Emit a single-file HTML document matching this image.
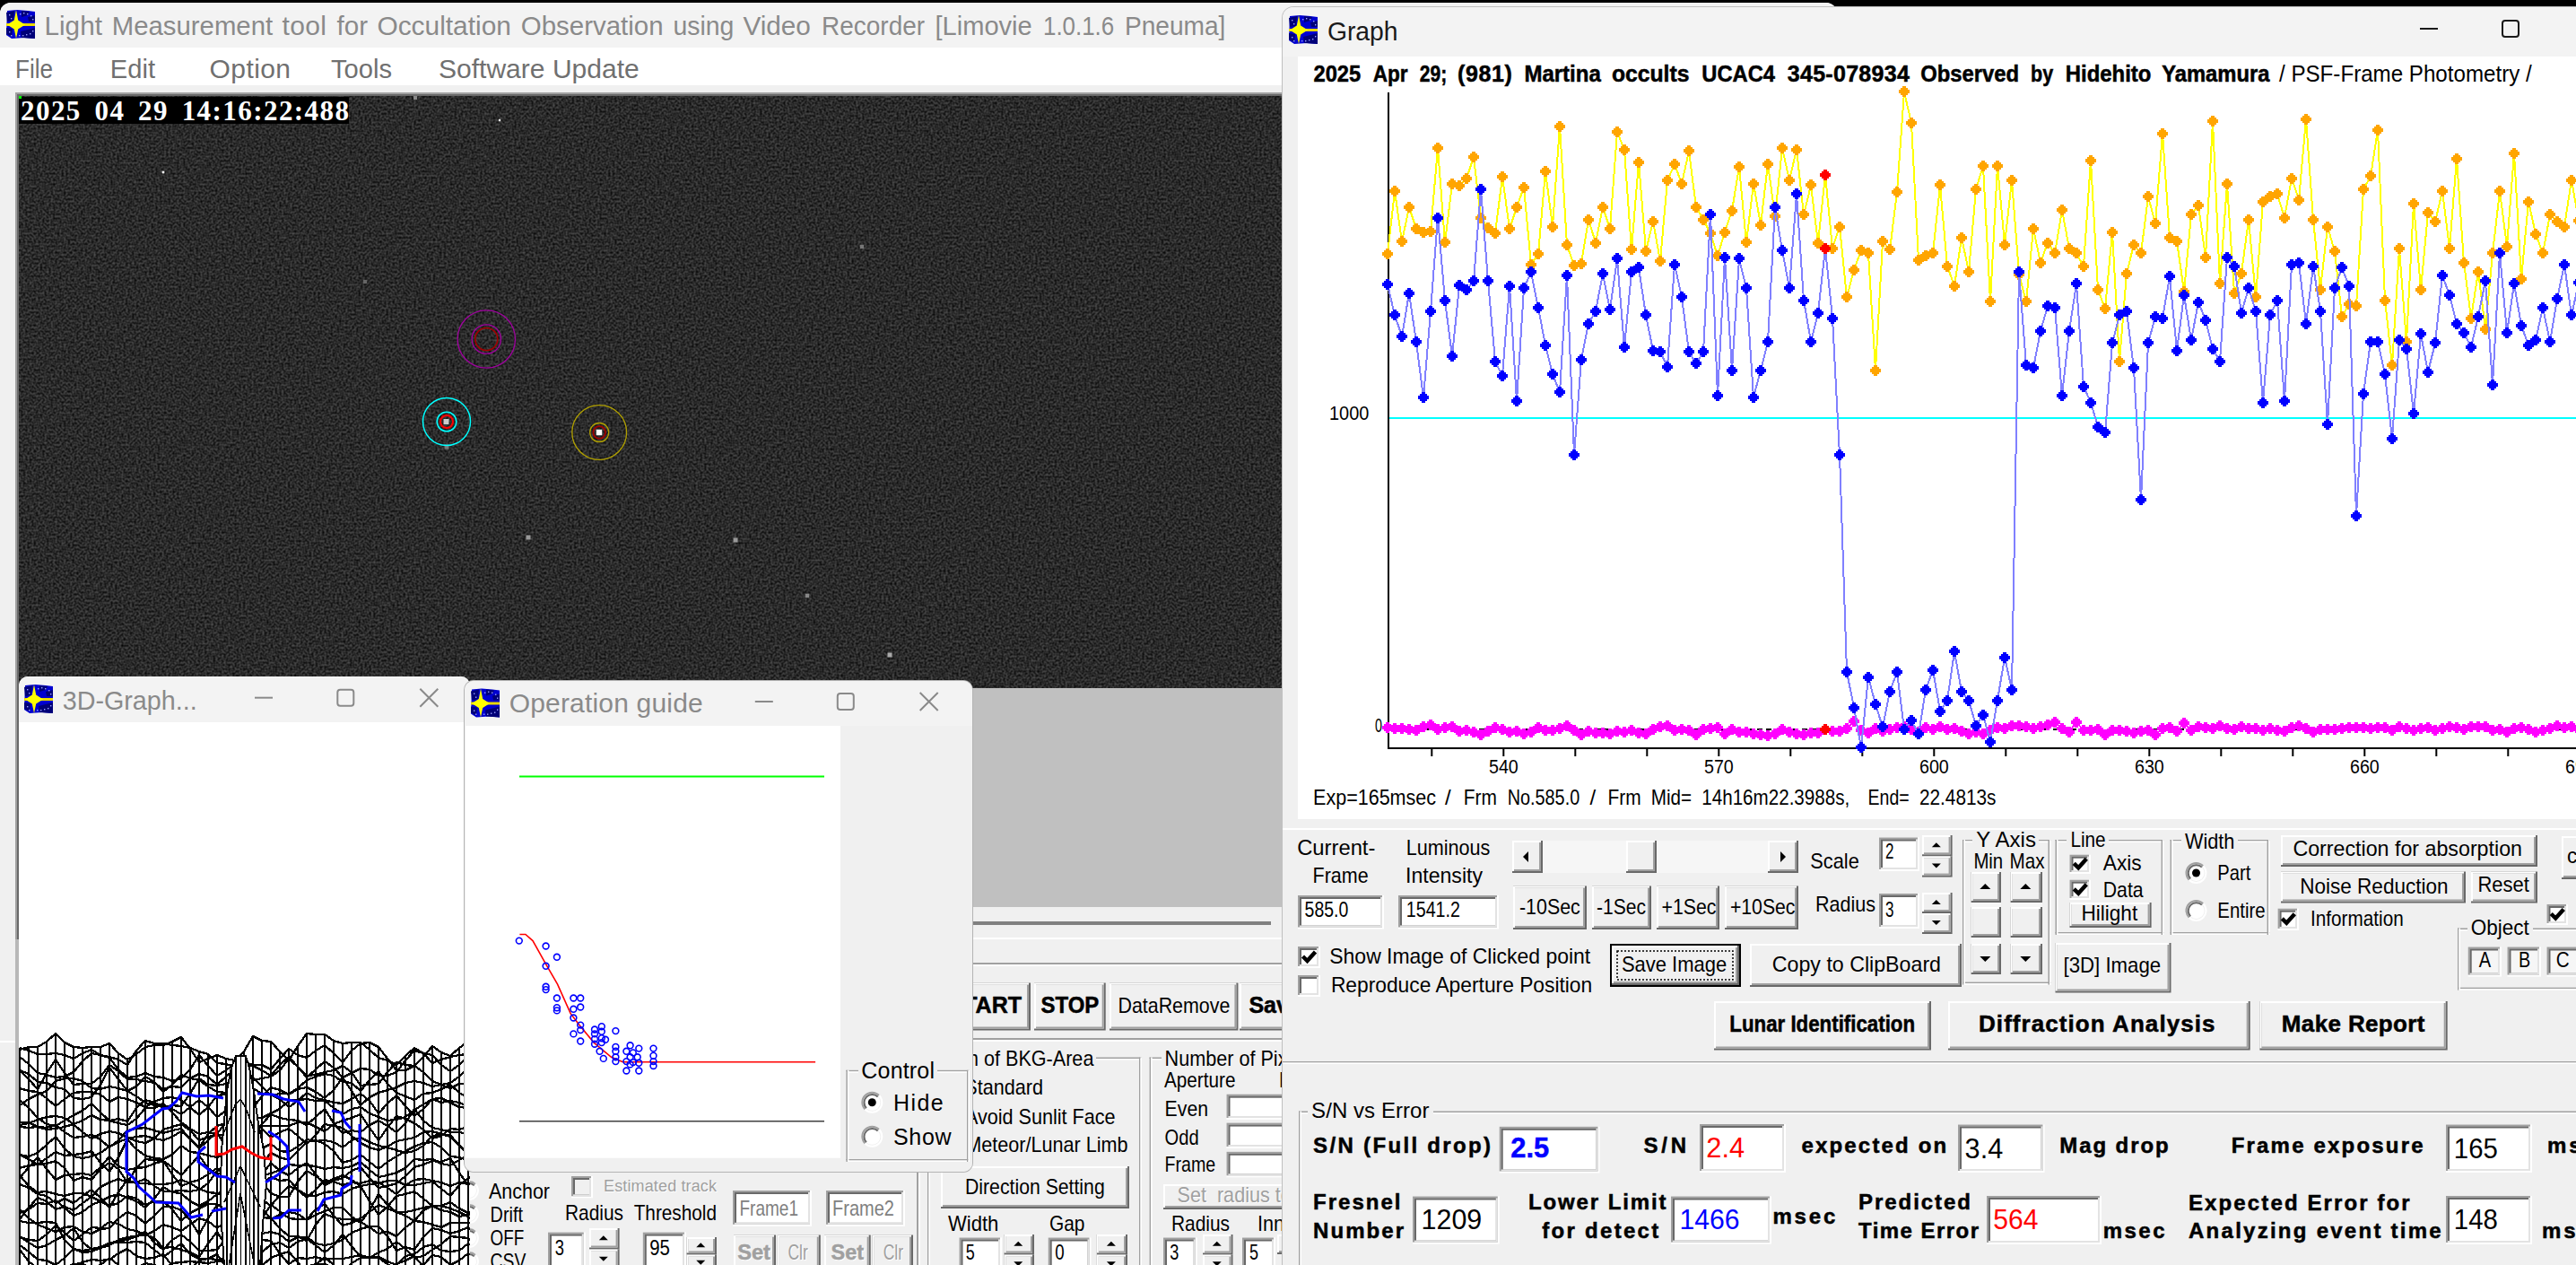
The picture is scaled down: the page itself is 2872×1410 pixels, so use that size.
<!DOCTYPE html>
<html lang="en"><head><meta charset="utf-8"><title>Limovie</title>
<style>
html,body{margin:0;padding:0;background:#000;}
body{width:2872px;height:1410px;overflow:hidden;position:relative;font-family:"Liberation Sans",sans-serif;}
.win{position:absolute;overflow:hidden;}
.win svg{display:block;font-family:"Liberation Sans",sans-serif;}
text{white-space:pre;}
</style></head><body>
<svg width="0" height="0" style="position:absolute"><defs>
<filter id="noise" x="0" y="0" width="100%" height="100%" color-interpolation-filters="sRGB">
<feTurbulence type="fractalNoise" baseFrequency="0.42" numOctaves="1" seed="5" result="n"/>
<feColorMatrix type="matrix" values="0.42 0 0 0 -0.043  0.42 0 0 0 -0.043  0.42 0 0 0 -0.043  0 0 0 0 1"/>
</filter></defs></svg>
<div class="win" style="left:0px;top:3px;width:2048px;height:1407px;border-radius:12px 12px 0 0;background:#f0f0f0;"><svg width="2048" height="1407" viewBox="0 3 2048 1407"><rect x="0" y="3" width="2048" height="50" fill="#f3f3f3"/><rect x="0" y="53" width="2048" height="42" fill="#ffffff"/><rect x="0" y="95" width="2048" height="1315" fill="#f0f0f0"/><g transform="translate(7,11)"><path d="M1 1 L12 0 L24 1 L32 2 L32 32 L20 31 L6 32 L0 28 Z" fill="#0000d0"/><path d="M0 3 L9 1 L8 12 L1 13 Z M17 1 L26 2 L24 6 L17 8 Z M24 8 L32 6 L32 13 L25 13 Z M0 20 L7 21 L6 30 L0 27 Z M16 24 L32 20 L32 32 L17 31 Z" fill="#000078"/><rect x="3" y="5" width="1.4" height="1.4" fill="#9aa0ff"/><rect x="5" y="9" width="1.4" height="1.4" fill="#9aa0ff"/><rect x="19" y="3" width="1.4" height="1.4" fill="#9aa0ff"/><rect x="23" y="4" width="1.4" height="1.4" fill="#9aa0ff"/><rect x="27" y="6" width="1.4" height="1.4" fill="#9aa0ff"/><rect x="29" y="10" width="1.4" height="1.4" fill="#9aa0ff"/><rect x="3" y="24" width="1.4" height="1.4" fill="#9aa0ff"/><rect x="5" y="28" width="1.4" height="1.4" fill="#9aa0ff"/><rect x="18" y="28" width="1.4" height="1.4" fill="#9aa0ff"/><rect x="22" y="27" width="1.4" height="1.4" fill="#9aa0ff"/><rect x="26" y="26" width="1.4" height="1.4" fill="#9aa0ff"/><rect x="29" y="23" width="1.4" height="1.4" fill="#9aa0ff"/><rect x="15" y="4" width="1.4" height="1.4" fill="#9aa0ff"/><rect x="14" y="28" width="1.4" height="1.4" fill="#9aa0ff"/><rect x="0" y="15" width="32" height="3" fill="#e8d800"/><path d="M11 0 L13.2 11.5 L21 16.5 L13.2 21.5 L11 32 L8.8 21.5 L1 16.5 L8.8 11.5 Z" fill="#ffff00"/></g><text x="49.5" y="39.0" font-size="30" fill="#8a8a8a" textLength="64.4" lengthAdjust="spacingAndGlyphs">Light</text><text x="124.8" y="39.0" font-size="30" fill="#8a8a8a" textLength="179.3" lengthAdjust="spacingAndGlyphs">Measurement</text><text x="314.5" y="39.0" font-size="30" fill="#8a8a8a" textLength="49.4" lengthAdjust="spacing">tool</text><text x="375.6" y="39.0" font-size="30" fill="#8a8a8a" textLength="34.5" lengthAdjust="spacingAndGlyphs">for</text><text x="420.4" y="39.0" font-size="30" fill="#8a8a8a" textLength="149.5" lengthAdjust="spacingAndGlyphs">Occultation</text><text x="580.8" y="39.0" font-size="30" fill="#8a8a8a" textLength="158.7" lengthAdjust="spacingAndGlyphs">Observation</text><text x="750.4" y="39.0" font-size="30" fill="#8a8a8a" textLength="67.9" lengthAdjust="spacingAndGlyphs">using</text><text x="828.4" y="39.0" font-size="30" fill="#8a8a8a" textLength="75.5" lengthAdjust="spacingAndGlyphs">Video</text><text x="916.1" y="39.0" font-size="30" fill="#8a8a8a" textLength="115.0" lengthAdjust="spacingAndGlyphs">Recorder</text><text x="1042.5" y="39.0" font-size="30" fill="#8a8a8a" textLength="108.2" lengthAdjust="spacingAndGlyphs">[Limovie</text><text x="1163.0" y="39.0" font-size="30" fill="#8a8a8a" textLength="79.2" lengthAdjust="spacingAndGlyphs">1.0.1.6</text><text x="1253.9" y="39.0" font-size="30" fill="#8a8a8a" textLength="112.5" lengthAdjust="spacingAndGlyphs">Pneuma]</text><text x="17.0" y="86.8" font-size="30" fill="#707070" textLength="42.0" lengthAdjust="spacingAndGlyphs">File</text><text x="122.8" y="86.8" font-size="30" fill="#707070" textLength="50.2" lengthAdjust="spacingAndGlyphs">Edit</text><text x="233.6" y="86.8" font-size="30" fill="#707070" textLength="90.4" lengthAdjust="spacing">Option</text><text x="369.0" y="86.8" font-size="30" fill="#707070" textLength="68.0" lengthAdjust="spacingAndGlyphs">Tools</text><text x="489.0" y="86.8" font-size="30" fill="#707070" textLength="223.7" lengthAdjust="spacing">Software Update</text><rect x="17" y="103" width="1423" height="944" fill="#a0a0a0"/><rect x="19" y="105" width="1421" height="942" fill="#696969"/><rect x="21" y="107" width="1419" height="904" fill="#c0c0c0"/><rect x="21" y="107" width="1419" height="660" fill="#2d2d2d"/><rect x="21" y="107" width="1419" height="660" filter="url(#noise)" opacity="1"/><rect x="180.7" y="190.7" width="2.6" height="2.6" fill="#fff"/><rect x="555.8" y="132.8" width="2.4" height="2.4" fill="#eee"/><rect x="461" y="107" width="4" height="4" fill="#888"/><rect x="958.8" y="272.8" width="4.4" height="4.4" fill="#777"/><rect x="405" y="312" width="4" height="4" fill="#666"/><rect x="586.5" y="596.5" width="5" height="5" fill="#999"/><rect x="817.5" y="599.5" width="5" height="5" fill="#999"/><rect x="897.8" y="661.8" width="4.4" height="4.4" fill="#888"/><rect x="989.5" y="727.5" width="5" height="5" fill="#aaa"/><rect x="495.5" y="495.5" width="5" height="5" fill="#777"/><rect x="494.5" y="467" width="6" height="6" fill="#ccc"/><rect x="664.8" y="478.8" width="6.4" height="6.4" fill="#fff"/><circle cx="542.3" cy="378" r="32.2" fill="none" stroke="#a000a0" stroke-width="1.3"/><circle cx="542.3" cy="378" r="16.2" fill="none" stroke="#a000a0" stroke-width="1.3"/><circle cx="542.3" cy="378" r="12.5" fill="none" stroke="#a00000" stroke-width="1.6"/><circle cx="498" cy="470" r="26.5" fill="none" stroke="#00ffff" stroke-width="1.5"/><circle cx="498" cy="470" r="10.8" fill="none" stroke="#00ffff" stroke-width="1.5"/><circle cx="498" cy="470" r="7" fill="none" stroke="#ff0000" stroke-width="2"/><circle cx="668.2" cy="482" r="30.4" fill="none" stroke="#b0a000" stroke-width="1.3"/><circle cx="668.2" cy="482" r="10.5" fill="none" stroke="#b0a000" stroke-width="1.3"/><circle cx="668.2" cy="482" r="6.8" fill="none" stroke="#a00000" stroke-width="1.8"/><rect x="21" y="108" width="368" height="30" fill="#000"/><rect x="21" y="107" width="3" height="3" fill="#00ff00"/><text x="23" y="134" font-size="31" font-weight="bold" font-family='"Liberation Serif", serif' fill="#fff" textLength="366" lengthAdjust="spacing" word-spacing="5.5">2025 04 29 14:16:22:488</text><rect x="0" y="1160" width="18" height="2" fill="#ffffff"/><rect x="21" y="1011" width="1419" height="399" fill="#f0f0f0"/><rect x="17" y="1047" width="4" height="363" fill="#b8b8b8"/><rect x="1040" y="1027" width="377" height="4" fill="#808080"/><rect x="1040" y="1045" width="400" height="2" fill="#ffffff"/><rect x="1040" y="1073" width="400" height="2" fill="#a0a0a0"/><rect x="1040" y="1075" width="400" height="2" fill="#ffffff"/><rect x="1040" y="1157" width="400" height="2" fill="#a0a0a0"/><rect x="1040" y="1159" width="400" height="2" fill="#ffffff"/><rect x="1040" y="1095.5" width="109" height="53" fill="#696969"/><rect x="1040" y="1095.5" width="107" height="51" fill="#ffffff"/><rect x="1042" y="1097.5" width="105" height="49" fill="#a0a0a0"/><rect x="1042" y="1097.5" width="103" height="47" fill="#f0f0f0"/><text x="1057.5" y="1128.6" font-size="25" font-weight="bold" stroke="#000" stroke-width="0.5" fill="#000" textLength="81.5" lengthAdjust="spacing">START</text><rect x="1153" y="1095.5" width="79.7" height="53" fill="#696969"/><rect x="1153" y="1095.5" width="77.7" height="51" fill="#ffffff"/><rect x="1155" y="1097.5" width="75.7" height="49" fill="#a0a0a0"/><rect x="1155" y="1097.5" width="73.7" height="47" fill="#f0f0f0"/><text x="1160.5" y="1128.6" font-size="25" font-weight="bold" stroke="#000" stroke-width="0.5" fill="#000" textLength="64.7" lengthAdjust="spacingAndGlyphs">STOP</text><rect x="1237" y="1095.5" width="143.4" height="53" fill="#696969"/><rect x="1237" y="1095.5" width="141.4" height="51" fill="#ffffff"/><rect x="1239" y="1097.5" width="139.4" height="49" fill="#a0a0a0"/><rect x="1239" y="1097.5" width="137.4" height="47" fill="#f0f0f0"/><text x="1246.5" y="1128.6" font-size="24" fill="#000" textLength="124.8" lengthAdjust="spacingAndGlyphs">DataRemove</text><rect x="1382" y="1095.5" width="98" height="53" fill="#696969"/><rect x="1382" y="1095.5" width="96" height="51" fill="#ffffff"/><rect x="1384" y="1097.5" width="94" height="49" fill="#a0a0a0"/><rect x="1384" y="1097.5" width="92" height="47" fill="#f0f0f0"/><text x="1392.4" y="1128.6" font-size="25" font-weight="bold" stroke="#000" stroke-width="0.5" fill="#000" textLength="58.4" lengthAdjust="spacing">Save</text><rect x="1034" y="1178.5" width="6" height="1.5" fill="#a0a0a0"/><rect x="1034" y="1180" width="6" height="1.5" fill="#ffffff"/><rect x="1222" y="1178.5" width="51" height="1.5" fill="#a0a0a0"/><rect x="1222" y="1180" width="51" height="1.5" fill="#ffffff"/><rect x="1034" y="1417" width="239" height="1.5" fill="#a0a0a0"/><rect x="1034" y="1418.5" width="239" height="1.5" fill="#ffffff"/><rect x="1034" y="1178.5" width="1.5" height="241.5" fill="#a0a0a0"/><rect x="1035.5" y="1178.5" width="1.5" height="241.5" fill="#ffffff"/><rect x="1270" y="1178.5" width="1.5" height="241.5" fill="#a0a0a0"/><rect x="1271.5" y="1178.5" width="1.5" height="241.5" fill="#ffffff"/><text x="1040.6" y="1188.4" font-size="24" fill="#000" textLength="178.8" lengthAdjust="spacingAndGlyphs">Form of BKG-Area</text><text x="1075.3" y="1220.3" font-size="24" fill="#000" textLength="87.7" lengthAdjust="spacingAndGlyphs">Standard</text><text x="1075.9" y="1252.5" font-size="24" fill="#000" textLength="167.7" lengthAdjust="spacingAndGlyphs">Avoid Sunlit Face</text><text x="1076.2" y="1284.4" font-size="24" fill="#000" textLength="181.3" lengthAdjust="spacingAndGlyphs">Meteor/Lunar Limb</text><rect x="1049" y="1300" width="210" height="47" fill="#696969"/><rect x="1049" y="1300" width="208" height="45" fill="#ffffff"/><rect x="1051" y="1302" width="206" height="43" fill="#a0a0a0"/><rect x="1051" y="1302" width="204" height="41" fill="#f0f0f0"/><text x="1076.0" y="1331.3" font-size="24" fill="#000" textLength="155.7" lengthAdjust="spacingAndGlyphs">Direction Setting</text><text x="1057.0" y="1372.0" font-size="24" fill="#000" textLength="56.3" lengthAdjust="spacingAndGlyphs">Width</text><text x="1170.0" y="1372.0" font-size="24" fill="#000" textLength="39.5" lengthAdjust="spacingAndGlyphs">Gap</text><rect x="1069.5" y="1379.5" width="47.5" height="45.5" fill="#ffffff"/><rect x="1069.5" y="1379.5" width="45.5" height="43.5" fill="#a0a0a0"/><rect x="1071.5" y="1381.5" width="43.5" height="41.5" fill="#e3e3e3"/><rect x="1071.5" y="1381.5" width="41.5" height="39.5" fill="#696969"/><rect x="1073.5" y="1383.5" width="39.5" height="37.5" fill="#ffffff"/><text x="1076.7" y="1403.7" font-size="24" fill="#000" textLength="10.0" lengthAdjust="spacingAndGlyphs">5</text><rect x="1119.5" y="1376" width="33.5" height="22.5" fill="#696969"/><rect x="1119.5" y="1376" width="31.5" height="20.5" fill="#ffffff"/><rect x="1121.5" y="1378" width="29.5" height="18.5" fill="#a0a0a0"/><rect x="1121.5" y="1378" width="27.5" height="16.5" fill="#f0f0f0"/><polygon points="1130.25,1388.75 1140.25,1388.75 1135.25,1383.75" fill="#000"/><rect x="1119.5" y="1398.5" width="33.5" height="22.5" fill="#696969"/><rect x="1119.5" y="1398.5" width="31.5" height="20.5" fill="#ffffff"/><rect x="1121.5" y="1400.5" width="29.5" height="18.5" fill="#a0a0a0"/><rect x="1121.5" y="1400.5" width="27.5" height="16.5" fill="#f0f0f0"/><polygon points="1130.25,1406.25 1140.25,1406.25 1135.25,1411.25" fill="#000"/><rect x="1168.7" y="1379.5" width="47.8" height="45.5" fill="#ffffff"/><rect x="1168.7" y="1379.5" width="45.8" height="43.5" fill="#a0a0a0"/><rect x="1170.7" y="1381.5" width="43.8" height="41.5" fill="#e3e3e3"/><rect x="1170.7" y="1381.5" width="41.8" height="39.5" fill="#696969"/><rect x="1172.7" y="1383.5" width="39.8" height="37.5" fill="#ffffff"/><text x="1176.3" y="1403.7" font-size="24" fill="#000" textLength="10.4" lengthAdjust="spacingAndGlyphs">0</text><rect x="1222.8" y="1376" width="34.2" height="22.5" fill="#696969"/><rect x="1222.8" y="1376" width="32.2" height="20.5" fill="#ffffff"/><rect x="1224.8" y="1378" width="30.2" height="18.5" fill="#a0a0a0"/><rect x="1224.8" y="1378" width="28.2" height="16.5" fill="#f0f0f0"/><polygon points="1233.9,1388.75 1243.9,1388.75 1238.9,1383.75" fill="#000"/><rect x="1222.8" y="1398.5" width="34.2" height="22.5" fill="#696969"/><rect x="1222.8" y="1398.5" width="32.2" height="20.5" fill="#ffffff"/><rect x="1224.8" y="1400.5" width="30.2" height="18.5" fill="#a0a0a0"/><rect x="1224.8" y="1400.5" width="28.2" height="16.5" fill="#f0f0f0"/><polygon points="1233.9,1406.25 1243.9,1406.25 1238.9,1411.25" fill="#000"/><rect x="1281.6" y="1178.5" width="13.4" height="1.5" fill="#a0a0a0"/><rect x="1281.6" y="1180" width="13.4" height="1.5" fill="#ffffff"/><rect x="1500" y="1178.5" width="0" height="1.5" fill="#a0a0a0"/><rect x="1500" y="1180" width="0" height="1.5" fill="#ffffff"/><rect x="1281.6" y="1417" width="218.4" height="1.5" fill="#a0a0a0"/><rect x="1281.6" y="1418.5" width="218.4" height="1.5" fill="#ffffff"/><rect x="1281.6" y="1178.5" width="1.5" height="241.5" fill="#a0a0a0"/><rect x="1283.1" y="1178.5" width="1.5" height="241.5" fill="#ffffff"/><rect x="1497" y="1178.5" width="1.5" height="241.5" fill="#a0a0a0"/><rect x="1498.5" y="1178.5" width="1.5" height="241.5" fill="#ffffff"/><text x="1298.6" y="1188.4" font-size="24" fill="#000" textLength="164.5" lengthAdjust="spacingAndGlyphs">Number of Pixels</text><text x="1298.0" y="1212.1" font-size="24" fill="#000" textLength="79.4" lengthAdjust="spacingAndGlyphs">Aperture</text><text x="1426.0" y="1212.1" font-size="24" fill="#000" textLength="115.3" lengthAdjust="spacingAndGlyphs">Background</text><text x="1298.6" y="1244.4" font-size="24" fill="#000" textLength="48.4" lengthAdjust="spacingAndGlyphs">Even</text><text x="1298.6" y="1275.7" font-size="24" fill="#000" textLength="38.0" lengthAdjust="spacingAndGlyphs">Odd</text><text x="1298.6" y="1305.6" font-size="24" fill="#000" textLength="56.6" lengthAdjust="spacingAndGlyphs">Frame</text><rect x="1367.5" y="1219.7" width="112.5" height="28.3" fill="#ffffff"/><rect x="1367.5" y="1219.7" width="110.5" height="26.3" fill="#a0a0a0"/><rect x="1369.5" y="1221.7" width="108.5" height="24.3" fill="#e3e3e3"/><rect x="1369.5" y="1221.7" width="106.5" height="22.3" fill="#696969"/><rect x="1371.5" y="1223.7" width="104.5" height="20.3" fill="#ffffff"/><rect x="1367.5" y="1251.6" width="112.5" height="28.4" fill="#ffffff"/><rect x="1367.5" y="1251.6" width="110.5" height="26.4" fill="#a0a0a0"/><rect x="1369.5" y="1253.6" width="108.5" height="24.4" fill="#e3e3e3"/><rect x="1369.5" y="1253.6" width="106.5" height="22.4" fill="#696969"/><rect x="1371.5" y="1255.6" width="104.5" height="20.4" fill="#ffffff"/><rect x="1367.5" y="1283.8" width="112.5" height="28.5" fill="#ffffff"/><rect x="1367.5" y="1283.8" width="110.5" height="26.5" fill="#a0a0a0"/><rect x="1369.5" y="1285.8" width="108.5" height="24.5" fill="#e3e3e3"/><rect x="1369.5" y="1285.8" width="106.5" height="22.5" fill="#696969"/><rect x="1371.5" y="1287.8" width="104.5" height="20.5" fill="#ffffff"/><rect x="1297" y="1320" width="203" height="28" fill="#696969"/><rect x="1297" y="1320" width="201" height="26" fill="#ffffff"/><rect x="1299" y="1322" width="199" height="24" fill="#a0a0a0"/><rect x="1299" y="1322" width="197" height="22" fill="#f0f0f0"/><text x="1313.5" y="1340.8" font-size="24" fill="#ffffff" textLength="127.3" lengthAdjust="spacingAndGlyphs">Set  radius to</text><text x="1312.5" y="1339.8" font-size="24" fill="#a0a0a0" textLength="127.3" lengthAdjust="spacingAndGlyphs">Set  radius to</text><text x="1306.0" y="1372.0" font-size="24" fill="#000" textLength="65.0" lengthAdjust="spacingAndGlyphs">Radius</text><text x="1402.0" y="1372.0" font-size="24" fill="#000" textLength="49.2" lengthAdjust="spacingAndGlyphs">Inner</text><rect x="1297" y="1379.5" width="37.7" height="45.5" fill="#ffffff"/><rect x="1297" y="1379.5" width="35.7" height="43.5" fill="#a0a0a0"/><rect x="1299" y="1381.5" width="33.7" height="41.5" fill="#e3e3e3"/><rect x="1299" y="1381.5" width="31.7" height="39.5" fill="#696969"/><rect x="1301" y="1383.5" width="29.7" height="37.5" fill="#ffffff"/><text x="1304.3" y="1403.7" font-size="24" fill="#000" textLength="10.1" lengthAdjust="spacingAndGlyphs">3</text><rect x="1341" y="1376" width="33.5" height="22.5" fill="#696969"/><rect x="1341" y="1376" width="31.5" height="20.5" fill="#ffffff"/><rect x="1343" y="1378" width="29.5" height="18.5" fill="#a0a0a0"/><rect x="1343" y="1378" width="27.5" height="16.5" fill="#f0f0f0"/><polygon points="1351.75,1388.75 1361.75,1388.75 1356.75,1383.75" fill="#000"/><rect x="1341" y="1398.5" width="33.5" height="22.5" fill="#696969"/><rect x="1341" y="1398.5" width="31.5" height="20.5" fill="#ffffff"/><rect x="1343" y="1400.5" width="29.5" height="18.5" fill="#a0a0a0"/><rect x="1343" y="1400.5" width="27.5" height="16.5" fill="#f0f0f0"/><polygon points="1351.75,1406.25 1361.75,1406.25 1356.75,1411.25" fill="#000"/><rect x="1385" y="1379.5" width="37" height="45.5" fill="#ffffff"/><rect x="1385" y="1379.5" width="35" height="43.5" fill="#a0a0a0"/><rect x="1387" y="1381.5" width="33" height="41.5" fill="#e3e3e3"/><rect x="1387" y="1381.5" width="31" height="39.5" fill="#696969"/><rect x="1389" y="1383.5" width="29" height="37.5" fill="#ffffff"/><text x="1393.0" y="1403.7" font-size="24" fill="#000" textLength="10.0" lengthAdjust="spacingAndGlyphs">5</text><rect x="1424" y="1376" width="36" height="22" fill="#696969"/><rect x="1424" y="1376" width="34" height="20" fill="#ffffff"/><rect x="1426" y="1378" width="32" height="18" fill="#a0a0a0"/><rect x="1426" y="1378" width="30" height="16" fill="#f0f0f0"/><rect x="1022" y="1300" width="2" height="110" fill="#a0a0a0"/><rect x="1024" y="1300" width="2" height="110" fill="#ffffff"/><circle cx="523" cy="1327" r="8" fill="#fff"/><path d="M515.93 1334.07 A10 10 0 0 1 530.07 1319.93" stroke="#a0a0a0" stroke-width="2" fill="none"/><path d="M517.344 1332.66 A8 8 0 0 1 528.656 1321.34" stroke="#696969" stroke-width="2" fill="none"/><path d="M515.93 1334.07 A10 10 0 0 0 530.07 1319.93" stroke="#ffffff" stroke-width="2" fill="none"/><circle cx="523" cy="1353" r="8" fill="#fff"/><path d="M515.93 1360.07 A10 10 0 0 1 530.07 1345.93" stroke="#a0a0a0" stroke-width="2" fill="none"/><path d="M517.344 1358.66 A8 8 0 0 1 528.656 1347.34" stroke="#696969" stroke-width="2" fill="none"/><path d="M515.93 1360.07 A10 10 0 0 0 530.07 1345.93" stroke="#ffffff" stroke-width="2" fill="none"/><circle cx="523" cy="1380" r="8" fill="#fff"/><path d="M515.93 1387.07 A10 10 0 0 1 530.07 1372.93" stroke="#a0a0a0" stroke-width="2" fill="none"/><path d="M517.344 1385.66 A8 8 0 0 1 528.656 1374.34" stroke="#696969" stroke-width="2" fill="none"/><path d="M515.93 1387.07 A10 10 0 0 0 530.07 1372.93" stroke="#ffffff" stroke-width="2" fill="none"/><circle cx="523" cy="1406" r="8" fill="#fff"/><path d="M515.93 1413.07 A10 10 0 0 1 530.07 1398.93" stroke="#a0a0a0" stroke-width="2" fill="none"/><path d="M517.344 1411.66 A8 8 0 0 1 528.656 1400.34" stroke="#696969" stroke-width="2" fill="none"/><path d="M515.93 1413.07 A10 10 0 0 0 530.07 1398.93" stroke="#ffffff" stroke-width="2" fill="none"/><text x="545.0" y="1336.3" font-size="24" fill="#000" textLength="68.0" lengthAdjust="spacingAndGlyphs">Anchor</text><text x="546.6" y="1361.5" font-size="24" fill="#000" textLength="36.4" lengthAdjust="spacingAndGlyphs">Drift</text><text x="546.6" y="1387.7" font-size="24" fill="#000" textLength="37.8" lengthAdjust="spacingAndGlyphs">OFF</text><text x="546.6" y="1413.9" font-size="24" fill="#000" textLength="39.8" lengthAdjust="spacingAndGlyphs">CSV</text><rect x="637" y="1311" width="24" height="24.3" fill="#ffffff"/><rect x="637" y="1311" width="22" height="22.3" fill="#a0a0a0"/><rect x="639" y="1313" width="20" height="20.3" fill="#e3e3e3"/><rect x="639" y="1313" width="18" height="18.3" fill="#696969"/><rect x="641" y="1315" width="16" height="16.3" fill="#f0f0f0"/><text x="674.0" y="1329.1" font-size="18" fill="#ffffff" textLength="126.0" lengthAdjust="spacing">Estimated track</text><text x="673.0" y="1328.1" font-size="18" fill="#a0a0a0" textLength="126.0" lengthAdjust="spacing">Estimated track</text><text x="630.0" y="1360.2" font-size="24" fill="#000" textLength="65.0" lengthAdjust="spacingAndGlyphs">Radius</text><text x="706.7" y="1360.2" font-size="24" fill="#000" textLength="92.3" lengthAdjust="spacingAndGlyphs">Threshold</text><rect x="611" y="1373.6" width="41.8" height="51.4" fill="#ffffff"/><rect x="611" y="1373.6" width="39.8" height="49.4" fill="#a0a0a0"/><rect x="613" y="1375.6" width="37.8" height="47.4" fill="#e3e3e3"/><rect x="613" y="1375.6" width="35.8" height="45.4" fill="#696969"/><rect x="615" y="1377.6" width="33.8" height="43.4" fill="#ffffff"/><text x="618.8" y="1399.4" font-size="24" fill="#000" textLength="10.2" lengthAdjust="spacingAndGlyphs">3</text><rect x="657" y="1369" width="33.6" height="23.5" fill="#696969"/><rect x="657" y="1369" width="31.6" height="21.5" fill="#ffffff"/><rect x="659" y="1371" width="29.6" height="19.5" fill="#a0a0a0"/><rect x="659" y="1371" width="27.6" height="17.5" fill="#f0f0f0"/><polygon points="667.8,1382.25 677.8,1382.25 672.8,1377.25" fill="#000"/><rect x="657" y="1392.5" width="33.6" height="23.5" fill="#696969"/><rect x="657" y="1392.5" width="31.6" height="21.5" fill="#ffffff"/><rect x="659" y="1394.5" width="29.6" height="19.5" fill="#a0a0a0"/><rect x="659" y="1394.5" width="27.6" height="17.5" fill="#f0f0f0"/><polygon points="667.8,1400.75 677.8,1400.75 672.8,1405.75" fill="#000"/><rect x="716.8" y="1373.6" width="48.2" height="51.4" fill="#ffffff"/><rect x="716.8" y="1373.6" width="46.2" height="49.4" fill="#a0a0a0"/><rect x="718.8" y="1375.6" width="44.2" height="47.4" fill="#e3e3e3"/><rect x="718.8" y="1375.6" width="42.2" height="45.4" fill="#696969"/><rect x="720.8" y="1377.6" width="40.2" height="43.4" fill="#ffffff"/><text x="724.2" y="1399.4" font-size="24" fill="#000" textLength="22.7" lengthAdjust="spacingAndGlyphs">95</text><rect x="765.5" y="1379" width="33.5" height="19.5" fill="#696969"/><rect x="765.5" y="1379" width="31.5" height="17.5" fill="#ffffff"/><rect x="767.5" y="1381" width="29.5" height="15.5" fill="#a0a0a0"/><rect x="767.5" y="1381" width="27.5" height="13.5" fill="#f0f0f0"/><polygon points="776.25,1390.25 786.25,1390.25 781.25,1385.25" fill="#000"/><rect x="765.5" y="1398.5" width="33.5" height="19.5" fill="#696969"/><rect x="765.5" y="1398.5" width="31.5" height="17.5" fill="#ffffff"/><rect x="767.5" y="1400.5" width="29.5" height="15.5" fill="#a0a0a0"/><rect x="767.5" y="1400.5" width="27.5" height="13.5" fill="#f0f0f0"/><polygon points="776.25,1404.75 786.25,1404.75 781.25,1409.75" fill="#000"/><rect x="817" y="1327" width="88" height="39.8" fill="#ffffff"/><rect x="817" y="1327" width="86" height="37.8" fill="#a0a0a0"/><rect x="819" y="1329" width="84" height="35.8" fill="#e3e3e3"/><rect x="819" y="1329" width="82" height="33.8" fill="#696969"/><rect x="821" y="1331" width="80" height="31.8" fill="#ffffff"/><text x="824.5" y="1354.7" font-size="24" fill="#808080" textLength="65.5" lengthAdjust="spacingAndGlyphs">Frame1</text><rect x="921" y="1327" width="88" height="39.8" fill="#ffffff"/><rect x="921" y="1327" width="86" height="37.8" fill="#a0a0a0"/><rect x="923" y="1329" width="84" height="35.8" fill="#e3e3e3"/><rect x="923" y="1329" width="82" height="33.8" fill="#696969"/><rect x="925" y="1331" width="80" height="31.8" fill="#ffffff"/><text x="928.0" y="1354.7" font-size="24" fill="#808080" textLength="69.0" lengthAdjust="spacingAndGlyphs">Frame2</text><rect x="818" y="1376.5" width="47" height="48.5" fill="#696969"/><rect x="818" y="1376.5" width="45" height="46.5" fill="#ffffff"/><rect x="820" y="1378.5" width="43" height="44.5" fill="#a0a0a0"/><rect x="820" y="1378.5" width="41" height="42.5" fill="#f0f0f0"/><text x="823.2" y="1405.2" font-size="24" font-weight="bold" stroke="#ffffff" stroke-width="0.5" fill="#ffffff" textLength="36.8" lengthAdjust="spacingAndGlyphs">Set</text><text x="822.2" y="1404.2" font-size="24" font-weight="bold" stroke="#a0a0a0" stroke-width="0.5" fill="#a0a0a0" textLength="36.8" lengthAdjust="spacingAndGlyphs">Set</text><rect x="866.8" y="1376.5" width="48" height="48.5" fill="#696969"/><rect x="866.8" y="1376.5" width="46" height="46.5" fill="#ffffff"/><rect x="868.8" y="1378.5" width="44" height="44.5" fill="#a0a0a0"/><rect x="868.8" y="1378.5" width="42" height="42.5" fill="#f0f0f0"/><text x="879.5" y="1405.2" font-size="24" fill="#ffffff" textLength="22.3" lengthAdjust="spacingAndGlyphs">Clr</text><text x="878.5" y="1404.2" font-size="24" fill="#a0a0a0" textLength="22.3" lengthAdjust="spacingAndGlyphs">Clr</text><rect x="919" y="1376.5" width="51.7" height="48.5" fill="#696969"/><rect x="919" y="1376.5" width="49.7" height="46.5" fill="#ffffff"/><rect x="921" y="1378.5" width="47.7" height="44.5" fill="#a0a0a0"/><rect x="921" y="1378.5" width="45.7" height="42.5" fill="#f0f0f0"/><text x="927.6" y="1405.2" font-size="24" font-weight="bold" stroke="#ffffff" stroke-width="0.5" fill="#ffffff" textLength="36.4" lengthAdjust="spacingAndGlyphs">Set</text><text x="926.6" y="1404.2" font-size="24" font-weight="bold" stroke="#a0a0a0" stroke-width="0.5" fill="#a0a0a0" textLength="36.4" lengthAdjust="spacingAndGlyphs">Set</text><rect x="972.6" y="1376.5" width="45.4" height="48.5" fill="#696969"/><rect x="972.6" y="1376.5" width="43.4" height="46.5" fill="#ffffff"/><rect x="974.6" y="1378.5" width="41.4" height="44.5" fill="#a0a0a0"/><rect x="974.6" y="1378.5" width="39.4" height="42.5" fill="#f0f0f0"/><text x="985.7" y="1405.2" font-size="24" fill="#ffffff" textLength="22.3" lengthAdjust="spacingAndGlyphs">Clr</text><text x="984.7" y="1404.2" font-size="24" fill="#a0a0a0" textLength="22.3" lengthAdjust="spacingAndGlyphs">Clr</text></svg></div>
<div class="win" style="left:21px;top:754px;width:503px;height:656px;border-radius:10px 10px 0 0;background:#fff;"><svg width="503" height="656" viewBox="21 754 503 656"><rect x="21" y="754" width="504" height="51" fill="#f3f3f3"/><rect x="21" y="805" width="504" height="605" fill="#ffffff"/><g transform="translate(27,763)"><path d="M1 1 L12 0 L24 1 L32 2 L32 32 L20 31 L6 32 L0 28 Z" fill="#0000d0"/><path d="M0 3 L9 1 L8 12 L1 13 Z M17 1 L26 2 L24 6 L17 8 Z M24 8 L32 6 L32 13 L25 13 Z M0 20 L7 21 L6 30 L0 27 Z M16 24 L32 20 L32 32 L17 31 Z" fill="#000078"/><rect x="3" y="5" width="1.4" height="1.4" fill="#9aa0ff"/><rect x="5" y="9" width="1.4" height="1.4" fill="#9aa0ff"/><rect x="19" y="3" width="1.4" height="1.4" fill="#9aa0ff"/><rect x="23" y="4" width="1.4" height="1.4" fill="#9aa0ff"/><rect x="27" y="6" width="1.4" height="1.4" fill="#9aa0ff"/><rect x="29" y="10" width="1.4" height="1.4" fill="#9aa0ff"/><rect x="3" y="24" width="1.4" height="1.4" fill="#9aa0ff"/><rect x="5" y="28" width="1.4" height="1.4" fill="#9aa0ff"/><rect x="18" y="28" width="1.4" height="1.4" fill="#9aa0ff"/><rect x="22" y="27" width="1.4" height="1.4" fill="#9aa0ff"/><rect x="26" y="26" width="1.4" height="1.4" fill="#9aa0ff"/><rect x="29" y="23" width="1.4" height="1.4" fill="#9aa0ff"/><rect x="15" y="4" width="1.4" height="1.4" fill="#9aa0ff"/><rect x="14" y="28" width="1.4" height="1.4" fill="#9aa0ff"/><rect x="0" y="15" width="32" height="3" fill="#e8d800"/><path d="M11 0 L13.2 11.5 L21 16.5 L13.2 21.5 L11 32 L8.8 21.5 L1 16.5 L8.8 11.5 Z" fill="#ffff00"/></g><text x="69.7" y="791.0" font-size="30" fill="#8a8a8a" textLength="150.0" lengthAdjust="spacingAndGlyphs">3D-Graph...</text><rect x="284" y="776.7" width="20" height="2" fill="#8a8a8a"/><rect x="376.3" y="768.7" width="18" height="18" rx="3" fill="none" stroke="#8a8a8a" stroke-width="2"/><path d="M468.3 767.7 l20 20 m0 -20 l-20 20" stroke="#8a8a8a" stroke-width="2" fill="none"/><path d="M22 1170 L32 1167 L42 1167 L52 1161 L62 1152 L72 1162 L82 1167 L92 1168 L102 1167 L112 1167 L122 1163 L132 1174 L142 1181 L152 1175 L162 1167 L172 1165 L182 1165 L192 1161 L202 1156 L212 1169 L222 1184 L232 1180 L242 1176 L252 1180 L262 1182 L272 1172 L282 1155 L292 1160 L302 1161 L312 1172 L322 1182 L332 1166 L342 1152 L352 1153 L362 1153 L372 1160 L382 1163 L392 1162 L402 1162 L412 1170 L422 1179 L432 1182 L442 1187 L452 1177 L462 1168 L472 1174 L482 1185 L492 1181 L502 1178 L512 1176 L522 1175 L532 1180 M22 1168 L32 1171 L42 1175 L52 1175 L62 1174 L72 1176 L82 1180 L92 1174 L102 1170 L112 1176 L122 1178 L132 1181 L142 1187 L152 1171 L162 1160 L172 1163 L182 1163 L192 1165 L202 1166 L212 1168 L222 1172 L232 1175 L242 1185 L252 1186 L262 1189 L272 1184 L282 1187 L292 1187 L302 1192 L312 1180 L322 1169 L332 1176 L342 1179 L352 1171 L362 1165 L372 1174 L382 1184 L392 1171 L402 1163 L412 1162 L422 1167 L432 1180 L442 1193 L452 1193 L462 1188 L472 1178 L482 1166 L492 1173 L502 1177 L512 1168 L522 1161 L532 1173 M22 1178 L32 1186 L42 1196 L52 1198 L62 1201 L72 1200 L82 1195 L92 1183 L102 1174 L112 1176 L122 1179 L132 1192 L142 1201 L152 1200 L162 1196 L172 1200 L182 1201 L192 1205 L202 1202 L212 1192 L222 1176 L232 1188 L242 1199 L252 1193 L262 1185 L272 1187 L282 1188 L292 1193 L302 1199 L312 1187 L322 1178 L332 1189 L342 1201 L352 1192 L362 1183 L372 1190 L382 1201 L392 1196 L402 1191 L412 1192 L422 1199 L432 1199 L442 1195 L452 1182 L462 1171 L472 1174 L482 1176 L492 1187 L502 1194 L512 1187 L522 1177 L532 1187 M22 1193 L32 1203 L42 1214 L52 1196 L62 1181 L72 1196 L82 1209 L92 1208 L102 1208 L112 1200 L122 1187 L132 1194 L142 1203 L152 1203 L162 1205 L172 1207 L182 1214 L192 1211 L202 1212 L212 1202 L222 1197 L232 1200 L242 1209 L252 1200 L262 1192 L272 1201 L282 1204 L292 1202 L302 1200 L312 1193 L322 1180 L332 1189 L342 1199 L352 1198 L362 1195 L372 1193 L382 1188 L392 1195 L402 1210 L412 1209 L422 1208 L432 1195 L442 1184 L452 1187 L462 1188 L472 1195 L482 1205 L492 1209 L502 1207 L512 1200 L522 1190 L532 1188 M22 1193 L32 1197 L42 1206 L52 1207 L62 1212 L72 1214 L82 1224 L92 1225 L102 1223 L112 1209 L122 1190 L132 1203 L142 1216 L152 1211 L162 1200 L172 1206 L182 1217 L192 1209 L202 1198 L212 1202 L222 1204 L232 1211 L242 1217 L252 1218 L262 1218 L272 1208 L282 1201 L292 1211 L302 1221 L312 1219 L322 1219 L332 1213 L342 1204 L352 1200 L362 1197 L372 1199 L382 1206 L392 1207 L402 1216 L412 1204 L422 1194 L432 1208 L442 1218 L452 1222 L462 1226 L472 1219 L482 1218 L492 1214 L502 1209 L512 1218 L522 1224 L532 1221 M22 1232 L32 1225 L42 1220 L52 1216 L62 1205 L72 1202 L82 1202 L92 1205 L102 1213 L112 1214 L122 1211 L132 1213 L142 1216 L152 1222 L162 1229 L172 1232 L182 1234 L192 1232 L202 1233 L212 1219 L222 1202 L232 1209 L242 1210 L252 1208 L262 1202 L272 1220 L282 1235 L292 1222 L302 1212 L312 1215 L322 1220 L332 1214 L342 1212 L352 1217 L362 1224 L372 1215 L382 1201 L392 1216 L402 1232 L412 1223 L422 1218 L432 1215 L442 1212 L452 1207 L462 1205 L472 1207 L482 1211 L492 1209 L502 1213 L512 1208 L522 1208 L532 1206 M22 1213 L32 1216 L42 1217 L52 1224 L62 1233 L72 1225 L82 1218 L92 1217 L102 1217 L112 1220 L122 1228 L132 1223 L142 1225 L152 1229 L162 1234 L172 1228 L182 1224 L192 1223 L202 1226 L212 1234 L222 1243 L232 1234 L242 1221 L252 1220 L262 1211 L272 1212 L282 1213 L292 1219 L302 1220 L312 1225 L322 1234 L332 1227 L342 1218 L352 1224 L362 1226 L372 1229 L382 1230 L392 1225 L402 1219 L412 1227 L422 1241 L432 1230 L442 1221 L452 1233 L462 1244 L472 1236 L482 1225 L492 1224 L502 1229 L512 1234 L522 1235 L532 1229 M22 1226 L32 1235 L42 1246 L52 1253 L62 1255 L72 1249 L82 1243 L92 1238 L102 1230 L112 1240 L122 1249 L132 1247 L142 1250 L152 1235 L162 1226 L172 1229 L182 1234 L192 1236 L202 1242 L212 1234 L222 1226 L232 1234 L242 1245 L252 1238 L262 1230 L272 1239 L282 1246 L292 1246 L302 1241 L312 1236 L322 1227 L332 1226 L342 1225 L352 1227 L362 1227 L372 1235 L382 1242 L392 1236 L402 1234 L412 1241 L422 1245 L432 1249 L442 1248 L452 1245 L462 1237 L472 1231 L482 1225 L492 1229 L502 1227 L512 1229 L522 1233 L532 1225 M22 1251 L32 1251 L42 1256 L52 1259 L62 1258 L72 1256 L82 1253 L92 1249 L102 1243 L112 1248 L122 1249 L132 1252 L142 1254 L152 1247 L162 1235 L172 1235 L182 1230 L192 1240 L202 1251 L212 1258 L222 1264 L232 1262 L242 1264 L252 1250 L262 1233 L272 1251 L282 1265 L292 1253 L302 1242 L312 1246 L322 1248 L332 1249 L342 1254 L352 1245 L362 1236 L372 1252 L382 1263 L392 1260 L402 1262 L412 1254 L422 1249 L432 1255 L442 1262 L452 1252 L462 1236 L472 1249 L482 1257 L492 1259 L502 1262 L512 1262 L522 1264 L532 1254 M22 1254 L32 1252 L42 1248 L52 1245 L62 1244 L72 1246 L82 1253 L92 1262 L102 1269 L112 1264 L122 1261 L132 1263 L142 1268 L152 1272 L162 1274 L172 1269 L182 1259 L192 1256 L202 1253 L212 1260 L222 1271 L232 1267 L242 1265 L252 1265 L262 1264 L272 1259 L282 1254 L292 1255 L302 1255 L312 1255 L322 1255 L332 1251 L342 1251 L352 1256 L362 1261 L372 1253 L382 1249 L392 1246 L402 1242 L412 1257 L422 1271 L432 1257 L442 1244 L452 1247 L462 1252 L472 1259 L482 1269 L492 1266 L502 1258 L512 1259 L522 1256 L532 1249 M22 1256 L32 1257 L42 1256 L52 1257 L62 1254 L72 1262 L82 1268 L92 1267 L102 1265 L112 1270 L122 1279 L132 1271 L142 1260 L152 1258 L162 1257 L172 1260 L182 1263 L192 1260 L202 1258 L212 1270 L222 1279 L232 1264 L242 1255 L252 1252 L262 1251 L272 1251 L282 1249 L292 1258 L302 1268 L312 1262 L322 1258 L332 1266 L342 1275 L352 1265 L362 1253 L372 1255 L382 1257 L392 1266 L402 1274 L412 1279 L422 1282 L432 1278 L442 1272 L452 1270 L462 1268 L472 1262 L482 1261 L492 1264 L502 1267 L512 1276 L522 1286 L532 1269 M22 1287 L32 1289 L42 1285 L52 1276 L62 1267 L72 1280 L82 1289 L92 1291 L102 1289 L112 1285 L122 1278 L132 1273 L142 1269 L152 1267 L162 1266 L172 1269 L182 1271 L192 1267 L202 1261 L212 1269 L222 1280 L232 1271 L242 1262 L252 1279 L262 1294 L272 1292 L282 1287 L292 1280 L302 1275 L312 1283 L322 1284 L332 1278 L342 1270 L352 1272 L362 1271 L372 1273 L382 1279 L392 1271 L402 1268 L412 1273 L422 1277 L432 1279 L442 1282 L452 1285 L462 1283 L472 1277 L482 1266 L492 1265 L502 1265 L512 1277 L522 1286 L532 1275 M22 1287 L32 1292 L42 1298 L52 1291 L62 1284 L72 1288 L82 1287 L92 1286 L102 1283 L112 1296 L122 1306 L132 1290 L142 1270 L152 1281 L162 1288 L172 1291 L182 1292 L192 1287 L202 1277 L212 1284 L222 1285 L232 1288 L242 1290 L252 1285 L262 1282 L272 1293 L282 1305 L292 1297 L302 1285 L312 1290 L322 1293 L332 1283 L342 1273 L352 1271 L362 1275 L372 1283 L382 1296 L392 1293 L402 1287 L412 1295 L422 1303 L432 1295 L442 1289 L452 1283 L462 1278 L472 1274 L482 1273 L492 1279 L502 1289 L512 1290 L522 1293 L532 1298 M22 1313 L32 1301 L42 1290 L52 1303 L62 1315 L72 1310 L82 1309 L92 1308 L102 1310 L112 1301 L122 1289 L132 1300 L142 1304 L152 1302 L162 1301 L172 1297 L182 1294 L192 1301 L202 1310 L212 1299 L222 1288 L232 1302 L242 1309 L252 1305 L262 1297 L272 1303 L282 1304 L292 1310 L302 1308 L312 1304 L322 1298 L332 1299 L342 1299 L352 1300 L362 1303 L372 1301 L382 1302 L392 1300 L402 1295 L412 1304 L422 1312 L432 1310 L442 1307 L452 1302 L462 1292 L472 1293 L482 1292 L492 1297 L502 1299 L512 1293 L522 1287 L532 1290 M22 1302 L32 1299 L42 1298 L52 1297 L62 1294 L72 1302 L82 1316 L92 1312 L102 1315 L112 1303 L122 1296 L132 1303 L142 1318 L152 1302 L162 1292 L172 1293 L182 1294 L192 1309 L202 1322 L212 1318 L222 1315 L232 1309 L242 1302 L252 1309 L262 1314 L272 1321 L282 1321 L292 1310 L302 1296 L312 1305 L322 1310 L332 1302 L342 1296 L352 1309 L362 1321 L372 1316 L382 1313 L392 1305 L402 1301 L412 1313 L422 1324 L432 1322 L442 1319 L452 1311 L462 1301 L472 1298 L482 1294 L492 1295 L502 1291 L512 1307 L522 1321 L532 1314 M22 1310 L32 1322 L42 1329 L52 1328 L62 1331 L72 1333 L82 1330 L92 1330 L102 1334 L112 1323 L122 1318 L132 1314 L142 1318 L152 1318 L162 1314 L172 1322 L182 1328 L192 1328 L202 1327 L212 1328 L222 1326 L232 1319 L242 1305 L252 1303 L262 1303 L272 1301 L282 1304 L292 1317 L302 1330 L312 1334 L322 1334 L332 1317 L342 1305 L352 1311 L362 1318 L372 1314 L382 1310 L392 1315 L402 1322 L412 1320 L422 1319 L432 1316 L442 1316 L452 1321 L462 1321 L472 1319 L482 1317 L492 1325 L502 1333 L512 1321 L522 1313 L532 1310 M22 1320 L32 1324 L42 1331 L52 1333 L62 1341 L72 1336 L82 1341 L92 1333 L102 1326 L112 1335 L122 1346 L132 1329 L142 1315 L152 1319 L162 1319 L172 1320 L182 1320 L192 1319 L202 1315 L212 1319 L222 1325 L232 1329 L242 1330 L252 1328 L262 1326 L272 1328 L282 1326 L292 1319 L302 1312 L312 1316 L322 1315 L332 1326 L342 1335 L352 1326 L362 1315 L372 1317 L382 1321 L392 1318 L402 1319 L412 1316 L422 1318 L432 1324 L442 1331 L452 1321 L462 1315 L472 1314 L482 1316 L492 1318 L502 1322 L512 1318 L522 1320 L532 1317 M22 1352 L32 1348 L42 1341 L52 1342 L62 1338 L72 1346 L82 1355 L92 1351 L102 1343 L112 1339 L122 1334 L132 1331 L142 1335 L152 1339 L162 1346 L172 1336 L182 1323 L192 1329 L202 1330 L212 1339 L222 1344 L232 1339 L242 1331 L252 1332 L262 1335 L272 1336 L282 1339 L292 1337 L302 1344 L312 1332 L322 1322 L332 1326 L342 1332 L352 1333 L362 1329 L372 1328 L382 1331 L392 1325 L402 1322 L412 1339 L422 1354 L432 1345 L442 1333 L452 1331 L462 1328 L472 1336 L482 1344 L492 1344 L502 1340 L512 1347 L522 1352 L532 1348 M22 1359 L32 1346 L42 1335 L52 1339 L62 1348 L72 1345 L82 1349 L92 1341 L102 1334 L112 1339 L122 1344 L132 1341 L142 1333 L152 1336 L162 1343 L172 1339 L182 1339 L192 1348 L202 1361 L212 1352 L222 1347 L232 1342 L242 1342 L252 1350 L262 1361 L272 1346 L282 1336 L292 1347 L302 1359 L312 1354 L322 1351 L332 1353 L342 1360 L352 1354 L362 1350 L372 1346 L382 1346 L392 1356 L402 1363 L412 1349 L422 1331 L432 1343 L442 1351 L452 1351 L462 1349 L472 1346 L482 1344 L492 1349 L502 1351 L512 1356 L522 1354 L532 1351 M22 1348 L32 1358 L42 1365 L52 1369 L62 1373 L72 1368 L82 1367 L92 1373 L102 1375 L112 1370 L122 1369 L132 1358 L142 1351 L152 1355 L162 1364 L172 1355 L182 1345 L192 1345 L202 1349 L212 1360 L222 1376 L232 1358 L242 1343 L252 1343 L262 1345 L272 1356 L282 1373 L292 1358 L302 1343 L312 1350 L322 1358 L332 1359 L342 1359 L352 1348 L362 1342 L372 1355 L382 1366 L392 1363 L402 1358 L412 1351 L422 1343 L432 1347 L442 1351 L452 1355 L462 1361 L472 1349 L482 1344 L492 1344 L502 1347 L512 1351 L522 1356 L532 1365 M22 1379 L32 1382 L42 1383 L52 1376 L62 1366 L72 1374 L82 1383 L92 1376 L102 1368 L112 1369 L122 1362 L132 1364 L142 1370 L152 1372 L162 1377 L172 1372 L182 1365 L192 1368 L202 1372 L212 1365 L222 1358 L232 1361 L242 1369 L252 1361 L262 1352 L272 1353 L282 1351 L292 1357 L302 1358 L312 1369 L322 1378 L332 1378 L342 1383 L352 1365 L362 1353 L372 1357 L382 1359 L392 1359 L402 1362 L412 1368 L422 1375 L432 1373 L442 1378 L452 1368 L462 1361 L472 1362 L482 1365 L492 1368 L502 1363 L512 1363 L522 1363 L532 1364 M22 1361 L32 1363 L42 1363 L52 1362 L62 1363 L72 1382 L82 1392 L92 1394 L102 1392 L112 1390 L122 1386 L132 1383 L142 1382 L152 1378 L162 1373 L172 1385 L182 1393 L192 1382 L202 1376 L212 1384 L222 1394 L232 1394 L242 1393 L252 1380 L262 1372 L272 1372 L282 1378 L292 1375 L302 1373 L312 1376 L322 1384 L332 1379 L342 1379 L352 1386 L362 1388 L372 1386 L382 1382 L392 1374 L402 1370 L412 1367 L422 1367 L432 1378 L442 1394 L452 1390 L462 1393 L472 1379 L482 1369 L492 1371 L502 1375 L512 1372 L522 1368 L532 1378 M22 1378 L32 1385 L42 1391 L52 1388 L62 1382 L72 1377 L82 1369 L92 1384 L102 1393 L112 1391 L122 1388 L132 1382 L142 1379 L152 1378 L162 1376 L172 1380 L182 1391 L192 1390 L202 1393 L212 1396 L222 1401 L232 1386 L242 1373 L252 1389 L262 1402 L272 1404 L282 1401 L292 1396 L302 1387 L312 1385 L322 1391 L332 1384 L342 1381 L352 1388 L362 1396 L372 1388 L382 1376 L392 1389 L402 1401 L412 1402 L422 1396 L432 1392 L442 1384 L452 1392 L462 1402 L472 1400 L482 1393 L492 1387 L502 1378 L512 1379 L522 1380 L532 1389 M22 1388 L32 1395 L42 1404 L52 1405 L62 1410 L72 1402 L82 1392 L92 1396 L102 1395 L112 1391 L122 1385 L132 1385 L142 1385 L152 1384 L162 1385 L172 1393 L182 1401 L192 1394 L202 1386 L212 1398 L222 1403 L232 1403 L242 1404 L252 1403 L262 1400 L272 1392 L282 1382 L292 1382 L302 1383 L312 1397 L322 1409 L332 1402 L342 1403 L352 1401 L362 1404 L372 1403 L382 1403 L392 1401 L402 1399 L412 1402 L422 1401 L432 1406 L442 1410 L452 1400 L462 1398 L472 1390 L482 1387 L492 1394 L502 1395 L512 1394 L522 1386 L532 1393 M22 1393 L32 1406 L42 1414 L52 1422 L62 1423 L72 1418 L82 1410 L92 1407 L102 1404 L112 1405 L122 1404 L132 1397 L142 1392 L152 1400 L162 1403 L172 1402 L182 1398 L192 1411 L202 1423 L212 1416 L222 1405 L232 1403 L242 1398 L252 1412 L262 1422 L272 1422 L282 1420 L292 1411 L302 1402 L312 1398 L322 1395 L332 1407 L342 1420 L352 1410 L362 1401 L372 1410 L382 1418 L392 1408 L402 1402 L412 1401 L422 1402 L432 1409 L442 1416 L452 1417 L462 1415 L472 1410 L482 1399 L492 1401 L502 1410 L512 1405 L522 1397 L532 1403 M22 1415 L32 1418 L42 1417 L52 1417 L62 1417 L72 1413 L82 1409 L92 1409 L102 1413 L112 1410 L122 1402 L132 1410 L142 1419 L152 1414 L162 1408 L172 1410 L182 1415 L192 1408 L202 1407 L212 1406 L222 1407 L232 1408 L242 1406 L252 1406 L262 1406 L272 1402 L282 1404 L292 1410 L302 1414 L312 1415 L322 1416 L332 1415 L342 1412 L352 1409 L362 1409 L372 1414 L382 1422 L392 1419 L402 1422 L412 1427 L422 1431 L432 1421 L442 1409 L452 1405 L462 1400 L472 1412 L482 1424 L492 1424 L502 1431 L512 1430 L522 1428 L532 1422 M22 1444 L32 1439 L42 1432 L52 1435 L62 1442 L72 1434 L82 1422 L92 1419 L102 1419 L112 1427 L122 1440 L132 1442 L142 1442 L152 1435 L162 1430 L172 1426 L182 1428 L192 1420 L202 1415 L212 1431 L222 1442 L232 1444 L242 1443 L252 1438 L262 1436 L272 1436 L282 1438 L292 1435 L302 1439 L312 1428 L322 1418 L332 1424 L342 1427 L352 1430 L362 1435 L372 1437 L382 1436 L392 1437 L402 1436 L412 1439 L422 1440 L432 1427 L442 1421 L452 1428 L462 1435 L472 1433 L482 1427 L492 1423 L502 1419 L512 1423 L522 1428 L532 1432 M22 1170 L22 1168 L22 1178 L22 1193 L22 1193 L22 1232 L22 1213 L22 1226 L22 1251 L22 1254 L22 1256 L22 1287 L22 1287 L22 1313 L22 1302 L22 1310 L22 1320 L22 1352 L22 1359 L22 1348 L22 1379 L22 1361 L22 1378 L22 1388 L22 1393 L22 1415 L22 1444 M32 1167 L32 1171 L32 1186 L32 1203 L32 1197 L32 1225 L32 1216 L32 1235 L32 1251 L32 1252 L32 1257 L32 1289 L32 1292 L32 1301 L32 1299 L32 1322 L32 1324 L32 1348 L32 1346 L32 1358 L32 1382 L32 1363 L32 1385 L32 1395 L32 1406 L32 1418 L32 1439 M42 1167 L42 1175 L42 1196 L42 1214 L42 1206 L42 1220 L42 1217 L42 1246 L42 1256 L42 1248 L42 1256 L42 1285 L42 1298 L42 1290 L42 1298 L42 1329 L42 1331 L42 1341 L42 1335 L42 1365 L42 1383 L42 1363 L42 1391 L42 1404 L42 1414 L42 1417 L42 1432 M52 1161 L52 1175 L52 1198 L52 1196 L52 1207 L52 1216 L52 1224 L52 1253 L52 1259 L52 1245 L52 1257 L52 1276 L52 1291 L52 1303 L52 1297 L52 1328 L52 1333 L52 1342 L52 1339 L52 1369 L52 1376 L52 1362 L52 1388 L52 1405 L52 1422 L52 1417 L52 1435 M62 1152 L62 1174 L62 1201 L62 1181 L62 1212 L62 1205 L62 1233 L62 1255 L62 1258 L62 1244 L62 1254 L62 1267 L62 1284 L62 1315 L62 1294 L62 1331 L62 1341 L62 1338 L62 1348 L62 1373 L62 1366 L62 1363 L62 1382 L62 1410 L62 1423 L62 1417 L62 1442 M72 1162 L72 1176 L72 1200 L72 1196 L72 1214 L72 1202 L72 1225 L72 1249 L72 1256 L72 1246 L72 1262 L72 1280 L72 1288 L72 1310 L72 1302 L72 1333 L72 1336 L72 1346 L72 1345 L72 1368 L72 1374 L72 1382 L72 1377 L72 1402 L72 1418 L72 1413 L72 1434 M82 1167 L82 1180 L82 1195 L82 1209 L82 1224 L82 1202 L82 1218 L82 1243 L82 1253 L82 1253 L82 1268 L82 1289 L82 1287 L82 1309 L82 1316 L82 1330 L82 1341 L82 1355 L82 1349 L82 1367 L82 1383 L82 1392 L82 1369 L82 1392 L82 1410 L82 1409 L82 1422 M92 1168 L92 1174 L92 1183 L92 1208 L92 1225 L92 1205 L92 1217 L92 1238 L92 1249 L92 1262 L92 1267 L92 1291 L92 1286 L92 1308 L92 1312 L92 1330 L92 1333 L92 1351 L92 1341 L92 1373 L92 1376 L92 1394 L92 1384 L92 1396 L92 1407 L92 1409 L92 1419 M102 1167 L102 1170 L102 1174 L102 1208 L102 1223 L102 1213 L102 1217 L102 1230 L102 1243 L102 1269 L102 1265 L102 1289 L102 1283 L102 1310 L102 1315 L102 1334 L102 1326 L102 1343 L102 1334 L102 1375 L102 1368 L102 1392 L102 1393 L102 1395 L102 1404 L102 1413 L102 1419 M112 1167 L112 1176 L112 1176 L112 1200 L112 1209 L112 1214 L112 1220 L112 1240 L112 1248 L112 1264 L112 1270 L112 1285 L112 1296 L112 1301 L112 1303 L112 1323 L112 1335 L112 1339 L112 1339 L112 1370 L112 1369 L112 1390 L112 1391 L112 1391 L112 1405 L112 1410 L112 1427 M122 1163 L122 1178 L122 1179 L122 1187 L122 1190 L122 1211 L122 1228 L122 1249 L122 1249 L122 1261 L122 1279 L122 1278 L122 1306 L122 1289 L122 1296 L122 1318 L122 1346 L122 1334 L122 1344 L122 1369 L122 1362 L122 1386 L122 1388 L122 1385 L122 1404 L122 1402 L122 1440 M132 1174 L132 1181 L132 1192 L132 1194 L132 1203 L132 1213 L132 1223 L132 1247 L132 1252 L132 1263 L132 1271 L132 1273 L132 1290 L132 1300 L132 1303 L132 1314 L132 1329 L132 1331 L132 1341 L132 1358 L132 1364 L132 1383 L132 1382 L132 1385 L132 1397 L132 1410 L132 1442 M142 1181 L142 1187 L142 1201 L142 1203 L142 1216 L142 1216 L142 1225 L142 1250 L142 1254 L142 1268 L142 1260 L142 1269 L142 1270 L142 1304 L142 1318 L142 1318 L142 1315 L142 1335 L142 1333 L142 1351 L142 1370 L142 1382 L142 1379 L142 1385 L142 1392 L142 1419 L142 1442 M152 1175 L152 1171 L152 1200 L152 1203 L152 1211 L152 1222 L152 1229 L152 1235 L152 1247 L152 1272 L152 1258 L152 1267 L152 1281 L152 1302 L152 1302 L152 1318 L152 1319 L152 1339 L152 1336 L152 1355 L152 1372 L152 1378 L152 1378 L152 1384 L152 1400 L152 1414 L152 1435 M162 1167 L162 1160 L162 1196 L162 1205 L162 1200 L162 1229 L162 1234 L162 1226 L162 1235 L162 1274 L162 1257 L162 1266 L162 1288 L162 1301 L162 1292 L162 1314 L162 1319 L162 1346 L162 1343 L162 1364 L162 1377 L162 1373 L162 1376 L162 1385 L162 1403 L162 1408 L162 1430 M172 1165 L172 1163 L172 1200 L172 1207 L172 1206 L172 1232 L172 1228 L172 1229 L172 1235 L172 1269 L172 1260 L172 1269 L172 1291 L172 1297 L172 1293 L172 1322 L172 1320 L172 1336 L172 1339 L172 1355 L172 1372 L172 1385 L172 1380 L172 1393 L172 1402 L172 1410 L172 1426 M182 1165 L182 1163 L182 1201 L182 1214 L182 1217 L182 1234 L182 1224 L182 1234 L182 1230 L182 1259 L182 1263 L182 1271 L182 1292 L182 1294 L182 1294 L182 1328 L182 1320 L182 1323 L182 1339 L182 1345 L182 1365 L182 1393 L182 1391 L182 1401 L182 1398 L182 1415 L182 1428 M192 1161 L192 1165 L192 1205 L192 1211 L192 1209 L192 1232 L192 1223 L192 1236 L192 1240 L192 1256 L192 1260 L192 1267 L192 1287 L192 1301 L192 1309 L192 1328 L192 1319 L192 1329 L192 1348 L192 1345 L192 1368 L192 1382 L192 1390 L192 1394 L192 1411 L192 1408 L192 1420 M202 1156 L202 1166 L202 1202 L202 1212 L202 1198 L202 1233 L202 1226 L202 1242 L202 1251 L202 1253 L202 1258 L202 1261 L202 1277 L202 1310 L202 1322 L202 1327 L202 1315 L202 1330 L202 1361 L202 1349 L202 1372 L202 1376 L202 1393 L202 1386 L202 1423 L202 1407 L202 1415 M212 1169 L212 1168 L212 1192 L212 1202 L212 1202 L212 1219 L212 1234 L212 1234 L212 1258 L212 1260 L212 1270 L212 1269 L212 1284 L212 1299 L212 1318 L212 1328 L212 1319 L212 1339 L212 1352 L212 1360 L212 1365 L212 1384 L212 1396 L212 1398 L212 1416 L212 1406 L212 1431 M222 1184 L222 1172 L222 1176 L222 1197 L222 1204 L222 1202 L222 1243 L222 1226 L222 1264 L222 1271 L222 1279 L222 1280 L222 1285 L222 1288 L222 1315 L222 1326 L222 1325 L222 1344 L222 1347 L222 1376 L222 1358 L222 1394 L222 1401 L222 1403 L222 1405 L222 1407 L222 1442 M232 1180 L232 1175 L232 1188 L232 1200 L232 1211 L232 1209 L232 1234 L232 1234 L232 1262 L232 1267 L232 1264 L232 1271 L232 1288 L232 1302 L232 1309 L232 1319 L232 1329 L232 1339 L232 1342 L232 1358 L232 1361 L232 1394 L232 1386 L232 1403 L232 1403 L232 1408 L232 1444 M242 1176 L242 1185 L242 1199 L242 1209 L242 1217 L242 1210 L242 1221 L242 1245 L242 1264 L242 1265 L242 1255 L242 1262 L242 1290 L242 1309 L242 1302 L242 1305 L242 1330 L242 1331 L242 1342 L242 1343 L242 1369 L242 1393 L242 1373 L242 1404 L242 1398 L242 1406 L242 1443 M252 1180 L252 1186 L252 1193 L252 1200 L252 1218 L252 1208 L252 1220 L252 1238 L252 1250 L252 1265 L252 1252 L252 1279 L252 1285 L252 1305 L252 1309 L252 1303 L252 1328 L252 1332 L252 1350 L252 1343 L252 1361 L252 1380 L252 1389 L252 1403 L252 1412 L252 1406 L252 1438 M262 1182 L262 1189 L262 1185 L262 1192 L262 1218 L262 1202 L262 1211 L262 1230 L262 1233 L262 1264 L262 1251 L262 1294 L262 1282 L262 1297 L262 1314 L262 1303 L262 1326 L262 1335 L262 1361 L262 1345 L262 1352 L262 1372 L262 1402 L262 1400 L262 1422 L262 1406 L262 1436 M272 1172 L272 1184 L272 1187 L272 1201 L272 1208 L272 1220 L272 1212 L272 1239 L272 1251 L272 1259 L272 1251 L272 1292 L272 1293 L272 1303 L272 1321 L272 1301 L272 1328 L272 1336 L272 1346 L272 1356 L272 1353 L272 1372 L272 1404 L272 1392 L272 1422 L272 1402 L272 1436 M282 1155 L282 1187 L282 1188 L282 1204 L282 1201 L282 1235 L282 1213 L282 1246 L282 1265 L282 1254 L282 1249 L282 1287 L282 1305 L282 1304 L282 1321 L282 1304 L282 1326 L282 1339 L282 1336 L282 1373 L282 1351 L282 1378 L282 1401 L282 1382 L282 1420 L282 1404 L282 1438 M292 1160 L292 1187 L292 1193 L292 1202 L292 1211 L292 1222 L292 1219 L292 1246 L292 1253 L292 1255 L292 1258 L292 1280 L292 1297 L292 1310 L292 1310 L292 1317 L292 1319 L292 1337 L292 1347 L292 1358 L292 1357 L292 1375 L292 1396 L292 1382 L292 1411 L292 1410 L292 1435 M302 1161 L302 1192 L302 1199 L302 1200 L302 1221 L302 1212 L302 1220 L302 1241 L302 1242 L302 1255 L302 1268 L302 1275 L302 1285 L302 1308 L302 1296 L302 1330 L302 1312 L302 1344 L302 1359 L302 1343 L302 1358 L302 1373 L302 1387 L302 1383 L302 1402 L302 1414 L302 1439 M312 1172 L312 1180 L312 1187 L312 1193 L312 1219 L312 1215 L312 1225 L312 1236 L312 1246 L312 1255 L312 1262 L312 1283 L312 1290 L312 1304 L312 1305 L312 1334 L312 1316 L312 1332 L312 1354 L312 1350 L312 1369 L312 1376 L312 1385 L312 1397 L312 1398 L312 1415 L312 1428 M322 1182 L322 1169 L322 1178 L322 1180 L322 1219 L322 1220 L322 1234 L322 1227 L322 1248 L322 1255 L322 1258 L322 1284 L322 1293 L322 1298 L322 1310 L322 1334 L322 1315 L322 1322 L322 1351 L322 1358 L322 1378 L322 1384 L322 1391 L322 1409 L322 1395 L322 1416 L322 1418 M332 1166 L332 1176 L332 1189 L332 1189 L332 1213 L332 1214 L332 1227 L332 1226 L332 1249 L332 1251 L332 1266 L332 1278 L332 1283 L332 1299 L332 1302 L332 1317 L332 1326 L332 1326 L332 1353 L332 1359 L332 1378 L332 1379 L332 1384 L332 1402 L332 1407 L332 1415 L332 1424 M342 1152 L342 1179 L342 1201 L342 1199 L342 1204 L342 1212 L342 1218 L342 1225 L342 1254 L342 1251 L342 1275 L342 1270 L342 1273 L342 1299 L342 1296 L342 1305 L342 1335 L342 1332 L342 1360 L342 1359 L342 1383 L342 1379 L342 1381 L342 1403 L342 1420 L342 1412 L342 1427 M352 1153 L352 1171 L352 1192 L352 1198 L352 1200 L352 1217 L352 1224 L352 1227 L352 1245 L352 1256 L352 1265 L352 1272 L352 1271 L352 1300 L352 1309 L352 1311 L352 1326 L352 1333 L352 1354 L352 1348 L352 1365 L352 1386 L352 1388 L352 1401 L352 1410 L352 1409 L352 1430 M362 1153 L362 1165 L362 1183 L362 1195 L362 1197 L362 1224 L362 1226 L362 1227 L362 1236 L362 1261 L362 1253 L362 1271 L362 1275 L362 1303 L362 1321 L362 1318 L362 1315 L362 1329 L362 1350 L362 1342 L362 1353 L362 1388 L362 1396 L362 1404 L362 1401 L362 1409 L362 1435 M372 1160 L372 1174 L372 1190 L372 1193 L372 1199 L372 1215 L372 1229 L372 1235 L372 1252 L372 1253 L372 1255 L372 1273 L372 1283 L372 1301 L372 1316 L372 1314 L372 1317 L372 1328 L372 1346 L372 1355 L372 1357 L372 1386 L372 1388 L372 1403 L372 1410 L372 1414 L372 1437 M382 1163 L382 1184 L382 1201 L382 1188 L382 1206 L382 1201 L382 1230 L382 1242 L382 1263 L382 1249 L382 1257 L382 1279 L382 1296 L382 1302 L382 1313 L382 1310 L382 1321 L382 1331 L382 1346 L382 1366 L382 1359 L382 1382 L382 1376 L382 1403 L382 1418 L382 1422 L382 1436 M392 1162 L392 1171 L392 1196 L392 1195 L392 1207 L392 1216 L392 1225 L392 1236 L392 1260 L392 1246 L392 1266 L392 1271 L392 1293 L392 1300 L392 1305 L392 1315 L392 1318 L392 1325 L392 1356 L392 1363 L392 1359 L392 1374 L392 1389 L392 1401 L392 1408 L392 1419 L392 1437 M402 1162 L402 1163 L402 1191 L402 1210 L402 1216 L402 1232 L402 1219 L402 1234 L402 1262 L402 1242 L402 1274 L402 1268 L402 1287 L402 1295 L402 1301 L402 1322 L402 1319 L402 1322 L402 1363 L402 1358 L402 1362 L402 1370 L402 1401 L402 1399 L402 1402 L402 1422 L402 1436 M412 1170 L412 1162 L412 1192 L412 1209 L412 1204 L412 1223 L412 1227 L412 1241 L412 1254 L412 1257 L412 1279 L412 1273 L412 1295 L412 1304 L412 1313 L412 1320 L412 1316 L412 1339 L412 1349 L412 1351 L412 1368 L412 1367 L412 1402 L412 1402 L412 1401 L412 1427 L412 1439 M422 1179 L422 1167 L422 1199 L422 1208 L422 1194 L422 1218 L422 1241 L422 1245 L422 1249 L422 1271 L422 1282 L422 1277 L422 1303 L422 1312 L422 1324 L422 1319 L422 1318 L422 1354 L422 1331 L422 1343 L422 1375 L422 1367 L422 1396 L422 1401 L422 1402 L422 1431 L422 1440 M432 1182 L432 1180 L432 1199 L432 1195 L432 1208 L432 1215 L432 1230 L432 1249 L432 1255 L432 1257 L432 1278 L432 1279 L432 1295 L432 1310 L432 1322 L432 1316 L432 1324 L432 1345 L432 1343 L432 1347 L432 1373 L432 1378 L432 1392 L432 1406 L432 1409 L432 1421 L432 1427 M442 1187 L442 1193 L442 1195 L442 1184 L442 1218 L442 1212 L442 1221 L442 1248 L442 1262 L442 1244 L442 1272 L442 1282 L442 1289 L442 1307 L442 1319 L442 1316 L442 1331 L442 1333 L442 1351 L442 1351 L442 1378 L442 1394 L442 1384 L442 1410 L442 1416 L442 1409 L442 1421 M452 1177 L452 1193 L452 1182 L452 1187 L452 1222 L452 1207 L452 1233 L452 1245 L452 1252 L452 1247 L452 1270 L452 1285 L452 1283 L452 1302 L452 1311 L452 1321 L452 1321 L452 1331 L452 1351 L452 1355 L452 1368 L452 1390 L452 1392 L452 1400 L452 1417 L452 1405 L452 1428 M462 1168 L462 1188 L462 1171 L462 1188 L462 1226 L462 1205 L462 1244 L462 1237 L462 1236 L462 1252 L462 1268 L462 1283 L462 1278 L462 1292 L462 1301 L462 1321 L462 1315 L462 1328 L462 1349 L462 1361 L462 1361 L462 1393 L462 1402 L462 1398 L462 1415 L462 1400 L462 1435 M472 1174 L472 1178 L472 1174 L472 1195 L472 1219 L472 1207 L472 1236 L472 1231 L472 1249 L472 1259 L472 1262 L472 1277 L472 1274 L472 1293 L472 1298 L472 1319 L472 1314 L472 1336 L472 1346 L472 1349 L472 1362 L472 1379 L472 1400 L472 1390 L472 1410 L472 1412 L472 1433 M482 1185 L482 1166 L482 1176 L482 1205 L482 1218 L482 1211 L482 1225 L482 1225 L482 1257 L482 1269 L482 1261 L482 1266 L482 1273 L482 1292 L482 1294 L482 1317 L482 1316 L482 1344 L482 1344 L482 1344 L482 1365 L482 1369 L482 1393 L482 1387 L482 1399 L482 1424 L482 1427 M492 1181 L492 1173 L492 1187 L492 1209 L492 1214 L492 1209 L492 1224 L492 1229 L492 1259 L492 1266 L492 1264 L492 1265 L492 1279 L492 1297 L492 1295 L492 1325 L492 1318 L492 1344 L492 1349 L492 1344 L492 1368 L492 1371 L492 1387 L492 1394 L492 1401 L492 1424 L492 1423 M502 1178 L502 1177 L502 1194 L502 1207 L502 1209 L502 1213 L502 1229 L502 1227 L502 1262 L502 1258 L502 1267 L502 1265 L502 1289 L502 1299 L502 1291 L502 1333 L502 1322 L502 1340 L502 1351 L502 1347 L502 1363 L502 1375 L502 1378 L502 1395 L502 1410 L502 1431 L502 1419 M512 1176 L512 1168 L512 1187 L512 1200 L512 1218 L512 1208 L512 1234 L512 1229 L512 1262 L512 1259 L512 1276 L512 1277 L512 1290 L512 1293 L512 1307 L512 1321 L512 1318 L512 1347 L512 1356 L512 1351 L512 1363 L512 1372 L512 1379 L512 1394 L512 1405 L512 1430 L512 1423 M522 1175 L522 1161 L522 1177 L522 1190 L522 1224 L522 1208 L522 1235 L522 1233 L522 1264 L522 1256 L522 1286 L522 1286 L522 1293 L522 1287 L522 1321 L522 1313 L522 1320 L522 1352 L522 1354 L522 1356 L522 1363 L522 1368 L522 1380 L522 1386 L522 1397 L522 1428 L522 1428 M532 1180 L532 1173 L532 1187 L532 1188 L532 1221 L532 1206 L532 1229 L532 1225 L532 1254 L532 1249 L532 1269 L532 1275 L532 1298 L532 1290 L532 1314 L532 1310 L532 1317 L532 1348 L532 1351 L532 1365 L532 1364 L532 1378 L532 1389 L532 1393 L532 1403 L532 1422 L532 1432" fill="none" stroke="#000" stroke-width="2.3" shape-rendering="crispEdges"/><polygon points="263,1177 274,1177 278,1190 283,1216 287,1246 294,1282 297,1320 293,1365 290,1412 250,1412 247,1365 246,1320 247,1282 250,1250 253,1216 258,1190" fill="#fff" stroke="#000" stroke-width="2" shape-rendering="crispEdges"/><path d="M253 1218 V1412 M258 1192 V1412 M263 1178 V1412 M268.5 1177 V1412 M274 1178 V1412 M278.5 1192 V1412 M283 1218 V1412 M288 1250 V1412 M268 1225 L262 1232 L250 1262 M268 1225 L274 1235 L284 1262 M268 1300 L250 1340 M268 1300 L290 1345 M268 1330 L255 1412 M268 1330 L284 1412" fill="none" stroke="#000" stroke-width="1.6" shape-rendering="crispEdges"/><polyline points="249,1224 233,1221 219,1222 203,1218 196,1228 188,1235 181,1236 159,1253 141,1262 141,1306 149,1313 155,1323 174,1340 199,1341 213,1357 226,1354" fill="none" stroke="#0000ff" stroke-width="3"/><polyline points="236,1350 252,1347" fill="none" stroke="#0000ff" stroke-width="3"/><polyline points="287,1219 304,1220 316,1225 333,1228 340,1239" fill="none" stroke="#0000ff" stroke-width="3"/><polyline points="370,1238 380,1240 385,1251 391,1258" fill="none" stroke="#0000ff" stroke-width="3"/><polyline points="401,1253 401,1306" fill="none" stroke="#0000ff" stroke-width="3"/><polyline points="392,1310 391,1319 381,1325 380,1332 361,1337 354,1350" fill="none" stroke="#0000ff" stroke-width="3"/><polyline points="336,1349 322,1349 313,1357 304,1358" fill="none" stroke="#0000ff" stroke-width="3"/><polyline points="229,1278 221,1285 221,1295 228,1300 242,1311 252,1312 262,1318" fill="none" stroke="#0000ff" stroke-width="3"/><polyline points="299,1261 310,1268 320,1278 322,1298 309,1310 296,1318" fill="none" stroke="#0000ff" stroke-width="3"/><polyline points="241,1255 241,1287 250,1286 259,1281 270,1278 280,1285 290,1290 302,1292 302,1267" fill="none" stroke="#ff0000" stroke-width="3"/></svg></div>
<div class="win" style="left:518px;top:759px;width:565.5px;height:546.5px;border-radius:10px;background:#f0f0f0;box-shadow:0 0 0 1px #b4b4b4;"><svg width="565.5" height="546.5" viewBox="518 759 565.5 546.5"><rect x="518" y="759" width="567" height="50" fill="#f3f3f3"/><rect x="518" y="809" width="567" height="497" fill="#f0f0f0"/><rect x="519" y="809" width="418" height="481.7" fill="#ffffff"/><g transform="translate(525,767.5)"><path d="M1 1 L12 0 L24 1 L32 2 L32 32 L20 31 L6 32 L0 28 Z" fill="#0000d0"/><path d="M0 3 L9 1 L8 12 L1 13 Z M17 1 L26 2 L24 6 L17 8 Z M24 8 L32 6 L32 13 L25 13 Z M0 20 L7 21 L6 30 L0 27 Z M16 24 L32 20 L32 32 L17 31 Z" fill="#000078"/><rect x="3" y="5" width="1.4" height="1.4" fill="#9aa0ff"/><rect x="5" y="9" width="1.4" height="1.4" fill="#9aa0ff"/><rect x="19" y="3" width="1.4" height="1.4" fill="#9aa0ff"/><rect x="23" y="4" width="1.4" height="1.4" fill="#9aa0ff"/><rect x="27" y="6" width="1.4" height="1.4" fill="#9aa0ff"/><rect x="29" y="10" width="1.4" height="1.4" fill="#9aa0ff"/><rect x="3" y="24" width="1.4" height="1.4" fill="#9aa0ff"/><rect x="5" y="28" width="1.4" height="1.4" fill="#9aa0ff"/><rect x="18" y="28" width="1.4" height="1.4" fill="#9aa0ff"/><rect x="22" y="27" width="1.4" height="1.4" fill="#9aa0ff"/><rect x="26" y="26" width="1.4" height="1.4" fill="#9aa0ff"/><rect x="29" y="23" width="1.4" height="1.4" fill="#9aa0ff"/><rect x="15" y="4" width="1.4" height="1.4" fill="#9aa0ff"/><rect x="14" y="28" width="1.4" height="1.4" fill="#9aa0ff"/><rect x="0" y="15" width="32" height="3" fill="#e8d800"/><path d="M11 0 L13.2 11.5 L21 16.5 L13.2 21.5 L11 32 L8.8 21.5 L1 16.5 L8.8 11.5 Z" fill="#ffff00"/></g><text x="567.7" y="794.0" font-size="30" fill="#8a8a8a" textLength="216.0" lengthAdjust="spacing">Operation guide</text><rect x="841.8" y="781" width="20" height="2" fill="#8a8a8a"/><rect x="933.8" y="773" width="18" height="18" rx="3" fill="none" stroke="#8a8a8a" stroke-width="2"/><path d="M1025.7 772 l20 20 m0 -20 l-20 20" stroke="#8a8a8a" stroke-width="2" fill="none"/><rect x="579" y="864.5" width="340" height="2" fill="#00ff00"/><rect x="579" y="1249" width="340" height="1.5" fill="#404040"/><polyline points="579.4,1041.5 585.9,1041.5 594.0,1048.6 608.6,1074.6 621.6,1097.2 636.1,1129.7 645.9,1142.6 662.1,1162.1 681.5,1178.3 694.5,1183.8 909.1,1183.8" fill="none" stroke="#ff0000" stroke-width="1.6"/><circle cx="578.8" cy="1048.6" r="3.4" fill="none" stroke="#0000ff" stroke-width="1.6"/><circle cx="608.6" cy="1054.5" r="3.4" fill="none" stroke="#0000ff" stroke-width="1.6"/><circle cx="620.9" cy="1066.8" r="3.4" fill="none" stroke="#0000ff" stroke-width="1.6"/><circle cx="608.6" cy="1076.8" r="3.4" fill="none" stroke="#0000ff" stroke-width="1.6"/><circle cx="608.6" cy="1099.8" r="3.4" fill="none" stroke="#0000ff" stroke-width="1.6"/><circle cx="608.6" cy="1103.1" r="3.4" fill="none" stroke="#0000ff" stroke-width="1.6"/><circle cx="620.9" cy="1112.5" r="3.4" fill="none" stroke="#0000ff" stroke-width="1.6"/><circle cx="620.9" cy="1123.2" r="3.4" fill="none" stroke="#0000ff" stroke-width="1.6"/><circle cx="620.9" cy="1126.4" r="3.4" fill="none" stroke="#0000ff" stroke-width="1.6"/><circle cx="639.4" cy="1112.5" r="3.4" fill="none" stroke="#0000ff" stroke-width="1.6"/><circle cx="647.2" cy="1112.5" r="3.4" fill="none" stroke="#0000ff" stroke-width="1.6"/><circle cx="639.4" cy="1124.8" r="3.4" fill="none" stroke="#0000ff" stroke-width="1.6"/><circle cx="647.2" cy="1122.5" r="3.4" fill="none" stroke="#0000ff" stroke-width="1.6"/><circle cx="639.4" cy="1134.5" r="3.4" fill="none" stroke="#0000ff" stroke-width="1.6"/><circle cx="647.2" cy="1142.6" r="3.4" fill="none" stroke="#0000ff" stroke-width="1.6"/><circle cx="647.2" cy="1148.1" r="3.4" fill="none" stroke="#0000ff" stroke-width="1.6"/><circle cx="639.4" cy="1152.4" r="3.4" fill="none" stroke="#0000ff" stroke-width="1.6"/><circle cx="647.2" cy="1160.5" r="3.4" fill="none" stroke="#0000ff" stroke-width="1.6"/><circle cx="663.0" cy="1147.5" r="3.4" fill="none" stroke="#0000ff" stroke-width="1.6"/><circle cx="670.8" cy="1144.2" r="3.4" fill="none" stroke="#0000ff" stroke-width="1.6"/><circle cx="663.0" cy="1152.4" r="3.4" fill="none" stroke="#0000ff" stroke-width="1.6"/><circle cx="670.8" cy="1149.8" r="3.4" fill="none" stroke="#0000ff" stroke-width="1.6"/><circle cx="663.0" cy="1158.2" r="3.4" fill="none" stroke="#0000ff" stroke-width="1.6"/><circle cx="670.8" cy="1157.2" r="3.4" fill="none" stroke="#0000ff" stroke-width="1.6"/><circle cx="675.0" cy="1158.8" r="3.4" fill="none" stroke="#0000ff" stroke-width="1.6"/><circle cx="663.0" cy="1163.7" r="3.4" fill="none" stroke="#0000ff" stroke-width="1.6"/><circle cx="670.8" cy="1162.1" r="3.4" fill="none" stroke="#0000ff" stroke-width="1.6"/><circle cx="668.6" cy="1171.8" r="3.4" fill="none" stroke="#0000ff" stroke-width="1.6"/><circle cx="672.8" cy="1179.9" r="3.4" fill="none" stroke="#0000ff" stroke-width="1.6"/><circle cx="686.4" cy="1149.1" r="3.4" fill="none" stroke="#0000ff" stroke-width="1.6"/><circle cx="686.4" cy="1166.9" r="3.4" fill="none" stroke="#0000ff" stroke-width="1.6"/><circle cx="686.4" cy="1171.8" r="3.4" fill="none" stroke="#0000ff" stroke-width="1.6"/><circle cx="686.4" cy="1178.3" r="3.4" fill="none" stroke="#0000ff" stroke-width="1.6"/><circle cx="686.4" cy="1183.1" r="3.4" fill="none" stroke="#0000ff" stroke-width="1.6"/><circle cx="702.6" cy="1165.3" r="3.4" fill="none" stroke="#0000ff" stroke-width="1.6"/><circle cx="698.4" cy="1171.8" r="3.4" fill="none" stroke="#0000ff" stroke-width="1.6"/><circle cx="705.8" cy="1173.4" r="3.4" fill="none" stroke="#0000ff" stroke-width="1.6"/><circle cx="712.3" cy="1168.6" r="3.4" fill="none" stroke="#0000ff" stroke-width="1.6"/><circle cx="702.6" cy="1178.3" r="3.4" fill="none" stroke="#0000ff" stroke-width="1.6"/><circle cx="710.7" cy="1178.3" r="3.4" fill="none" stroke="#0000ff" stroke-width="1.6"/><circle cx="698.4" cy="1183.1" r="3.4" fill="none" stroke="#0000ff" stroke-width="1.6"/><circle cx="705.8" cy="1184.1" r="3.4" fill="none" stroke="#0000ff" stroke-width="1.6"/><circle cx="712.3" cy="1184.8" r="3.4" fill="none" stroke="#0000ff" stroke-width="1.6"/><circle cx="698.4" cy="1193.5" r="3.4" fill="none" stroke="#0000ff" stroke-width="1.6"/><circle cx="712.3" cy="1193.5" r="3.4" fill="none" stroke="#0000ff" stroke-width="1.6"/><circle cx="702.6" cy="1186.4" r="3.4" fill="none" stroke="#0000ff" stroke-width="1.6"/><circle cx="728.5" cy="1168.6" r="3.4" fill="none" stroke="#0000ff" stroke-width="1.6"/><circle cx="728.5" cy="1176.7" r="3.4" fill="none" stroke="#0000ff" stroke-width="1.6"/><circle cx="728.5" cy="1183.1" r="3.4" fill="none" stroke="#0000ff" stroke-width="1.6"/><circle cx="728.5" cy="1188.0" r="3.4" fill="none" stroke="#0000ff" stroke-width="1.6"/><rect x="943.4" y="1192.8" width="13.6" height="1.5" fill="#a0a0a0"/><rect x="943.4" y="1194.3" width="13.6" height="1.5" fill="#ffffff"/><rect x="1045" y="1192.8" width="36" height="1.5" fill="#a0a0a0"/><rect x="1045" y="1194.3" width="36" height="1.5" fill="#ffffff"/><rect x="943.4" y="1292" width="137.6" height="1.5" fill="#a0a0a0"/><rect x="943.4" y="1293.5" width="137.6" height="1.5" fill="#ffffff"/><rect x="943.4" y="1192.8" width="1.5" height="102.2" fill="#a0a0a0"/><rect x="944.9" y="1192.8" width="1.5" height="102.2" fill="#ffffff"/><rect x="1078" y="1192.8" width="1.5" height="102.2" fill="#a0a0a0"/><rect x="1079.5" y="1192.8" width="1.5" height="102.2" fill="#ffffff"/><text x="960.3" y="1202.3" font-size="25" fill="#000" textLength="81.7" lengthAdjust="spacing">Control</text><circle cx="972.3" cy="1228.8" r="9" fill="#fff"/><path d="M964.523 1236.58 A11 11 0 0 1 980.077 1221.02" stroke="#a0a0a0" stroke-width="2" fill="none"/><path d="M965.937 1235.16 A9 9 0 0 1 978.663 1222.44" stroke="#696969" stroke-width="2" fill="none"/><path d="M964.523 1236.58 A11 11 0 0 0 980.077 1221.02" stroke="#ffffff" stroke-width="2" fill="none"/><circle cx="972.3" cy="1228.8" r="4.5" fill="#000"/><text x="996.0" y="1237.9" font-size="25" fill="#000" textLength="55.6" lengthAdjust="spacing">Hide</text><circle cx="972.3" cy="1266.8" r="9" fill="#fff"/><path d="M964.523 1274.58 A11 11 0 0 1 980.077 1259.02" stroke="#a0a0a0" stroke-width="2" fill="none"/><path d="M965.937 1273.16 A9 9 0 0 1 978.663 1260.44" stroke="#696969" stroke-width="2" fill="none"/><path d="M964.523 1274.58 A11 11 0 0 0 980.077 1259.02" stroke="#ffffff" stroke-width="2" fill="none"/><text x="996.0" y="1276.2" font-size="25" fill="#000" textLength="64.5" lengthAdjust="spacing">Show</text></svg></div>
<div class="win" style="left:1430px;top:8px;width:1442px;height:1402px;border-radius:12px 0 0 0;background:#f0f0f0;box-shadow:0 0 0 1px #c0c0c0;"><svg width="1442" height="1402" viewBox="1430 8 1442 1402"><rect x="1430" y="8" width="1470" height="55" fill="#f3f3f3"/><rect x="1430" y="63" width="1470" height="1357" fill="#f0f0f0"/><g transform="translate(1437,17)"><path d="M1 1 L12 0 L24 1 L32 2 L32 32 L20 31 L6 32 L0 28 Z" fill="#0000d0"/><path d="M0 3 L9 1 L8 12 L1 13 Z M17 1 L26 2 L24 6 L17 8 Z M24 8 L32 6 L32 13 L25 13 Z M0 20 L7 21 L6 30 L0 27 Z M16 24 L32 20 L32 32 L17 31 Z" fill="#000078"/><rect x="3" y="5" width="1.4" height="1.4" fill="#9aa0ff"/><rect x="5" y="9" width="1.4" height="1.4" fill="#9aa0ff"/><rect x="19" y="3" width="1.4" height="1.4" fill="#9aa0ff"/><rect x="23" y="4" width="1.4" height="1.4" fill="#9aa0ff"/><rect x="27" y="6" width="1.4" height="1.4" fill="#9aa0ff"/><rect x="29" y="10" width="1.4" height="1.4" fill="#9aa0ff"/><rect x="3" y="24" width="1.4" height="1.4" fill="#9aa0ff"/><rect x="5" y="28" width="1.4" height="1.4" fill="#9aa0ff"/><rect x="18" y="28" width="1.4" height="1.4" fill="#9aa0ff"/><rect x="22" y="27" width="1.4" height="1.4" fill="#9aa0ff"/><rect x="26" y="26" width="1.4" height="1.4" fill="#9aa0ff"/><rect x="29" y="23" width="1.4" height="1.4" fill="#9aa0ff"/><rect x="15" y="4" width="1.4" height="1.4" fill="#9aa0ff"/><rect x="14" y="28" width="1.4" height="1.4" fill="#9aa0ff"/><rect x="0" y="15" width="32" height="3" fill="#e8d800"/><path d="M11 0 L13.2 11.5 L21 16.5 L13.2 21.5 L11 32 L8.8 21.5 L1 16.5 L8.8 11.5 Z" fill="#ffff00"/></g><text x="1479.9" y="44.8" font-size="30" fill="#1a1a1a" textLength="78.7" lengthAdjust="spacingAndGlyphs">Graph</text><rect x="2698" y="31" width="20" height="2" fill="#1a1a1a"/><rect x="2790" y="23" width="18" height="18" rx="3" fill="none" stroke="#1a1a1a" stroke-width="2"/><rect x="1447" y="63" width="1453" height="850" fill="#ffffff"/><text x="1464.5" y="91.0" font-size="25" font-weight="bold" stroke="#000" stroke-width="0.5" fill="#000" textLength="52.7" lengthAdjust="spacingAndGlyphs">2025</text><text x="1530.7" y="91.0" font-size="25" font-weight="bold" stroke="#000" stroke-width="0.5" fill="#000" textLength="38.9" lengthAdjust="spacingAndGlyphs">Apr</text><text x="1582.8" y="91.0" font-size="25" font-weight="bold" stroke="#000" stroke-width="0.5" fill="#000" textLength="30.5" lengthAdjust="spacingAndGlyphs">29;</text><text x="1625.0" y="91.0" font-size="25" font-weight="bold" stroke="#000" stroke-width="0.5" fill="#000" textLength="60.9" lengthAdjust="spacing">(981)</text><text x="1699.4" y="91.0" font-size="25" font-weight="bold" stroke="#000" stroke-width="0.5" fill="#000" textLength="85.4" lengthAdjust="spacingAndGlyphs">Martina</text><text x="1796.9" y="91.0" font-size="25" font-weight="bold" stroke="#000" stroke-width="0.5" fill="#000" textLength="86.5" lengthAdjust="spacingAndGlyphs">occults</text><text x="1897.3" y="91.0" font-size="25" font-weight="bold" stroke="#000" stroke-width="0.5" fill="#000" textLength="81.7" lengthAdjust="spacingAndGlyphs">UCAC4</text><text x="1992.8" y="91.0" font-size="25" font-weight="bold" stroke="#000" stroke-width="0.5" fill="#000" textLength="136.0" lengthAdjust="spacing">345-078934</text><text x="2141.2" y="91.0" font-size="25" font-weight="bold" stroke="#000" stroke-width="0.5" fill="#000" textLength="109.9" lengthAdjust="spacingAndGlyphs">Observed</text><text x="2264.0" y="91.0" font-size="25" font-weight="bold" stroke="#000" stroke-width="0.5" fill="#000" textLength="25.1" lengthAdjust="spacingAndGlyphs">by</text><text x="2302.8" y="91.0" font-size="25" font-weight="bold" stroke="#000" stroke-width="0.5" fill="#000" textLength="95.6" lengthAdjust="spacingAndGlyphs">Hidehito</text><text x="2410.2" y="91.0" font-size="25" font-weight="bold" stroke="#000" stroke-width="0.5" fill="#000" textLength="120.3" lengthAdjust="spacingAndGlyphs">Yamamura</text><text x="2541.0" y="91.0" font-size="25" fill="#000" textLength="281.7" lengthAdjust="spacingAndGlyphs">/ PSF-Frame Photometry /</text><text x="1464.1" y="897.0" font-size="24" fill="#000" textLength="136.9" lengthAdjust="spacingAndGlyphs">Exp=165msec</text><text x="1611.0" y="897.0" font-size="24" fill="#000" textLength="11.8" lengthAdjust="spacing">/</text><text x="1631.8" y="897.0" font-size="24" fill="#000" textLength="37.2" lengthAdjust="spacingAndGlyphs">Frm</text><text x="1680.7" y="897.0" font-size="24" fill="#000" textLength="80.5" lengthAdjust="spacingAndGlyphs">No.585.0</text><text x="1772.4" y="897.0" font-size="24" fill="#000" textLength="11.1" lengthAdjust="spacing">/</text><text x="1792.5" y="897.0" font-size="24" fill="#000" textLength="37.2" lengthAdjust="spacingAndGlyphs">Frm</text><text x="1840.8" y="897.0" font-size="24" fill="#000" textLength="45.3" lengthAdjust="spacingAndGlyphs">Mid=</text><text x="1897.3" y="897.0" font-size="24" fill="#000" textLength="164.9" lengthAdjust="spacingAndGlyphs">14h16m22.3988s,</text><text x="2082.6" y="897.0" font-size="24" fill="#000" textLength="46.1" lengthAdjust="spacingAndGlyphs">End=</text><text x="2139.9" y="897.0" font-size="24" fill="#000" textLength="85.6" lengthAdjust="spacingAndGlyphs">22.4813s</text><text x="1482.0" y="467.8" font-size="22" fill="#000" textLength="44.3" lengthAdjust="spacingAndGlyphs">1000</text><text x="1533.0" y="816.0" font-size="22" fill="#000" textLength="8.0" lengthAdjust="spacingAndGlyphs">0</text><text x="1660.0" y="862.0" font-size="22" fill="#000" textLength="32.8" lengthAdjust="spacingAndGlyphs">540</text><text x="1900.0" y="862.0" font-size="22" fill="#000" textLength="32.8" lengthAdjust="spacingAndGlyphs">570</text><text x="2140.0" y="862.0" font-size="22" fill="#000" textLength="32.8" lengthAdjust="spacingAndGlyphs">600</text><text x="2380.0" y="862.0" font-size="22" fill="#000" textLength="32.8" lengthAdjust="spacingAndGlyphs">630</text><text x="2620.0" y="862.0" font-size="22" fill="#000" textLength="32.8" lengthAdjust="spacingAndGlyphs">660</text><text x="2860.0" y="862.0" font-size="22" fill="#000" textLength="32.8" lengthAdjust="spacingAndGlyphs">690</text><rect x="1547" y="103" width="2" height="732" fill="#000"/><rect x="1547" y="833" width="1353" height="2" fill="#000"/><rect x="1595.3" y="835" width="2" height="8" fill="#000"/><rect x="1675.3" y="835" width="2" height="8" fill="#000"/><rect x="1755.3" y="835" width="2" height="8" fill="#000"/><rect x="1835.3" y="835" width="2" height="8" fill="#000"/><rect x="1915.3" y="835" width="2" height="8" fill="#000"/><rect x="1995.3" y="835" width="2" height="8" fill="#000"/><rect x="2075.3" y="835" width="2" height="8" fill="#000"/><rect x="2155.3" y="835" width="2" height="8" fill="#000"/><rect x="2235.3" y="835" width="2" height="8" fill="#000"/><rect x="2315.3" y="835" width="2" height="8" fill="#000"/><rect x="2395.3" y="835" width="2" height="8" fill="#000"/><rect x="2475.3" y="835" width="2" height="8" fill="#000"/><rect x="2555.3" y="835" width="2" height="8" fill="#000"/><rect x="2635.3" y="835" width="2" height="8" fill="#000"/><rect x="2715.3" y="835" width="2" height="8" fill="#000"/><rect x="2795.3" y="835" width="2" height="8" fill="#000"/><rect x="2875.3" y="835" width="2" height="8" fill="#000"/><rect x="1549" y="465" width="1351" height="2" fill="#00ffff"/><line x1="1549" y1="813" x2="2900" y2="813" stroke="#000" stroke-width="2" stroke-dasharray="6 4"/><polyline points="1547,811 1555,812 1563,812 1571,813 1579,814 1587,810 1595,808 1603,813 1611,811 1619,810 1627,815 1635,814 1643,816 1651,819 1659,815 1667,811 1675,813 1683,816 1691,815 1699,818 1707,816 1715,811 1723,814 1731,814 1739,812 1747,809 1755,814 1763,819 1771,815 1779,817 1787,817 1795,818 1803,815 1811,816 1819,814 1827,817 1835,818 1843,813 1851,810 1859,809 1867,814 1875,813 1883,814 1891,819 1899,813 1907,812 1915,811 1923,818 1931,813 1939,816 1947,816 1955,818 1963,819 1971,820 1979,818 1987,813 1995,816 2003,818 2011,819 2019,817 2027,817 2035,813 2043,815 2051,815 2059,812 2067,804 2075,814 2083,817 2091,812 2099,815 2107,813 2115,811 2123,810 2131,813 2139,816 2147,811 2155,813 2163,810 2171,813 2179,812 2187,815 2195,818 2203,816 2211,818 2219,814 2227,811 2235,812 2243,809 2251,809 2259,810 2267,812 2275,810 2283,808 2291,805 2299,812 2307,816 2315,805 2323,814 2331,814 2339,813 2347,819 2355,814 2363,814 2371,815 2379,817 2387,815 2395,814 2403,819 2411,812 2419,811 2427,815 2435,806 2443,814 2451,810 2459,811 2467,812 2475,809 2483,812 2491,813 2499,810 2507,812 2515,812 2523,814 2531,812 2539,814 2547,815 2555,811 2563,809 2571,812 2579,816 2587,813 2595,813 2603,813 2611,812 2619,811 2627,811 2635,811 2643,812 2651,811 2659,811 2667,814 2675,810 2683,812 2691,814 2699,812 2707,811 2715,814 2723,812 2731,810 2739,811 2747,813 2755,810 2763,810 2771,810 2779,814 2787,813 2795,816 2803,812 2811,811 2819,813 2827,816 2835,814 2843,812 2851,809 2859,811 2867,810 2875,813" fill="none" stroke="#ff00ff" stroke-width="2" shape-rendering="crispEdges"/><path d="M1545 805h4v2h2v2h2v4h-2v2h-2v2h-4v-2h-2v-2h-2v-4h2v-2h2zM1553 806h4v2h2v2h2v4h-2v2h-2v2h-4v-2h-2v-2h-2v-4h2v-2h2zM1561 806h4v2h2v2h2v4h-2v2h-2v2h-4v-2h-2v-2h-2v-4h2v-2h2zM1569 807h4v2h2v2h2v4h-2v2h-2v2h-4v-2h-2v-2h-2v-4h2v-2h2zM1577 808h4v2h2v2h2v4h-2v2h-2v2h-4v-2h-2v-2h-2v-4h2v-2h2zM1585 804h4v2h2v2h2v4h-2v2h-2v2h-4v-2h-2v-2h-2v-4h2v-2h2zM1593 802h4v2h2v2h2v4h-2v2h-2v2h-4v-2h-2v-2h-2v-4h2v-2h2zM1601 807h4v2h2v2h2v4h-2v2h-2v2h-4v-2h-2v-2h-2v-4h2v-2h2zM1609 805h4v2h2v2h2v4h-2v2h-2v2h-4v-2h-2v-2h-2v-4h2v-2h2zM1617 804h4v2h2v2h2v4h-2v2h-2v2h-4v-2h-2v-2h-2v-4h2v-2h2zM1625 809h4v2h2v2h2v4h-2v2h-2v2h-4v-2h-2v-2h-2v-4h2v-2h2zM1633 808h4v2h2v2h2v4h-2v2h-2v2h-4v-2h-2v-2h-2v-4h2v-2h2zM1641 810h4v2h2v2h2v4h-2v2h-2v2h-4v-2h-2v-2h-2v-4h2v-2h2zM1649 813h4v2h2v2h2v4h-2v2h-2v2h-4v-2h-2v-2h-2v-4h2v-2h2zM1657 809h4v2h2v2h2v4h-2v2h-2v2h-4v-2h-2v-2h-2v-4h2v-2h2zM1665 805h4v2h2v2h2v4h-2v2h-2v2h-4v-2h-2v-2h-2v-4h2v-2h2zM1673 807h4v2h2v2h2v4h-2v2h-2v2h-4v-2h-2v-2h-2v-4h2v-2h2zM1681 810h4v2h2v2h2v4h-2v2h-2v2h-4v-2h-2v-2h-2v-4h2v-2h2zM1689 809h4v2h2v2h2v4h-2v2h-2v2h-4v-2h-2v-2h-2v-4h2v-2h2zM1697 812h4v2h2v2h2v4h-2v2h-2v2h-4v-2h-2v-2h-2v-4h2v-2h2zM1705 810h4v2h2v2h2v4h-2v2h-2v2h-4v-2h-2v-2h-2v-4h2v-2h2zM1713 805h4v2h2v2h2v4h-2v2h-2v2h-4v-2h-2v-2h-2v-4h2v-2h2zM1721 808h4v2h2v2h2v4h-2v2h-2v2h-4v-2h-2v-2h-2v-4h2v-2h2zM1729 808h4v2h2v2h2v4h-2v2h-2v2h-4v-2h-2v-2h-2v-4h2v-2h2zM1737 806h4v2h2v2h2v4h-2v2h-2v2h-4v-2h-2v-2h-2v-4h2v-2h2zM1745 803h4v2h2v2h2v4h-2v2h-2v2h-4v-2h-2v-2h-2v-4h2v-2h2zM1753 808h4v2h2v2h2v4h-2v2h-2v2h-4v-2h-2v-2h-2v-4h2v-2h2zM1761 813h4v2h2v2h2v4h-2v2h-2v2h-4v-2h-2v-2h-2v-4h2v-2h2zM1769 809h4v2h2v2h2v4h-2v2h-2v2h-4v-2h-2v-2h-2v-4h2v-2h2zM1777 811h4v2h2v2h2v4h-2v2h-2v2h-4v-2h-2v-2h-2v-4h2v-2h2zM1785 811h4v2h2v2h2v4h-2v2h-2v2h-4v-2h-2v-2h-2v-4h2v-2h2zM1793 812h4v2h2v2h2v4h-2v2h-2v2h-4v-2h-2v-2h-2v-4h2v-2h2zM1801 809h4v2h2v2h2v4h-2v2h-2v2h-4v-2h-2v-2h-2v-4h2v-2h2zM1809 810h4v2h2v2h2v4h-2v2h-2v2h-4v-2h-2v-2h-2v-4h2v-2h2zM1817 808h4v2h2v2h2v4h-2v2h-2v2h-4v-2h-2v-2h-2v-4h2v-2h2zM1825 811h4v2h2v2h2v4h-2v2h-2v2h-4v-2h-2v-2h-2v-4h2v-2h2zM1833 812h4v2h2v2h2v4h-2v2h-2v2h-4v-2h-2v-2h-2v-4h2v-2h2zM1841 807h4v2h2v2h2v4h-2v2h-2v2h-4v-2h-2v-2h-2v-4h2v-2h2zM1849 804h4v2h2v2h2v4h-2v2h-2v2h-4v-2h-2v-2h-2v-4h2v-2h2zM1857 803h4v2h2v2h2v4h-2v2h-2v2h-4v-2h-2v-2h-2v-4h2v-2h2zM1865 808h4v2h2v2h2v4h-2v2h-2v2h-4v-2h-2v-2h-2v-4h2v-2h2zM1873 807h4v2h2v2h2v4h-2v2h-2v2h-4v-2h-2v-2h-2v-4h2v-2h2zM1881 808h4v2h2v2h2v4h-2v2h-2v2h-4v-2h-2v-2h-2v-4h2v-2h2zM1889 813h4v2h2v2h2v4h-2v2h-2v2h-4v-2h-2v-2h-2v-4h2v-2h2zM1897 807h4v2h2v2h2v4h-2v2h-2v2h-4v-2h-2v-2h-2v-4h2v-2h2zM1905 806h4v2h2v2h2v4h-2v2h-2v2h-4v-2h-2v-2h-2v-4h2v-2h2zM1913 805h4v2h2v2h2v4h-2v2h-2v2h-4v-2h-2v-2h-2v-4h2v-2h2zM1921 812h4v2h2v2h2v4h-2v2h-2v2h-4v-2h-2v-2h-2v-4h2v-2h2zM1929 807h4v2h2v2h2v4h-2v2h-2v2h-4v-2h-2v-2h-2v-4h2v-2h2zM1937 810h4v2h2v2h2v4h-2v2h-2v2h-4v-2h-2v-2h-2v-4h2v-2h2zM1945 810h4v2h2v2h2v4h-2v2h-2v2h-4v-2h-2v-2h-2v-4h2v-2h2zM1953 812h4v2h2v2h2v4h-2v2h-2v2h-4v-2h-2v-2h-2v-4h2v-2h2zM1961 813h4v2h2v2h2v4h-2v2h-2v2h-4v-2h-2v-2h-2v-4h2v-2h2zM1969 814h4v2h2v2h2v4h-2v2h-2v2h-4v-2h-2v-2h-2v-4h2v-2h2zM1977 812h4v2h2v2h2v4h-2v2h-2v2h-4v-2h-2v-2h-2v-4h2v-2h2zM1985 807h4v2h2v2h2v4h-2v2h-2v2h-4v-2h-2v-2h-2v-4h2v-2h2zM1993 810h4v2h2v2h2v4h-2v2h-2v2h-4v-2h-2v-2h-2v-4h2v-2h2zM2001 812h4v2h2v2h2v4h-2v2h-2v2h-4v-2h-2v-2h-2v-4h2v-2h2zM2009 813h4v2h2v2h2v4h-2v2h-2v2h-4v-2h-2v-2h-2v-4h2v-2h2zM2017 811h4v2h2v2h2v4h-2v2h-2v2h-4v-2h-2v-2h-2v-4h2v-2h2zM2025 811h4v2h2v2h2v4h-2v2h-2v2h-4v-2h-2v-2h-2v-4h2v-2h2zM2041 809h4v2h2v2h2v4h-2v2h-2v2h-4v-2h-2v-2h-2v-4h2v-2h2zM2049 809h4v2h2v2h2v4h-2v2h-2v2h-4v-2h-2v-2h-2v-4h2v-2h2zM2057 806h4v2h2v2h2v4h-2v2h-2v2h-4v-2h-2v-2h-2v-4h2v-2h2zM2065 798h4v2h2v2h2v4h-2v2h-2v2h-4v-2h-2v-2h-2v-4h2v-2h2zM2073 808h4v2h2v2h2v4h-2v2h-2v2h-4v-2h-2v-2h-2v-4h2v-2h2zM2081 811h4v2h2v2h2v4h-2v2h-2v2h-4v-2h-2v-2h-2v-4h2v-2h2zM2089 806h4v2h2v2h2v4h-2v2h-2v2h-4v-2h-2v-2h-2v-4h2v-2h2zM2097 809h4v2h2v2h2v4h-2v2h-2v2h-4v-2h-2v-2h-2v-4h2v-2h2zM2105 807h4v2h2v2h2v4h-2v2h-2v2h-4v-2h-2v-2h-2v-4h2v-2h2zM2113 805h4v2h2v2h2v4h-2v2h-2v2h-4v-2h-2v-2h-2v-4h2v-2h2zM2121 804h4v2h2v2h2v4h-2v2h-2v2h-4v-2h-2v-2h-2v-4h2v-2h2zM2129 807h4v2h2v2h2v4h-2v2h-2v2h-4v-2h-2v-2h-2v-4h2v-2h2zM2137 810h4v2h2v2h2v4h-2v2h-2v2h-4v-2h-2v-2h-2v-4h2v-2h2zM2145 805h4v2h2v2h2v4h-2v2h-2v2h-4v-2h-2v-2h-2v-4h2v-2h2zM2153 807h4v2h2v2h2v4h-2v2h-2v2h-4v-2h-2v-2h-2v-4h2v-2h2zM2161 804h4v2h2v2h2v4h-2v2h-2v2h-4v-2h-2v-2h-2v-4h2v-2h2zM2169 807h4v2h2v2h2v4h-2v2h-2v2h-4v-2h-2v-2h-2v-4h2v-2h2zM2177 806h4v2h2v2h2v4h-2v2h-2v2h-4v-2h-2v-2h-2v-4h2v-2h2zM2185 809h4v2h2v2h2v4h-2v2h-2v2h-4v-2h-2v-2h-2v-4h2v-2h2zM2193 812h4v2h2v2h2v4h-2v2h-2v2h-4v-2h-2v-2h-2v-4h2v-2h2zM2201 810h4v2h2v2h2v4h-2v2h-2v2h-4v-2h-2v-2h-2v-4h2v-2h2zM2209 812h4v2h2v2h2v4h-2v2h-2v2h-4v-2h-2v-2h-2v-4h2v-2h2zM2217 808h4v2h2v2h2v4h-2v2h-2v2h-4v-2h-2v-2h-2v-4h2v-2h2zM2225 805h4v2h2v2h2v4h-2v2h-2v2h-4v-2h-2v-2h-2v-4h2v-2h2zM2233 806h4v2h2v2h2v4h-2v2h-2v2h-4v-2h-2v-2h-2v-4h2v-2h2zM2241 803h4v2h2v2h2v4h-2v2h-2v2h-4v-2h-2v-2h-2v-4h2v-2h2zM2249 803h4v2h2v2h2v4h-2v2h-2v2h-4v-2h-2v-2h-2v-4h2v-2h2zM2257 804h4v2h2v2h2v4h-2v2h-2v2h-4v-2h-2v-2h-2v-4h2v-2h2zM2265 806h4v2h2v2h2v4h-2v2h-2v2h-4v-2h-2v-2h-2v-4h2v-2h2zM2273 804h4v2h2v2h2v4h-2v2h-2v2h-4v-2h-2v-2h-2v-4h2v-2h2zM2281 802h4v2h2v2h2v4h-2v2h-2v2h-4v-2h-2v-2h-2v-4h2v-2h2zM2289 799h4v2h2v2h2v4h-2v2h-2v2h-4v-2h-2v-2h-2v-4h2v-2h2zM2297 806h4v2h2v2h2v4h-2v2h-2v2h-4v-2h-2v-2h-2v-4h2v-2h2zM2305 810h4v2h2v2h2v4h-2v2h-2v2h-4v-2h-2v-2h-2v-4h2v-2h2zM2313 799h4v2h2v2h2v4h-2v2h-2v2h-4v-2h-2v-2h-2v-4h2v-2h2zM2321 808h4v2h2v2h2v4h-2v2h-2v2h-4v-2h-2v-2h-2v-4h2v-2h2zM2329 808h4v2h2v2h2v4h-2v2h-2v2h-4v-2h-2v-2h-2v-4h2v-2h2zM2337 807h4v2h2v2h2v4h-2v2h-2v2h-4v-2h-2v-2h-2v-4h2v-2h2zM2345 813h4v2h2v2h2v4h-2v2h-2v2h-4v-2h-2v-2h-2v-4h2v-2h2zM2353 808h4v2h2v2h2v4h-2v2h-2v2h-4v-2h-2v-2h-2v-4h2v-2h2zM2361 808h4v2h2v2h2v4h-2v2h-2v2h-4v-2h-2v-2h-2v-4h2v-2h2zM2369 809h4v2h2v2h2v4h-2v2h-2v2h-4v-2h-2v-2h-2v-4h2v-2h2zM2377 811h4v2h2v2h2v4h-2v2h-2v2h-4v-2h-2v-2h-2v-4h2v-2h2zM2385 809h4v2h2v2h2v4h-2v2h-2v2h-4v-2h-2v-2h-2v-4h2v-2h2zM2393 808h4v2h2v2h2v4h-2v2h-2v2h-4v-2h-2v-2h-2v-4h2v-2h2zM2401 813h4v2h2v2h2v4h-2v2h-2v2h-4v-2h-2v-2h-2v-4h2v-2h2zM2409 806h4v2h2v2h2v4h-2v2h-2v2h-4v-2h-2v-2h-2v-4h2v-2h2zM2417 805h4v2h2v2h2v4h-2v2h-2v2h-4v-2h-2v-2h-2v-4h2v-2h2zM2425 809h4v2h2v2h2v4h-2v2h-2v2h-4v-2h-2v-2h-2v-4h2v-2h2zM2433 800h4v2h2v2h2v4h-2v2h-2v2h-4v-2h-2v-2h-2v-4h2v-2h2zM2441 808h4v2h2v2h2v4h-2v2h-2v2h-4v-2h-2v-2h-2v-4h2v-2h2zM2449 804h4v2h2v2h2v4h-2v2h-2v2h-4v-2h-2v-2h-2v-4h2v-2h2zM2457 805h4v2h2v2h2v4h-2v2h-2v2h-4v-2h-2v-2h-2v-4h2v-2h2zM2465 806h4v2h2v2h2v4h-2v2h-2v2h-4v-2h-2v-2h-2v-4h2v-2h2zM2473 803h4v2h2v2h2v4h-2v2h-2v2h-4v-2h-2v-2h-2v-4h2v-2h2zM2481 806h4v2h2v2h2v4h-2v2h-2v2h-4v-2h-2v-2h-2v-4h2v-2h2zM2489 807h4v2h2v2h2v4h-2v2h-2v2h-4v-2h-2v-2h-2v-4h2v-2h2zM2497 804h4v2h2v2h2v4h-2v2h-2v2h-4v-2h-2v-2h-2v-4h2v-2h2zM2505 806h4v2h2v2h2v4h-2v2h-2v2h-4v-2h-2v-2h-2v-4h2v-2h2zM2513 806h4v2h2v2h2v4h-2v2h-2v2h-4v-2h-2v-2h-2v-4h2v-2h2zM2521 808h4v2h2v2h2v4h-2v2h-2v2h-4v-2h-2v-2h-2v-4h2v-2h2zM2529 806h4v2h2v2h2v4h-2v2h-2v2h-4v-2h-2v-2h-2v-4h2v-2h2zM2537 808h4v2h2v2h2v4h-2v2h-2v2h-4v-2h-2v-2h-2v-4h2v-2h2zM2545 809h4v2h2v2h2v4h-2v2h-2v2h-4v-2h-2v-2h-2v-4h2v-2h2zM2553 805h4v2h2v2h2v4h-2v2h-2v2h-4v-2h-2v-2h-2v-4h2v-2h2zM2561 803h4v2h2v2h2v4h-2v2h-2v2h-4v-2h-2v-2h-2v-4h2v-2h2zM2569 806h4v2h2v2h2v4h-2v2h-2v2h-4v-2h-2v-2h-2v-4h2v-2h2zM2577 810h4v2h2v2h2v4h-2v2h-2v2h-4v-2h-2v-2h-2v-4h2v-2h2zM2585 807h4v2h2v2h2v4h-2v2h-2v2h-4v-2h-2v-2h-2v-4h2v-2h2zM2593 807h4v2h2v2h2v4h-2v2h-2v2h-4v-2h-2v-2h-2v-4h2v-2h2zM2601 807h4v2h2v2h2v4h-2v2h-2v2h-4v-2h-2v-2h-2v-4h2v-2h2zM2609 806h4v2h2v2h2v4h-2v2h-2v2h-4v-2h-2v-2h-2v-4h2v-2h2zM2617 805h4v2h2v2h2v4h-2v2h-2v2h-4v-2h-2v-2h-2v-4h2v-2h2zM2625 805h4v2h2v2h2v4h-2v2h-2v2h-4v-2h-2v-2h-2v-4h2v-2h2zM2633 805h4v2h2v2h2v4h-2v2h-2v2h-4v-2h-2v-2h-2v-4h2v-2h2zM2641 806h4v2h2v2h2v4h-2v2h-2v2h-4v-2h-2v-2h-2v-4h2v-2h2zM2649 805h4v2h2v2h2v4h-2v2h-2v2h-4v-2h-2v-2h-2v-4h2v-2h2zM2657 805h4v2h2v2h2v4h-2v2h-2v2h-4v-2h-2v-2h-2v-4h2v-2h2zM2665 808h4v2h2v2h2v4h-2v2h-2v2h-4v-2h-2v-2h-2v-4h2v-2h2zM2673 804h4v2h2v2h2v4h-2v2h-2v2h-4v-2h-2v-2h-2v-4h2v-2h2zM2681 806h4v2h2v2h2v4h-2v2h-2v2h-4v-2h-2v-2h-2v-4h2v-2h2zM2689 808h4v2h2v2h2v4h-2v2h-2v2h-4v-2h-2v-2h-2v-4h2v-2h2zM2697 806h4v2h2v2h2v4h-2v2h-2v2h-4v-2h-2v-2h-2v-4h2v-2h2zM2705 805h4v2h2v2h2v4h-2v2h-2v2h-4v-2h-2v-2h-2v-4h2v-2h2zM2713 808h4v2h2v2h2v4h-2v2h-2v2h-4v-2h-2v-2h-2v-4h2v-2h2zM2721 806h4v2h2v2h2v4h-2v2h-2v2h-4v-2h-2v-2h-2v-4h2v-2h2zM2729 804h4v2h2v2h2v4h-2v2h-2v2h-4v-2h-2v-2h-2v-4h2v-2h2zM2737 805h4v2h2v2h2v4h-2v2h-2v2h-4v-2h-2v-2h-2v-4h2v-2h2zM2745 807h4v2h2v2h2v4h-2v2h-2v2h-4v-2h-2v-2h-2v-4h2v-2h2zM2753 804h4v2h2v2h2v4h-2v2h-2v2h-4v-2h-2v-2h-2v-4h2v-2h2zM2761 804h4v2h2v2h2v4h-2v2h-2v2h-4v-2h-2v-2h-2v-4h2v-2h2zM2769 804h4v2h2v2h2v4h-2v2h-2v2h-4v-2h-2v-2h-2v-4h2v-2h2zM2777 808h4v2h2v2h2v4h-2v2h-2v2h-4v-2h-2v-2h-2v-4h2v-2h2zM2785 807h4v2h2v2h2v4h-2v2h-2v2h-4v-2h-2v-2h-2v-4h2v-2h2zM2793 810h4v2h2v2h2v4h-2v2h-2v2h-4v-2h-2v-2h-2v-4h2v-2h2zM2801 806h4v2h2v2h2v4h-2v2h-2v2h-4v-2h-2v-2h-2v-4h2v-2h2zM2809 805h4v2h2v2h2v4h-2v2h-2v2h-4v-2h-2v-2h-2v-4h2v-2h2zM2817 807h4v2h2v2h2v4h-2v2h-2v2h-4v-2h-2v-2h-2v-4h2v-2h2zM2825 810h4v2h2v2h2v4h-2v2h-2v2h-4v-2h-2v-2h-2v-4h2v-2h2zM2833 808h4v2h2v2h2v4h-2v2h-2v2h-4v-2h-2v-2h-2v-4h2v-2h2zM2841 806h4v2h2v2h2v4h-2v2h-2v2h-4v-2h-2v-2h-2v-4h2v-2h2zM2849 803h4v2h2v2h2v4h-2v2h-2v2h-4v-2h-2v-2h-2v-4h2v-2h2zM2857 805h4v2h2v2h2v4h-2v2h-2v2h-4v-2h-2v-2h-2v-4h2v-2h2zM2865 804h4v2h2v2h2v4h-2v2h-2v2h-4v-2h-2v-2h-2v-4h2v-2h2zM2873 807h4v2h2v2h2v4h-2v2h-2v2h-4v-2h-2v-2h-2v-4h2v-2h2z" fill="#ff00ff"/><path d="M2033 807h4v2h2v2h2v4h-2v2h-2v2h-4v-2h-2v-2h-2v-4h2v-2h2z" fill="#ff0000"/><polyline points="1547,283.2 1555,212.8 1563,269.2 1571,231 1579,255 1587,259.3 1595,257.6 1603,165.3 1611,270.2 1619,205.1 1627,206.8 1635,198.8 1643,175.2 1651,242.7 1659,254.3 1667,260.3 1675,196.8 1683,255 1691,231 1699,208.8 1707,294.8 1715,283.2 1723,191.2 1731,252.6 1739,140.7 1747,272.9 1755,296.5 1763,293.5 1771,244.7 1779,270.6 1787,231 1795,255 1803,147 1811,166.9 1819,278.5 1827,180.6 1835,279.9 1843,246.6 1851,290.8 1859,201.1 1867,183.2 1875,204.8 1883,168.3 1891,231 1899,244.7 1907,260.3 1915,285.2 1923,258.6 1931,234.7 1939,186.2 1947,270.2 1955,204.8 1963,250.6 1971,182.9 1979,241 1987,164.9 1995,200.8 2003,166.6 2011,239.3 2019,206.5 2027,270.6 2035,194.8 2043,276.9 2051,252.6 2059,331.3 2067,300.8 2075,278.9 2083,282.5 2091,412.7 2099,268.9 2107,278.5 2115,214.4 2123,102.5 2131,137.1 2139,290.2 2147,284.8 2155,282.5 2163,206.5 2171,296.8 2179,318.7 2187,264.9 2195,302.8 2203,211.1 2211,184.9 2219,336.3 2227,184.9 2235,272.6 2243,200.8 2251,305.8 2259,336.3 2267,255 2275,292.8 2283,270.6 2291,282.5 2299,234.4 2307,276.9 2315,282.5 2323,296.8 2331,178.6 2339,322.7 2347,344.3 2355,258.6 2363,402.7 2371,304.8 2379,272.6 2387,282.5 2395,219.1 2403,249 2411,148.7 2419,264.9 2427,268.9 2435,325 2443,239 2451,229 2459,286.8 2467,134.7 2475,316.4 2483,204.8 2491,326.7 2499,304.8 2507,244.7 2515,331.3 2523,224.7 2531,219.1 2539,216.4 2547,242.7 2555,198.8 2563,222.7 2571,132.7 2579,244.7 2587,322.7 2595,252.6 2603,280.5 2611,352.9 2619,339 2627,341.3 2635,211.1 2643,196.5 2651,144.7 2659,334.7 2667,407.1 2675,276.9 2683,380.8 2691,226.7 2699,322.7 2707,236.7 2715,247.3 2723,212.8 2731,276.9 2739,176.6 2747,292.8 2755,354.6 2763,302.8 2771,366.9 2779,282.5 2787,212.8 2795,274.9 2803,170.6 2811,311.1 2819,224.7 2827,260.6 2835,282.5 2843,239 2851,247.3 2859,252.6 2867,200.8 2875,246" fill="none" stroke="#ffff00" stroke-width="2" shape-rendering="crispEdges"/><path d="M1545 277h4v2h2v2h2v4h-2v2h-2v2h-4v-2h-2v-2h-2v-4h2v-2h2zM1553 207h4v2h2v2h2v4h-2v2h-2v2h-4v-2h-2v-2h-2v-4h2v-2h2zM1561 263h4v2h2v2h2v4h-2v2h-2v2h-4v-2h-2v-2h-2v-4h2v-2h2zM1569 225h4v2h2v2h2v4h-2v2h-2v2h-4v-2h-2v-2h-2v-4h2v-2h2zM1577 249h4v2h2v2h2v4h-2v2h-2v2h-4v-2h-2v-2h-2v-4h2v-2h2zM1585 253h4v2h2v2h2v4h-2v2h-2v2h-4v-2h-2v-2h-2v-4h2v-2h2zM1593 252h4v2h2v2h2v4h-2v2h-2v2h-4v-2h-2v-2h-2v-4h2v-2h2zM1601 159h4v2h2v2h2v4h-2v2h-2v2h-4v-2h-2v-2h-2v-4h2v-2h2zM1609 264h4v2h2v2h2v4h-2v2h-2v2h-4v-2h-2v-2h-2v-4h2v-2h2zM1617 199h4v2h2v2h2v4h-2v2h-2v2h-4v-2h-2v-2h-2v-4h2v-2h2zM1625 201h4v2h2v2h2v4h-2v2h-2v2h-4v-2h-2v-2h-2v-4h2v-2h2zM1633 193h4v2h2v2h2v4h-2v2h-2v2h-4v-2h-2v-2h-2v-4h2v-2h2zM1641 169h4v2h2v2h2v4h-2v2h-2v2h-4v-2h-2v-2h-2v-4h2v-2h2zM1649 237h4v2h2v2h2v4h-2v2h-2v2h-4v-2h-2v-2h-2v-4h2v-2h2zM1657 248h4v2h2v2h2v4h-2v2h-2v2h-4v-2h-2v-2h-2v-4h2v-2h2zM1665 254h4v2h2v2h2v4h-2v2h-2v2h-4v-2h-2v-2h-2v-4h2v-2h2zM1673 191h4v2h2v2h2v4h-2v2h-2v2h-4v-2h-2v-2h-2v-4h2v-2h2zM1681 249h4v2h2v2h2v4h-2v2h-2v2h-4v-2h-2v-2h-2v-4h2v-2h2zM1689 225h4v2h2v2h2v4h-2v2h-2v2h-4v-2h-2v-2h-2v-4h2v-2h2zM1697 203h4v2h2v2h2v4h-2v2h-2v2h-4v-2h-2v-2h-2v-4h2v-2h2zM1705 289h4v2h2v2h2v4h-2v2h-2v2h-4v-2h-2v-2h-2v-4h2v-2h2zM1713 277h4v2h2v2h2v4h-2v2h-2v2h-4v-2h-2v-2h-2v-4h2v-2h2zM1721 185h4v2h2v2h2v4h-2v2h-2v2h-4v-2h-2v-2h-2v-4h2v-2h2zM1729 247h4v2h2v2h2v4h-2v2h-2v2h-4v-2h-2v-2h-2v-4h2v-2h2zM1737 135h4v2h2v2h2v4h-2v2h-2v2h-4v-2h-2v-2h-2v-4h2v-2h2zM1745 267h4v2h2v2h2v4h-2v2h-2v2h-4v-2h-2v-2h-2v-4h2v-2h2zM1753 290h4v2h2v2h2v4h-2v2h-2v2h-4v-2h-2v-2h-2v-4h2v-2h2zM1761 288h4v2h2v2h2v4h-2v2h-2v2h-4v-2h-2v-2h-2v-4h2v-2h2zM1769 239h4v2h2v2h2v4h-2v2h-2v2h-4v-2h-2v-2h-2v-4h2v-2h2zM1777 265h4v2h2v2h2v4h-2v2h-2v2h-4v-2h-2v-2h-2v-4h2v-2h2zM1785 225h4v2h2v2h2v4h-2v2h-2v2h-4v-2h-2v-2h-2v-4h2v-2h2zM1793 249h4v2h2v2h2v4h-2v2h-2v2h-4v-2h-2v-2h-2v-4h2v-2h2zM1801 141h4v2h2v2h2v4h-2v2h-2v2h-4v-2h-2v-2h-2v-4h2v-2h2zM1809 161h4v2h2v2h2v4h-2v2h-2v2h-4v-2h-2v-2h-2v-4h2v-2h2zM1817 272h4v2h2v2h2v4h-2v2h-2v2h-4v-2h-2v-2h-2v-4h2v-2h2zM1825 175h4v2h2v2h2v4h-2v2h-2v2h-4v-2h-2v-2h-2v-4h2v-2h2zM1833 274h4v2h2v2h2v4h-2v2h-2v2h-4v-2h-2v-2h-2v-4h2v-2h2zM1841 241h4v2h2v2h2v4h-2v2h-2v2h-4v-2h-2v-2h-2v-4h2v-2h2zM1849 285h4v2h2v2h2v4h-2v2h-2v2h-4v-2h-2v-2h-2v-4h2v-2h2zM1857 195h4v2h2v2h2v4h-2v2h-2v2h-4v-2h-2v-2h-2v-4h2v-2h2zM1865 177h4v2h2v2h2v4h-2v2h-2v2h-4v-2h-2v-2h-2v-4h2v-2h2zM1873 199h4v2h2v2h2v4h-2v2h-2v2h-4v-2h-2v-2h-2v-4h2v-2h2zM1881 162h4v2h2v2h2v4h-2v2h-2v2h-4v-2h-2v-2h-2v-4h2v-2h2zM1889 225h4v2h2v2h2v4h-2v2h-2v2h-4v-2h-2v-2h-2v-4h2v-2h2zM1897 239h4v2h2v2h2v4h-2v2h-2v2h-4v-2h-2v-2h-2v-4h2v-2h2zM1905 254h4v2h2v2h2v4h-2v2h-2v2h-4v-2h-2v-2h-2v-4h2v-2h2zM1913 279h4v2h2v2h2v4h-2v2h-2v2h-4v-2h-2v-2h-2v-4h2v-2h2zM1921 253h4v2h2v2h2v4h-2v2h-2v2h-4v-2h-2v-2h-2v-4h2v-2h2zM1929 229h4v2h2v2h2v4h-2v2h-2v2h-4v-2h-2v-2h-2v-4h2v-2h2zM1937 180h4v2h2v2h2v4h-2v2h-2v2h-4v-2h-2v-2h-2v-4h2v-2h2zM1945 264h4v2h2v2h2v4h-2v2h-2v2h-4v-2h-2v-2h-2v-4h2v-2h2zM1953 199h4v2h2v2h2v4h-2v2h-2v2h-4v-2h-2v-2h-2v-4h2v-2h2zM1961 245h4v2h2v2h2v4h-2v2h-2v2h-4v-2h-2v-2h-2v-4h2v-2h2zM1969 177h4v2h2v2h2v4h-2v2h-2v2h-4v-2h-2v-2h-2v-4h2v-2h2zM1977 235h4v2h2v2h2v4h-2v2h-2v2h-4v-2h-2v-2h-2v-4h2v-2h2zM1985 159h4v2h2v2h2v4h-2v2h-2v2h-4v-2h-2v-2h-2v-4h2v-2h2zM1993 195h4v2h2v2h2v4h-2v2h-2v2h-4v-2h-2v-2h-2v-4h2v-2h2zM2001 161h4v2h2v2h2v4h-2v2h-2v2h-4v-2h-2v-2h-2v-4h2v-2h2zM2009 233h4v2h2v2h2v4h-2v2h-2v2h-4v-2h-2v-2h-2v-4h2v-2h2zM2017 200h4v2h2v2h2v4h-2v2h-2v2h-4v-2h-2v-2h-2v-4h2v-2h2zM2025 265h4v2h2v2h2v4h-2v2h-2v2h-4v-2h-2v-2h-2v-4h2v-2h2zM2041 271h4v2h2v2h2v4h-2v2h-2v2h-4v-2h-2v-2h-2v-4h2v-2h2zM2049 247h4v2h2v2h2v4h-2v2h-2v2h-4v-2h-2v-2h-2v-4h2v-2h2zM2057 325h4v2h2v2h2v4h-2v2h-2v2h-4v-2h-2v-2h-2v-4h2v-2h2zM2065 295h4v2h2v2h2v4h-2v2h-2v2h-4v-2h-2v-2h-2v-4h2v-2h2zM2073 273h4v2h2v2h2v4h-2v2h-2v2h-4v-2h-2v-2h-2v-4h2v-2h2zM2081 276h4v2h2v2h2v4h-2v2h-2v2h-4v-2h-2v-2h-2v-4h2v-2h2zM2089 407h4v2h2v2h2v4h-2v2h-2v2h-4v-2h-2v-2h-2v-4h2v-2h2zM2097 263h4v2h2v2h2v4h-2v2h-2v2h-4v-2h-2v-2h-2v-4h2v-2h2zM2105 272h4v2h2v2h2v4h-2v2h-2v2h-4v-2h-2v-2h-2v-4h2v-2h2zM2113 208h4v2h2v2h2v4h-2v2h-2v2h-4v-2h-2v-2h-2v-4h2v-2h2zM2121 96h4v2h2v2h2v4h-2v2h-2v2h-4v-2h-2v-2h-2v-4h2v-2h2zM2129 131h4v2h2v2h2v4h-2v2h-2v2h-4v-2h-2v-2h-2v-4h2v-2h2zM2137 284h4v2h2v2h2v4h-2v2h-2v2h-4v-2h-2v-2h-2v-4h2v-2h2zM2145 279h4v2h2v2h2v4h-2v2h-2v2h-4v-2h-2v-2h-2v-4h2v-2h2zM2153 276h4v2h2v2h2v4h-2v2h-2v2h-4v-2h-2v-2h-2v-4h2v-2h2zM2161 200h4v2h2v2h2v4h-2v2h-2v2h-4v-2h-2v-2h-2v-4h2v-2h2zM2169 291h4v2h2v2h2v4h-2v2h-2v2h-4v-2h-2v-2h-2v-4h2v-2h2zM2177 313h4v2h2v2h2v4h-2v2h-2v2h-4v-2h-2v-2h-2v-4h2v-2h2zM2185 259h4v2h2v2h2v4h-2v2h-2v2h-4v-2h-2v-2h-2v-4h2v-2h2zM2193 297h4v2h2v2h2v4h-2v2h-2v2h-4v-2h-2v-2h-2v-4h2v-2h2zM2201 205h4v2h2v2h2v4h-2v2h-2v2h-4v-2h-2v-2h-2v-4h2v-2h2zM2209 179h4v2h2v2h2v4h-2v2h-2v2h-4v-2h-2v-2h-2v-4h2v-2h2zM2217 330h4v2h2v2h2v4h-2v2h-2v2h-4v-2h-2v-2h-2v-4h2v-2h2zM2225 179h4v2h2v2h2v4h-2v2h-2v2h-4v-2h-2v-2h-2v-4h2v-2h2zM2233 267h4v2h2v2h2v4h-2v2h-2v2h-4v-2h-2v-2h-2v-4h2v-2h2zM2241 195h4v2h2v2h2v4h-2v2h-2v2h-4v-2h-2v-2h-2v-4h2v-2h2zM2249 300h4v2h2v2h2v4h-2v2h-2v2h-4v-2h-2v-2h-2v-4h2v-2h2zM2257 330h4v2h2v2h2v4h-2v2h-2v2h-4v-2h-2v-2h-2v-4h2v-2h2zM2265 249h4v2h2v2h2v4h-2v2h-2v2h-4v-2h-2v-2h-2v-4h2v-2h2zM2273 287h4v2h2v2h2v4h-2v2h-2v2h-4v-2h-2v-2h-2v-4h2v-2h2zM2281 265h4v2h2v2h2v4h-2v2h-2v2h-4v-2h-2v-2h-2v-4h2v-2h2zM2289 276h4v2h2v2h2v4h-2v2h-2v2h-4v-2h-2v-2h-2v-4h2v-2h2zM2297 228h4v2h2v2h2v4h-2v2h-2v2h-4v-2h-2v-2h-2v-4h2v-2h2zM2305 271h4v2h2v2h2v4h-2v2h-2v2h-4v-2h-2v-2h-2v-4h2v-2h2zM2313 276h4v2h2v2h2v4h-2v2h-2v2h-4v-2h-2v-2h-2v-4h2v-2h2zM2321 291h4v2h2v2h2v4h-2v2h-2v2h-4v-2h-2v-2h-2v-4h2v-2h2zM2329 173h4v2h2v2h2v4h-2v2h-2v2h-4v-2h-2v-2h-2v-4h2v-2h2zM2337 317h4v2h2v2h2v4h-2v2h-2v2h-4v-2h-2v-2h-2v-4h2v-2h2zM2345 338h4v2h2v2h2v4h-2v2h-2v2h-4v-2h-2v-2h-2v-4h2v-2h2zM2353 253h4v2h2v2h2v4h-2v2h-2v2h-4v-2h-2v-2h-2v-4h2v-2h2zM2361 397h4v2h2v2h2v4h-2v2h-2v2h-4v-2h-2v-2h-2v-4h2v-2h2zM2369 299h4v2h2v2h2v4h-2v2h-2v2h-4v-2h-2v-2h-2v-4h2v-2h2zM2377 267h4v2h2v2h2v4h-2v2h-2v2h-4v-2h-2v-2h-2v-4h2v-2h2zM2385 276h4v2h2v2h2v4h-2v2h-2v2h-4v-2h-2v-2h-2v-4h2v-2h2zM2393 213h4v2h2v2h2v4h-2v2h-2v2h-4v-2h-2v-2h-2v-4h2v-2h2zM2401 243h4v2h2v2h2v4h-2v2h-2v2h-4v-2h-2v-2h-2v-4h2v-2h2zM2409 143h4v2h2v2h2v4h-2v2h-2v2h-4v-2h-2v-2h-2v-4h2v-2h2zM2417 259h4v2h2v2h2v4h-2v2h-2v2h-4v-2h-2v-2h-2v-4h2v-2h2zM2425 263h4v2h2v2h2v4h-2v2h-2v2h-4v-2h-2v-2h-2v-4h2v-2h2zM2433 319h4v2h2v2h2v4h-2v2h-2v2h-4v-2h-2v-2h-2v-4h2v-2h2zM2441 233h4v2h2v2h2v4h-2v2h-2v2h-4v-2h-2v-2h-2v-4h2v-2h2zM2449 223h4v2h2v2h2v4h-2v2h-2v2h-4v-2h-2v-2h-2v-4h2v-2h2zM2457 281h4v2h2v2h2v4h-2v2h-2v2h-4v-2h-2v-2h-2v-4h2v-2h2zM2465 129h4v2h2v2h2v4h-2v2h-2v2h-4v-2h-2v-2h-2v-4h2v-2h2zM2473 310h4v2h2v2h2v4h-2v2h-2v2h-4v-2h-2v-2h-2v-4h2v-2h2zM2481 199h4v2h2v2h2v4h-2v2h-2v2h-4v-2h-2v-2h-2v-4h2v-2h2zM2489 321h4v2h2v2h2v4h-2v2h-2v2h-4v-2h-2v-2h-2v-4h2v-2h2zM2497 299h4v2h2v2h2v4h-2v2h-2v2h-4v-2h-2v-2h-2v-4h2v-2h2zM2505 239h4v2h2v2h2v4h-2v2h-2v2h-4v-2h-2v-2h-2v-4h2v-2h2zM2513 325h4v2h2v2h2v4h-2v2h-2v2h-4v-2h-2v-2h-2v-4h2v-2h2zM2521 219h4v2h2v2h2v4h-2v2h-2v2h-4v-2h-2v-2h-2v-4h2v-2h2zM2529 213h4v2h2v2h2v4h-2v2h-2v2h-4v-2h-2v-2h-2v-4h2v-2h2zM2537 210h4v2h2v2h2v4h-2v2h-2v2h-4v-2h-2v-2h-2v-4h2v-2h2zM2545 237h4v2h2v2h2v4h-2v2h-2v2h-4v-2h-2v-2h-2v-4h2v-2h2zM2553 193h4v2h2v2h2v4h-2v2h-2v2h-4v-2h-2v-2h-2v-4h2v-2h2zM2561 217h4v2h2v2h2v4h-2v2h-2v2h-4v-2h-2v-2h-2v-4h2v-2h2zM2569 127h4v2h2v2h2v4h-2v2h-2v2h-4v-2h-2v-2h-2v-4h2v-2h2zM2577 239h4v2h2v2h2v4h-2v2h-2v2h-4v-2h-2v-2h-2v-4h2v-2h2zM2585 317h4v2h2v2h2v4h-2v2h-2v2h-4v-2h-2v-2h-2v-4h2v-2h2zM2593 247h4v2h2v2h2v4h-2v2h-2v2h-4v-2h-2v-2h-2v-4h2v-2h2zM2601 274h4v2h2v2h2v4h-2v2h-2v2h-4v-2h-2v-2h-2v-4h2v-2h2zM2609 347h4v2h2v2h2v4h-2v2h-2v2h-4v-2h-2v-2h-2v-4h2v-2h2zM2617 333h4v2h2v2h2v4h-2v2h-2v2h-4v-2h-2v-2h-2v-4h2v-2h2zM2625 335h4v2h2v2h2v4h-2v2h-2v2h-4v-2h-2v-2h-2v-4h2v-2h2zM2633 205h4v2h2v2h2v4h-2v2h-2v2h-4v-2h-2v-2h-2v-4h2v-2h2zM2641 190h4v2h2v2h2v4h-2v2h-2v2h-4v-2h-2v-2h-2v-4h2v-2h2zM2649 139h4v2h2v2h2v4h-2v2h-2v2h-4v-2h-2v-2h-2v-4h2v-2h2zM2657 329h4v2h2v2h2v4h-2v2h-2v2h-4v-2h-2v-2h-2v-4h2v-2h2zM2665 401h4v2h2v2h2v4h-2v2h-2v2h-4v-2h-2v-2h-2v-4h2v-2h2zM2673 271h4v2h2v2h2v4h-2v2h-2v2h-4v-2h-2v-2h-2v-4h2v-2h2zM2681 375h4v2h2v2h2v4h-2v2h-2v2h-4v-2h-2v-2h-2v-4h2v-2h2zM2689 221h4v2h2v2h2v4h-2v2h-2v2h-4v-2h-2v-2h-2v-4h2v-2h2zM2697 317h4v2h2v2h2v4h-2v2h-2v2h-4v-2h-2v-2h-2v-4h2v-2h2zM2705 231h4v2h2v2h2v4h-2v2h-2v2h-4v-2h-2v-2h-2v-4h2v-2h2zM2713 241h4v2h2v2h2v4h-2v2h-2v2h-4v-2h-2v-2h-2v-4h2v-2h2zM2721 207h4v2h2v2h2v4h-2v2h-2v2h-4v-2h-2v-2h-2v-4h2v-2h2zM2729 271h4v2h2v2h2v4h-2v2h-2v2h-4v-2h-2v-2h-2v-4h2v-2h2zM2737 171h4v2h2v2h2v4h-2v2h-2v2h-4v-2h-2v-2h-2v-4h2v-2h2zM2745 287h4v2h2v2h2v4h-2v2h-2v2h-4v-2h-2v-2h-2v-4h2v-2h2zM2753 349h4v2h2v2h2v4h-2v2h-2v2h-4v-2h-2v-2h-2v-4h2v-2h2zM2761 297h4v2h2v2h2v4h-2v2h-2v2h-4v-2h-2v-2h-2v-4h2v-2h2zM2769 361h4v2h2v2h2v4h-2v2h-2v2h-4v-2h-2v-2h-2v-4h2v-2h2zM2777 276h4v2h2v2h2v4h-2v2h-2v2h-4v-2h-2v-2h-2v-4h2v-2h2zM2785 207h4v2h2v2h2v4h-2v2h-2v2h-4v-2h-2v-2h-2v-4h2v-2h2zM2793 269h4v2h2v2h2v4h-2v2h-2v2h-4v-2h-2v-2h-2v-4h2v-2h2zM2801 165h4v2h2v2h2v4h-2v2h-2v2h-4v-2h-2v-2h-2v-4h2v-2h2zM2809 305h4v2h2v2h2v4h-2v2h-2v2h-4v-2h-2v-2h-2v-4h2v-2h2zM2817 219h4v2h2v2h2v4h-2v2h-2v2h-4v-2h-2v-2h-2v-4h2v-2h2zM2825 255h4v2h2v2h2v4h-2v2h-2v2h-4v-2h-2v-2h-2v-4h2v-2h2zM2833 276h4v2h2v2h2v4h-2v2h-2v2h-4v-2h-2v-2h-2v-4h2v-2h2zM2841 233h4v2h2v2h2v4h-2v2h-2v2h-4v-2h-2v-2h-2v-4h2v-2h2zM2849 241h4v2h2v2h2v4h-2v2h-2v2h-4v-2h-2v-2h-2v-4h2v-2h2zM2857 247h4v2h2v2h2v4h-2v2h-2v2h-4v-2h-2v-2h-2v-4h2v-2h2zM2865 195h4v2h2v2h2v4h-2v2h-2v2h-4v-2h-2v-2h-2v-4h2v-2h2zM2873 240h4v2h2v2h2v4h-2v2h-2v2h-4v-2h-2v-2h-2v-4h2v-2h2z" fill="#ffa500"/><path d="M2033 189h4v2h2v2h2v4h-2v2h-2v2h-4v-2h-2v-2h-2v-4h2v-2h2z" fill="#ff0000"/><polyline points="1547,317.1 1555,351.3 1563,374.8 1571,326.7 1579,381.2 1587,443.3 1595,346.9 1603,242.7 1611,335 1619,397.1 1627,318.4 1635,323.4 1643,313.4 1651,211.1 1659,313.1 1667,403.1 1675,418.7 1683,319.1 1691,446.9 1699,321.4 1707,303.4 1715,343 1723,384.8 1731,417.4 1739,437 1747,306.8 1755,507 1763,400.8 1771,360.9 1779,346.6 1787,305.1 1795,345 1803,288.5 1811,387.1 1819,303.1 1827,298.5 1835,351.3 1843,390.8 1851,392.4 1859,408.7 1867,294.8 1875,331 1883,392.4 1891,405.1 1899,392.4 1907,239 1915,440.9 1923,286.8 1931,412.7 1939,288.5 1947,321 1955,442.9 1963,412.7 1971,380.8 1979,231 1987,278.9 1995,321 2003,216.4 2011,334.7 2019,380.8 2027,348.9 2035,276.9 2043,354.6 2051,507 2059,749 2067,788.6 2075,833.4 2083,754.7 2091,785 2099,810.5 2107,770.7 2115,749 2123,812.8 2131,802.9 2139,818.5 2147,768.7 2155,746.8 2163,792.6 2171,780.6 2179,726.5 2187,770.7 2195,780.6 2203,808.9 2211,796.9 2219,826.8 2227,780.6 2235,732.8 2243,768.7 2251,303.1 2259,407.1 2267,410.4 2275,368.9 2283,341.3 2291,342.6 2299,440.9 2307,368.9 2315,316.4 2323,430.6 2331,448.6 2339,475.8 2347,482.5 2355,382.5 2363,351.3 2371,346.6 2379,410.4 2387,556.9 2395,382.5 2403,352.9 2411,354.6 2419,308.4 2427,390.8 2435,329 2443,379.2 2451,336.7 2459,356.6 2467,388.8 2475,402.7 2483,286.8 2491,296.8 2499,348.9 2507,321 2515,346.6 2523,448.6 2531,351.3 2539,334.7 2547,446.9 2555,294.8 2563,292.8 2571,360.9 2579,296.8 2587,346.6 2595,472.8 2603,321 2611,298.5 2619,318.7 2627,574.8 2635,438.6 2643,380.8 2651,380.8 2659,417 2667,489 2675,379.2 2683,388.8 2691,460.9 2699,372.5 2707,414.7 2715,382.5 2723,306.8 2731,329 2739,360.9 2747,370.9 2755,387.1 2763,352.9 2771,313.1 2779,429 2787,282.5 2795,370.9 2803,316.4 2811,362.6 2819,384.8 2827,379.2 2835,343 2843,380.8 2851,333 2859,294.8 2867,351.3 2875,315.1" fill="none" stroke="#8080ff" stroke-width="2" shape-rendering="crispEdges"/><path d="M1545 311h4v2h2v2h2v4h-2v2h-2v2h-4v-2h-2v-2h-2v-4h2v-2h2zM1553 345h4v2h2v2h2v4h-2v2h-2v2h-4v-2h-2v-2h-2v-4h2v-2h2zM1561 369h4v2h2v2h2v4h-2v2h-2v2h-4v-2h-2v-2h-2v-4h2v-2h2zM1569 321h4v2h2v2h2v4h-2v2h-2v2h-4v-2h-2v-2h-2v-4h2v-2h2zM1577 375h4v2h2v2h2v4h-2v2h-2v2h-4v-2h-2v-2h-2v-4h2v-2h2zM1585 437h4v2h2v2h2v4h-2v2h-2v2h-4v-2h-2v-2h-2v-4h2v-2h2zM1593 341h4v2h2v2h2v4h-2v2h-2v2h-4v-2h-2v-2h-2v-4h2v-2h2zM1601 237h4v2h2v2h2v4h-2v2h-2v2h-4v-2h-2v-2h-2v-4h2v-2h2zM1609 329h4v2h2v2h2v4h-2v2h-2v2h-4v-2h-2v-2h-2v-4h2v-2h2zM1617 391h4v2h2v2h2v4h-2v2h-2v2h-4v-2h-2v-2h-2v-4h2v-2h2zM1625 312h4v2h2v2h2v4h-2v2h-2v2h-4v-2h-2v-2h-2v-4h2v-2h2zM1633 317h4v2h2v2h2v4h-2v2h-2v2h-4v-2h-2v-2h-2v-4h2v-2h2zM1641 307h4v2h2v2h2v4h-2v2h-2v2h-4v-2h-2v-2h-2v-4h2v-2h2zM1649 205h4v2h2v2h2v4h-2v2h-2v2h-4v-2h-2v-2h-2v-4h2v-2h2zM1657 307h4v2h2v2h2v4h-2v2h-2v2h-4v-2h-2v-2h-2v-4h2v-2h2zM1665 397h4v2h2v2h2v4h-2v2h-2v2h-4v-2h-2v-2h-2v-4h2v-2h2zM1673 413h4v2h2v2h2v4h-2v2h-2v2h-4v-2h-2v-2h-2v-4h2v-2h2zM1681 313h4v2h2v2h2v4h-2v2h-2v2h-4v-2h-2v-2h-2v-4h2v-2h2zM1689 441h4v2h2v2h2v4h-2v2h-2v2h-4v-2h-2v-2h-2v-4h2v-2h2zM1697 315h4v2h2v2h2v4h-2v2h-2v2h-4v-2h-2v-2h-2v-4h2v-2h2zM1705 297h4v2h2v2h2v4h-2v2h-2v2h-4v-2h-2v-2h-2v-4h2v-2h2zM1713 337h4v2h2v2h2v4h-2v2h-2v2h-4v-2h-2v-2h-2v-4h2v-2h2zM1721 379h4v2h2v2h2v4h-2v2h-2v2h-4v-2h-2v-2h-2v-4h2v-2h2zM1729 411h4v2h2v2h2v4h-2v2h-2v2h-4v-2h-2v-2h-2v-4h2v-2h2zM1737 431h4v2h2v2h2v4h-2v2h-2v2h-4v-2h-2v-2h-2v-4h2v-2h2zM1745 301h4v2h2v2h2v4h-2v2h-2v2h-4v-2h-2v-2h-2v-4h2v-2h2zM1753 501h4v2h2v2h2v4h-2v2h-2v2h-4v-2h-2v-2h-2v-4h2v-2h2zM1761 395h4v2h2v2h2v4h-2v2h-2v2h-4v-2h-2v-2h-2v-4h2v-2h2zM1769 355h4v2h2v2h2v4h-2v2h-2v2h-4v-2h-2v-2h-2v-4h2v-2h2zM1777 341h4v2h2v2h2v4h-2v2h-2v2h-4v-2h-2v-2h-2v-4h2v-2h2zM1785 299h4v2h2v2h2v4h-2v2h-2v2h-4v-2h-2v-2h-2v-4h2v-2h2zM1793 339h4v2h2v2h2v4h-2v2h-2v2h-4v-2h-2v-2h-2v-4h2v-2h2zM1801 282h4v2h2v2h2v4h-2v2h-2v2h-4v-2h-2v-2h-2v-4h2v-2h2zM1809 381h4v2h2v2h2v4h-2v2h-2v2h-4v-2h-2v-2h-2v-4h2v-2h2zM1817 297h4v2h2v2h2v4h-2v2h-2v2h-4v-2h-2v-2h-2v-4h2v-2h2zM1825 292h4v2h2v2h2v4h-2v2h-2v2h-4v-2h-2v-2h-2v-4h2v-2h2zM1833 345h4v2h2v2h2v4h-2v2h-2v2h-4v-2h-2v-2h-2v-4h2v-2h2zM1841 385h4v2h2v2h2v4h-2v2h-2v2h-4v-2h-2v-2h-2v-4h2v-2h2zM1849 386h4v2h2v2h2v4h-2v2h-2v2h-4v-2h-2v-2h-2v-4h2v-2h2zM1857 403h4v2h2v2h2v4h-2v2h-2v2h-4v-2h-2v-2h-2v-4h2v-2h2zM1865 289h4v2h2v2h2v4h-2v2h-2v2h-4v-2h-2v-2h-2v-4h2v-2h2zM1873 325h4v2h2v2h2v4h-2v2h-2v2h-4v-2h-2v-2h-2v-4h2v-2h2zM1881 386h4v2h2v2h2v4h-2v2h-2v2h-4v-2h-2v-2h-2v-4h2v-2h2zM1889 399h4v2h2v2h2v4h-2v2h-2v2h-4v-2h-2v-2h-2v-4h2v-2h2zM1897 386h4v2h2v2h2v4h-2v2h-2v2h-4v-2h-2v-2h-2v-4h2v-2h2zM1905 233h4v2h2v2h2v4h-2v2h-2v2h-4v-2h-2v-2h-2v-4h2v-2h2zM1913 435h4v2h2v2h2v4h-2v2h-2v2h-4v-2h-2v-2h-2v-4h2v-2h2zM1921 281h4v2h2v2h2v4h-2v2h-2v2h-4v-2h-2v-2h-2v-4h2v-2h2zM1929 407h4v2h2v2h2v4h-2v2h-2v2h-4v-2h-2v-2h-2v-4h2v-2h2zM1937 282h4v2h2v2h2v4h-2v2h-2v2h-4v-2h-2v-2h-2v-4h2v-2h2zM1945 315h4v2h2v2h2v4h-2v2h-2v2h-4v-2h-2v-2h-2v-4h2v-2h2zM1953 437h4v2h2v2h2v4h-2v2h-2v2h-4v-2h-2v-2h-2v-4h2v-2h2zM1961 407h4v2h2v2h2v4h-2v2h-2v2h-4v-2h-2v-2h-2v-4h2v-2h2zM1969 375h4v2h2v2h2v4h-2v2h-2v2h-4v-2h-2v-2h-2v-4h2v-2h2zM1977 225h4v2h2v2h2v4h-2v2h-2v2h-4v-2h-2v-2h-2v-4h2v-2h2zM1985 273h4v2h2v2h2v4h-2v2h-2v2h-4v-2h-2v-2h-2v-4h2v-2h2zM1993 315h4v2h2v2h2v4h-2v2h-2v2h-4v-2h-2v-2h-2v-4h2v-2h2zM2001 210h4v2h2v2h2v4h-2v2h-2v2h-4v-2h-2v-2h-2v-4h2v-2h2zM2009 329h4v2h2v2h2v4h-2v2h-2v2h-4v-2h-2v-2h-2v-4h2v-2h2zM2017 375h4v2h2v2h2v4h-2v2h-2v2h-4v-2h-2v-2h-2v-4h2v-2h2zM2025 343h4v2h2v2h2v4h-2v2h-2v2h-4v-2h-2v-2h-2v-4h2v-2h2zM2041 349h4v2h2v2h2v4h-2v2h-2v2h-4v-2h-2v-2h-2v-4h2v-2h2zM2049 501h4v2h2v2h2v4h-2v2h-2v2h-4v-2h-2v-2h-2v-4h2v-2h2zM2057 743h4v2h2v2h2v4h-2v2h-2v2h-4v-2h-2v-2h-2v-4h2v-2h2zM2065 783h4v2h2v2h2v4h-2v2h-2v2h-4v-2h-2v-2h-2v-4h2v-2h2zM2073 827h4v2h2v2h2v4h-2v2h-2v2h-4v-2h-2v-2h-2v-4h2v-2h2zM2081 749h4v2h2v2h2v4h-2v2h-2v2h-4v-2h-2v-2h-2v-4h2v-2h2zM2089 779h4v2h2v2h2v4h-2v2h-2v2h-4v-2h-2v-2h-2v-4h2v-2h2zM2097 804h4v2h2v2h2v4h-2v2h-2v2h-4v-2h-2v-2h-2v-4h2v-2h2zM2105 765h4v2h2v2h2v4h-2v2h-2v2h-4v-2h-2v-2h-2v-4h2v-2h2zM2113 743h4v2h2v2h2v4h-2v2h-2v2h-4v-2h-2v-2h-2v-4h2v-2h2zM2121 807h4v2h2v2h2v4h-2v2h-2v2h-4v-2h-2v-2h-2v-4h2v-2h2zM2129 797h4v2h2v2h2v4h-2v2h-2v2h-4v-2h-2v-2h-2v-4h2v-2h2zM2137 812h4v2h2v2h2v4h-2v2h-2v2h-4v-2h-2v-2h-2v-4h2v-2h2zM2145 763h4v2h2v2h2v4h-2v2h-2v2h-4v-2h-2v-2h-2v-4h2v-2h2zM2153 741h4v2h2v2h2v4h-2v2h-2v2h-4v-2h-2v-2h-2v-4h2v-2h2zM2161 787h4v2h2v2h2v4h-2v2h-2v2h-4v-2h-2v-2h-2v-4h2v-2h2zM2169 775h4v2h2v2h2v4h-2v2h-2v2h-4v-2h-2v-2h-2v-4h2v-2h2zM2177 720h4v2h2v2h2v4h-2v2h-2v2h-4v-2h-2v-2h-2v-4h2v-2h2zM2185 765h4v2h2v2h2v4h-2v2h-2v2h-4v-2h-2v-2h-2v-4h2v-2h2zM2193 775h4v2h2v2h2v4h-2v2h-2v2h-4v-2h-2v-2h-2v-4h2v-2h2zM2201 803h4v2h2v2h2v4h-2v2h-2v2h-4v-2h-2v-2h-2v-4h2v-2h2zM2209 791h4v2h2v2h2v4h-2v2h-2v2h-4v-2h-2v-2h-2v-4h2v-2h2zM2217 821h4v2h2v2h2v4h-2v2h-2v2h-4v-2h-2v-2h-2v-4h2v-2h2zM2225 775h4v2h2v2h2v4h-2v2h-2v2h-4v-2h-2v-2h-2v-4h2v-2h2zM2233 727h4v2h2v2h2v4h-2v2h-2v2h-4v-2h-2v-2h-2v-4h2v-2h2zM2241 763h4v2h2v2h2v4h-2v2h-2v2h-4v-2h-2v-2h-2v-4h2v-2h2zM2249 297h4v2h2v2h2v4h-2v2h-2v2h-4v-2h-2v-2h-2v-4h2v-2h2zM2257 401h4v2h2v2h2v4h-2v2h-2v2h-4v-2h-2v-2h-2v-4h2v-2h2zM2265 404h4v2h2v2h2v4h-2v2h-2v2h-4v-2h-2v-2h-2v-4h2v-2h2zM2273 363h4v2h2v2h2v4h-2v2h-2v2h-4v-2h-2v-2h-2v-4h2v-2h2zM2281 335h4v2h2v2h2v4h-2v2h-2v2h-4v-2h-2v-2h-2v-4h2v-2h2zM2289 337h4v2h2v2h2v4h-2v2h-2v2h-4v-2h-2v-2h-2v-4h2v-2h2zM2297 435h4v2h2v2h2v4h-2v2h-2v2h-4v-2h-2v-2h-2v-4h2v-2h2zM2305 363h4v2h2v2h2v4h-2v2h-2v2h-4v-2h-2v-2h-2v-4h2v-2h2zM2313 310h4v2h2v2h2v4h-2v2h-2v2h-4v-2h-2v-2h-2v-4h2v-2h2zM2321 425h4v2h2v2h2v4h-2v2h-2v2h-4v-2h-2v-2h-2v-4h2v-2h2zM2329 443h4v2h2v2h2v4h-2v2h-2v2h-4v-2h-2v-2h-2v-4h2v-2h2zM2337 470h4v2h2v2h2v4h-2v2h-2v2h-4v-2h-2v-2h-2v-4h2v-2h2zM2345 476h4v2h2v2h2v4h-2v2h-2v2h-4v-2h-2v-2h-2v-4h2v-2h2zM2353 376h4v2h2v2h2v4h-2v2h-2v2h-4v-2h-2v-2h-2v-4h2v-2h2zM2361 345h4v2h2v2h2v4h-2v2h-2v2h-4v-2h-2v-2h-2v-4h2v-2h2zM2369 341h4v2h2v2h2v4h-2v2h-2v2h-4v-2h-2v-2h-2v-4h2v-2h2zM2377 404h4v2h2v2h2v4h-2v2h-2v2h-4v-2h-2v-2h-2v-4h2v-2h2zM2385 551h4v2h2v2h2v4h-2v2h-2v2h-4v-2h-2v-2h-2v-4h2v-2h2zM2393 376h4v2h2v2h2v4h-2v2h-2v2h-4v-2h-2v-2h-2v-4h2v-2h2zM2401 347h4v2h2v2h2v4h-2v2h-2v2h-4v-2h-2v-2h-2v-4h2v-2h2zM2409 349h4v2h2v2h2v4h-2v2h-2v2h-4v-2h-2v-2h-2v-4h2v-2h2zM2417 302h4v2h2v2h2v4h-2v2h-2v2h-4v-2h-2v-2h-2v-4h2v-2h2zM2425 385h4v2h2v2h2v4h-2v2h-2v2h-4v-2h-2v-2h-2v-4h2v-2h2zM2433 323h4v2h2v2h2v4h-2v2h-2v2h-4v-2h-2v-2h-2v-4h2v-2h2zM2441 373h4v2h2v2h2v4h-2v2h-2v2h-4v-2h-2v-2h-2v-4h2v-2h2zM2449 331h4v2h2v2h2v4h-2v2h-2v2h-4v-2h-2v-2h-2v-4h2v-2h2zM2457 351h4v2h2v2h2v4h-2v2h-2v2h-4v-2h-2v-2h-2v-4h2v-2h2zM2465 383h4v2h2v2h2v4h-2v2h-2v2h-4v-2h-2v-2h-2v-4h2v-2h2zM2473 397h4v2h2v2h2v4h-2v2h-2v2h-4v-2h-2v-2h-2v-4h2v-2h2zM2481 281h4v2h2v2h2v4h-2v2h-2v2h-4v-2h-2v-2h-2v-4h2v-2h2zM2489 291h4v2h2v2h2v4h-2v2h-2v2h-4v-2h-2v-2h-2v-4h2v-2h2zM2497 343h4v2h2v2h2v4h-2v2h-2v2h-4v-2h-2v-2h-2v-4h2v-2h2zM2505 315h4v2h2v2h2v4h-2v2h-2v2h-4v-2h-2v-2h-2v-4h2v-2h2zM2513 341h4v2h2v2h2v4h-2v2h-2v2h-4v-2h-2v-2h-2v-4h2v-2h2zM2521 443h4v2h2v2h2v4h-2v2h-2v2h-4v-2h-2v-2h-2v-4h2v-2h2zM2529 345h4v2h2v2h2v4h-2v2h-2v2h-4v-2h-2v-2h-2v-4h2v-2h2zM2537 329h4v2h2v2h2v4h-2v2h-2v2h-4v-2h-2v-2h-2v-4h2v-2h2zM2545 441h4v2h2v2h2v4h-2v2h-2v2h-4v-2h-2v-2h-2v-4h2v-2h2zM2553 289h4v2h2v2h2v4h-2v2h-2v2h-4v-2h-2v-2h-2v-4h2v-2h2zM2561 287h4v2h2v2h2v4h-2v2h-2v2h-4v-2h-2v-2h-2v-4h2v-2h2zM2569 355h4v2h2v2h2v4h-2v2h-2v2h-4v-2h-2v-2h-2v-4h2v-2h2zM2577 291h4v2h2v2h2v4h-2v2h-2v2h-4v-2h-2v-2h-2v-4h2v-2h2zM2585 341h4v2h2v2h2v4h-2v2h-2v2h-4v-2h-2v-2h-2v-4h2v-2h2zM2593 467h4v2h2v2h2v4h-2v2h-2v2h-4v-2h-2v-2h-2v-4h2v-2h2zM2601 315h4v2h2v2h2v4h-2v2h-2v2h-4v-2h-2v-2h-2v-4h2v-2h2zM2609 292h4v2h2v2h2v4h-2v2h-2v2h-4v-2h-2v-2h-2v-4h2v-2h2zM2617 313h4v2h2v2h2v4h-2v2h-2v2h-4v-2h-2v-2h-2v-4h2v-2h2zM2625 569h4v2h2v2h2v4h-2v2h-2v2h-4v-2h-2v-2h-2v-4h2v-2h2zM2633 433h4v2h2v2h2v4h-2v2h-2v2h-4v-2h-2v-2h-2v-4h2v-2h2zM2641 375h4v2h2v2h2v4h-2v2h-2v2h-4v-2h-2v-2h-2v-4h2v-2h2zM2649 375h4v2h2v2h2v4h-2v2h-2v2h-4v-2h-2v-2h-2v-4h2v-2h2zM2657 411h4v2h2v2h2v4h-2v2h-2v2h-4v-2h-2v-2h-2v-4h2v-2h2zM2665 483h4v2h2v2h2v4h-2v2h-2v2h-4v-2h-2v-2h-2v-4h2v-2h2zM2673 373h4v2h2v2h2v4h-2v2h-2v2h-4v-2h-2v-2h-2v-4h2v-2h2zM2681 383h4v2h2v2h2v4h-2v2h-2v2h-4v-2h-2v-2h-2v-4h2v-2h2zM2689 455h4v2h2v2h2v4h-2v2h-2v2h-4v-2h-2v-2h-2v-4h2v-2h2zM2697 366h4v2h2v2h2v4h-2v2h-2v2h-4v-2h-2v-2h-2v-4h2v-2h2zM2705 409h4v2h2v2h2v4h-2v2h-2v2h-4v-2h-2v-2h-2v-4h2v-2h2zM2713 376h4v2h2v2h2v4h-2v2h-2v2h-4v-2h-2v-2h-2v-4h2v-2h2zM2721 301h4v2h2v2h2v4h-2v2h-2v2h-4v-2h-2v-2h-2v-4h2v-2h2zM2729 323h4v2h2v2h2v4h-2v2h-2v2h-4v-2h-2v-2h-2v-4h2v-2h2zM2737 355h4v2h2v2h2v4h-2v2h-2v2h-4v-2h-2v-2h-2v-4h2v-2h2zM2745 365h4v2h2v2h2v4h-2v2h-2v2h-4v-2h-2v-2h-2v-4h2v-2h2zM2753 381h4v2h2v2h2v4h-2v2h-2v2h-4v-2h-2v-2h-2v-4h2v-2h2zM2761 347h4v2h2v2h2v4h-2v2h-2v2h-4v-2h-2v-2h-2v-4h2v-2h2zM2769 307h4v2h2v2h2v4h-2v2h-2v2h-4v-2h-2v-2h-2v-4h2v-2h2zM2777 423h4v2h2v2h2v4h-2v2h-2v2h-4v-2h-2v-2h-2v-4h2v-2h2zM2785 276h4v2h2v2h2v4h-2v2h-2v2h-4v-2h-2v-2h-2v-4h2v-2h2zM2793 365h4v2h2v2h2v4h-2v2h-2v2h-4v-2h-2v-2h-2v-4h2v-2h2zM2801 310h4v2h2v2h2v4h-2v2h-2v2h-4v-2h-2v-2h-2v-4h2v-2h2zM2809 357h4v2h2v2h2v4h-2v2h-2v2h-4v-2h-2v-2h-2v-4h2v-2h2zM2817 379h4v2h2v2h2v4h-2v2h-2v2h-4v-2h-2v-2h-2v-4h2v-2h2zM2825 373h4v2h2v2h2v4h-2v2h-2v2h-4v-2h-2v-2h-2v-4h2v-2h2zM2833 337h4v2h2v2h2v4h-2v2h-2v2h-4v-2h-2v-2h-2v-4h2v-2h2zM2841 375h4v2h2v2h2v4h-2v2h-2v2h-4v-2h-2v-2h-2v-4h2v-2h2zM2849 327h4v2h2v2h2v4h-2v2h-2v2h-4v-2h-2v-2h-2v-4h2v-2h2zM2857 289h4v2h2v2h2v4h-2v2h-2v2h-4v-2h-2v-2h-2v-4h2v-2h2zM2865 345h4v2h2v2h2v4h-2v2h-2v2h-4v-2h-2v-2h-2v-4h2v-2h2zM2873 309h4v2h2v2h2v4h-2v2h-2v2h-4v-2h-2v-2h-2v-4h2v-2h2z" fill="#0000ff"/><path d="M2033 271h4v2h2v2h2v4h-2v2h-2v2h-4v-2h-2v-2h-2v-4h2v-2h2z" fill="#ff0000"/><rect x="1430" y="923" width="1470" height="2" fill="#ffffff"/><text x="1446.2" y="952.5" font-size="24" fill="#000" textLength="87.2" lengthAdjust="spacingAndGlyphs">Current-</text><text x="1463.5" y="983.8" font-size="24" fill="#000" textLength="62.1" lengthAdjust="spacingAndGlyphs">Frame</text><text x="1567.8" y="952.5" font-size="24" fill="#000" textLength="93.6" lengthAdjust="spacingAndGlyphs">Luminous</text><text x="1567.0" y="983.8" font-size="24" fill="#000" textLength="86.0" lengthAdjust="spacingAndGlyphs">Intensity</text><rect x="1447" y="998" width="96" height="37.5" fill="#ffffff"/><rect x="1447" y="998" width="94" height="35.5" fill="#a0a0a0"/><rect x="1449" y="1000" width="92" height="33.5" fill="#e3e3e3"/><rect x="1449" y="1000" width="90" height="31.5" fill="#696969"/><rect x="1451" y="1002" width="88" height="29.5" fill="#ffffff"/><text x="1454.6" y="1021.6" font-size="23" fill="#000" textLength="48.6" lengthAdjust="spacingAndGlyphs">585.0</text><rect x="1559" y="998" width="112" height="37.5" fill="#ffffff"/><rect x="1559" y="998" width="110" height="35.5" fill="#a0a0a0"/><rect x="1561" y="1000" width="108" height="33.5" fill="#e3e3e3"/><rect x="1561" y="1000" width="106" height="31.5" fill="#696969"/><rect x="1563" y="1002" width="104" height="29.5" fill="#ffffff"/><text x="1567.8" y="1021.6" font-size="23" fill="#000" textLength="60.1" lengthAdjust="spacingAndGlyphs">1541.2</text><rect x="1686" y="937" width="319" height="36" fill="#f6f6f6"/><rect x="1686" y="937" width="34" height="36" fill="#696969"/><rect x="1686" y="937" width="32" height="34" fill="#ffffff"/><rect x="1688" y="939" width="30" height="32" fill="#a0a0a0"/><rect x="1688" y="939" width="28" height="30" fill="#f0f0f0"/><polygon points="1704,949 1704,961 1698,955" fill="#000"/><rect x="1971" y="937" width="34" height="36" fill="#696969"/><rect x="1971" y="937" width="32" height="34" fill="#ffffff"/><rect x="1973" y="939" width="30" height="32" fill="#a0a0a0"/><rect x="1973" y="939" width="28" height="30" fill="#f0f0f0"/><polygon points="1985,949 1985,961 1991,955" fill="#000"/><rect x="1813" y="937" width="34" height="36" fill="#696969"/><rect x="1813" y="937" width="32" height="34" fill="#ffffff"/><rect x="1815" y="939" width="30" height="32" fill="#a0a0a0"/><rect x="1815" y="939" width="28" height="30" fill="#f0f0f0"/><rect x="1687" y="987.5" width="82" height="48.5" fill="#696969"/><rect x="1687" y="987.5" width="80" height="46.5" fill="#ffffff"/><rect x="1689" y="989.5" width="78" height="44.5" fill="#a0a0a0"/><rect x="1689" y="989.5" width="76" height="42.5" fill="#f0f0f0"/><text x="1694.0" y="1018.8" font-size="24" fill="#000" textLength="67.7" lengthAdjust="spacingAndGlyphs">-10Sec</text><rect x="1775" y="987.5" width="66" height="48.5" fill="#696969"/><rect x="1775" y="987.5" width="64" height="46.5" fill="#ffffff"/><rect x="1777" y="989.5" width="62" height="44.5" fill="#a0a0a0"/><rect x="1777" y="989.5" width="60" height="42.5" fill="#f0f0f0"/><text x="1780.0" y="1018.8" font-size="24" fill="#000" textLength="55.0" lengthAdjust="spacingAndGlyphs">-1Sec</text><rect x="1847" y="987.5" width="70" height="48.5" fill="#696969"/><rect x="1847" y="987.5" width="68" height="46.5" fill="#ffffff"/><rect x="1849" y="989.5" width="66" height="44.5" fill="#a0a0a0"/><rect x="1849" y="989.5" width="64" height="42.5" fill="#f0f0f0"/><text x="1852.6" y="1018.8" font-size="24" fill="#000" textLength="60.9" lengthAdjust="spacingAndGlyphs">+1Sec</text><rect x="1923" y="987.5" width="82" height="48.5" fill="#696969"/><rect x="1923" y="987.5" width="80" height="46.5" fill="#ffffff"/><rect x="1925" y="989.5" width="78" height="44.5" fill="#a0a0a0"/><rect x="1925" y="989.5" width="76" height="42.5" fill="#f0f0f0"/><text x="1928.9" y="1018.8" font-size="24" fill="#000" textLength="72.6" lengthAdjust="spacingAndGlyphs">+10Sec</text><text x="2018.3" y="967.9" font-size="24" fill="#000" textLength="54.5" lengthAdjust="spacingAndGlyphs">Scale</text><rect x="2095" y="933.5" width="45" height="37.5" fill="#ffffff"/><rect x="2095" y="933.5" width="43" height="35.5" fill="#a0a0a0"/><rect x="2097" y="935.5" width="41" height="33.5" fill="#e3e3e3"/><rect x="2097" y="935.5" width="39" height="31.5" fill="#696969"/><rect x="2099" y="937.5" width="37" height="29.5" fill="#ffffff"/><text x="2102.0" y="957.3" font-size="23" fill="#000" textLength="9.5" lengthAdjust="spacingAndGlyphs">2</text><rect x="2143" y="931" width="33.6" height="23.3" fill="#696969"/><rect x="2143" y="931" width="31.6" height="21.3" fill="#ffffff"/><rect x="2145" y="933" width="29.6" height="19.3" fill="#a0a0a0"/><rect x="2145" y="933" width="27.6" height="17.3" fill="#f0f0f0"/><polygon points="2153.8,944.15 2163.8,944.15 2158.8,939.15" fill="#000"/><rect x="2143" y="954.3" width="33.6" height="23.3" fill="#696969"/><rect x="2143" y="954.3" width="31.6" height="21.3" fill="#ffffff"/><rect x="2145" y="956.3" width="29.6" height="19.3" fill="#a0a0a0"/><rect x="2145" y="956.3" width="27.6" height="17.3" fill="#f0f0f0"/><polygon points="2153.8,962.45 2163.8,962.45 2158.8,967.45" fill="#000"/><text x="2023.9" y="1016.0" font-size="24" fill="#000" textLength="67.1" lengthAdjust="spacingAndGlyphs">Radius</text><rect x="2095" y="996" width="45" height="39" fill="#ffffff"/><rect x="2095" y="996" width="43" height="37" fill="#a0a0a0"/><rect x="2097" y="998" width="41" height="35" fill="#e3e3e3"/><rect x="2097" y="998" width="39" height="33" fill="#696969"/><rect x="2099" y="1000" width="37" height="31" fill="#ffffff"/><text x="2102.0" y="1021.6" font-size="23" fill="#000" textLength="9.5" lengthAdjust="spacingAndGlyphs">3</text><rect x="2143" y="995" width="33.6" height="23" fill="#696969"/><rect x="2143" y="995" width="31.6" height="21" fill="#ffffff"/><rect x="2145" y="997" width="29.6" height="19" fill="#a0a0a0"/><rect x="2145" y="997" width="27.6" height="17" fill="#f0f0f0"/><polygon points="2153.8,1008 2163.8,1008 2158.8,1003" fill="#000"/><rect x="2143" y="1018" width="33.6" height="23" fill="#696969"/><rect x="2143" y="1018" width="31.6" height="21" fill="#ffffff"/><rect x="2145" y="1020" width="29.6" height="19" fill="#a0a0a0"/><rect x="2145" y="1020" width="27.6" height="17" fill="#f0f0f0"/><polygon points="2153.8,1026 2163.8,1026 2158.8,1031" fill="#000"/><rect x="1447" y="1055" width="25" height="24" fill="#ffffff"/><rect x="1447" y="1055" width="23" height="22" fill="#a0a0a0"/><rect x="1449" y="1057" width="21" height="20" fill="#e3e3e3"/><rect x="1449" y="1057" width="19" height="18" fill="#696969"/><rect x="1451" y="1059" width="17" height="16" fill="#ffffff"/><path d="M1452.5 1066 l5 5 l9 -10" stroke="#000" stroke-width="4.5" fill="none"/><text x="1482.3" y="1074.1" font-size="24" fill="#000" textLength="290.9" lengthAdjust="spacingAndGlyphs">Show Image of Clicked point</text><rect x="1447" y="1087" width="25" height="24" fill="#ffffff"/><rect x="1447" y="1087" width="23" height="22" fill="#a0a0a0"/><rect x="1449" y="1089" width="21" height="20" fill="#e3e3e3"/><rect x="1449" y="1089" width="19" height="18" fill="#696969"/><rect x="1451" y="1091" width="17" height="16" fill="#ffffff"/><text x="1483.9" y="1106.3" font-size="24" fill="#000" textLength="291.3" lengthAdjust="spacingAndGlyphs">Reproduce Aperture Position</text><rect x="1795" y="1052" width="146" height="48" fill="#000"/><rect x="1797" y="1054" width="142" height="44" fill="#696969"/><rect x="1797" y="1054" width="140" height="42" fill="#ffffff"/><rect x="1799" y="1056" width="138" height="40" fill="#a0a0a0"/><rect x="1799" y="1056" width="136" height="38" fill="#f0f0f0"/><rect x="1803" y="1060" width="129" height="32" fill="none" stroke="#000" stroke-width="1.5" stroke-dasharray="2 2"/><text x="1807.9" y="1082.5" font-size="24" fill="#000" textLength="117.3" lengthAdjust="spacingAndGlyphs">Save Image</text><rect x="1951" y="1052" width="236" height="48" fill="#696969"/><rect x="1951" y="1052" width="234" height="46" fill="#ffffff"/><rect x="1953" y="1054" width="232" height="44" fill="#a0a0a0"/><rect x="1953" y="1054" width="230" height="42" fill="#f0f0f0"/><text x="1975.8" y="1082.5" font-size="24" fill="#000" textLength="188.2" lengthAdjust="spacingAndGlyphs">Copy to ClipBoard</text><rect x="1911" y="1116" width="242" height="54.5" fill="#696969"/><rect x="1911" y="1116" width="240" height="52.5" fill="#ffffff"/><rect x="1913" y="1118" width="238" height="50.5" fill="#a0a0a0"/><rect x="1913" y="1118" width="236" height="48.5" fill="#f0f0f0"/><text x="1928.3" y="1149.6" font-size="26" font-weight="bold" stroke="#000" stroke-width="0.5" fill="#000" textLength="206.8" lengthAdjust="spacingAndGlyphs">Lunar Identification</text><rect x="2172" y="1116" width="336.7" height="54.5" fill="#696969"/><rect x="2172" y="1116" width="334.7" height="52.5" fill="#ffffff"/><rect x="2174" y="1118" width="332.7" height="50.5" fill="#a0a0a0"/><rect x="2174" y="1118" width="330.7" height="48.5" fill="#f0f0f0"/><text x="2206.0" y="1150.3" font-size="26" font-weight="bold" stroke="#000" stroke-width="0.5" fill="#000" textLength="263.5" lengthAdjust="spacing">Diffraction Analysis</text><rect x="2519.4" y="1116" width="209.3" height="54.5" fill="#696969"/><rect x="2519.4" y="1116" width="207.3" height="52.5" fill="#ffffff"/><rect x="2521.4" y="1118" width="205.3" height="50.5" fill="#a0a0a0"/><rect x="2521.4" y="1118" width="203.3" height="48.5" fill="#f0f0f0"/><text x="2543.8" y="1150.3" font-size="26" font-weight="bold" stroke="#000" stroke-width="0.5" fill="#000" textLength="159.7" lengthAdjust="spacing">Make Report</text><rect x="2188" y="936" width="11" height="1.5" fill="#a0a0a0"/><rect x="2188" y="937.5" width="11" height="1.5" fill="#ffffff"/><rect x="2273" y="936" width="13.5" height="1.5" fill="#a0a0a0"/><rect x="2273" y="937.5" width="13.5" height="1.5" fill="#ffffff"/><rect x="2188" y="1094.6" width="98.5" height="1.5" fill="#a0a0a0"/><rect x="2188" y="1096.1" width="98.5" height="1.5" fill="#ffffff"/><rect x="2188" y="936" width="1.5" height="161.6" fill="#a0a0a0"/><rect x="2189.5" y="936" width="1.5" height="161.6" fill="#ffffff"/><rect x="2283.5" y="936" width="1.5" height="161.6" fill="#a0a0a0"/><rect x="2285" y="936" width="1.5" height="161.6" fill="#ffffff"/><text x="2203.3" y="944.3" font-size="24" fill="#000" textLength="66.7" lengthAdjust="spacing">Y Axis</text><text x="2200.4" y="968.1" font-size="24" fill="#000" textLength="32.8" lengthAdjust="spacingAndGlyphs">Min</text><text x="2240.5" y="968.1" font-size="24" fill="#000" textLength="39.0" lengthAdjust="spacingAndGlyphs">Max</text><rect x="2197.6" y="972" width="33.4" height="114" fill="#f6f6f6"/><rect x="2197.6" y="972" width="33.4" height="34" fill="#696969"/><rect x="2197.6" y="972" width="31.4" height="32" fill="#ffffff"/><rect x="2199.6" y="974" width="29.4" height="30" fill="#a0a0a0"/><rect x="2199.6" y="974" width="27.4" height="28" fill="#f0f0f0"/><polygon points="2207.3,991 2219.3,991 2213.3,985" fill="#000"/><rect x="2197.6" y="1011" width="33.4" height="34" fill="#696969"/><rect x="2197.6" y="1011" width="31.4" height="32" fill="#ffffff"/><rect x="2199.6" y="1013" width="29.4" height="30" fill="#a0a0a0"/><rect x="2199.6" y="1013" width="27.4" height="28" fill="#f0f0f0"/><rect x="2197.6" y="1052" width="33.4" height="34" fill="#696969"/><rect x="2197.6" y="1052" width="31.4" height="32" fill="#ffffff"/><rect x="2199.6" y="1054" width="29.4" height="30" fill="#a0a0a0"/><rect x="2199.6" y="1054" width="27.4" height="28" fill="#f0f0f0"/><polygon points="2207.3,1066 2219.3,1066 2213.3,1072" fill="#000"/><rect x="2241.6" y="972" width="35.4" height="114" fill="#f6f6f6"/><rect x="2241.6" y="972" width="35.4" height="34" fill="#696969"/><rect x="2241.6" y="972" width="33.4" height="32" fill="#ffffff"/><rect x="2243.6" y="974" width="31.4" height="30" fill="#a0a0a0"/><rect x="2243.6" y="974" width="29.4" height="28" fill="#f0f0f0"/><polygon points="2252.3,991 2264.3,991 2258.3,985" fill="#000"/><rect x="2241.6" y="1011" width="35.4" height="34" fill="#696969"/><rect x="2241.6" y="1011" width="33.4" height="32" fill="#ffffff"/><rect x="2243.6" y="1013" width="31.4" height="30" fill="#a0a0a0"/><rect x="2243.6" y="1013" width="29.4" height="28" fill="#f0f0f0"/><rect x="2241.6" y="1052" width="35.4" height="34" fill="#696969"/><rect x="2241.6" y="1052" width="33.4" height="32" fill="#ffffff"/><rect x="2243.6" y="1054" width="31.4" height="30" fill="#a0a0a0"/><rect x="2243.6" y="1054" width="29.4" height="28" fill="#f0f0f0"/><polygon points="2252.3,1066 2264.3,1066 2258.3,1072" fill="#000"/><rect x="2291.5" y="936" width="12.5" height="1.5" fill="#a0a0a0"/><rect x="2291.5" y="937.5" width="12.5" height="1.5" fill="#ffffff"/><rect x="2351" y="936" width="61.6" height="1.5" fill="#a0a0a0"/><rect x="2351" y="937.5" width="61.6" height="1.5" fill="#ffffff"/><rect x="2291.5" y="1039" width="121.1" height="1.5" fill="#a0a0a0"/><rect x="2291.5" y="1040.5" width="121.1" height="1.5" fill="#ffffff"/><rect x="2291.5" y="936" width="1.5" height="106" fill="#a0a0a0"/><rect x="2293" y="936" width="1.5" height="106" fill="#ffffff"/><rect x="2409.6" y="936" width="1.5" height="106" fill="#a0a0a0"/><rect x="2411.1" y="936" width="1.5" height="106" fill="#ffffff"/><text x="2308.4" y="944.3" font-size="24" fill="#000" textLength="39.2" lengthAdjust="spacingAndGlyphs">Line</text><rect x="2307.5" y="952.7" width="23.5" height="21.3" fill="#ffffff"/><rect x="2307.5" y="952.7" width="21.5" height="19.3" fill="#a0a0a0"/><rect x="2309.5" y="954.7" width="19.5" height="17.3" fill="#e3e3e3"/><rect x="2309.5" y="954.7" width="17.5" height="15.3" fill="#696969"/><rect x="2311.5" y="956.7" width="15.5" height="13.3" fill="#ffffff"/><path d="M2312.25 962.35 l5 5 l9 -10" stroke="#000" stroke-width="4.5" fill="none"/><text x="2344.8" y="970.0" font-size="24" fill="#000" textLength="42.9" lengthAdjust="spacingAndGlyphs">Axis</text><rect x="2307.5" y="980.7" width="23.5" height="22.3" fill="#ffffff"/><rect x="2307.5" y="980.7" width="21.5" height="20.3" fill="#a0a0a0"/><rect x="2309.5" y="982.7" width="19.5" height="18.3" fill="#e3e3e3"/><rect x="2309.5" y="982.7" width="17.5" height="16.3" fill="#696969"/><rect x="2311.5" y="984.7" width="15.5" height="14.3" fill="#ffffff"/><path d="M2312.25 990.85 l5 5 l9 -10" stroke="#000" stroke-width="4.5" fill="none"/><text x="2344.8" y="999.5" font-size="24" fill="#000" textLength="44.8" lengthAdjust="spacingAndGlyphs">Data</text><rect x="2307.5" y="1006" width="91.1" height="28" fill="#696969"/><rect x="2307.5" y="1006" width="89.1" height="26" fill="#ffffff"/><rect x="2309.5" y="1008" width="87.1" height="24" fill="#a0a0a0"/><rect x="2309.5" y="1008" width="85.1" height="22" fill="#f0f0f0"/><text x="2320.4" y="1026.1" font-size="24" fill="#000" textLength="62.8" lengthAdjust="spacingAndGlyphs">Hilight</text><rect x="2419.6" y="936" width="12.4" height="1.5" fill="#a0a0a0"/><rect x="2419.6" y="937.5" width="12.4" height="1.5" fill="#ffffff"/><rect x="2495" y="936" width="35.6" height="1.5" fill="#a0a0a0"/><rect x="2495" y="937.5" width="35.6" height="1.5" fill="#ffffff"/><rect x="2419.6" y="1039" width="111" height="1.5" fill="#a0a0a0"/><rect x="2419.6" y="1040.5" width="111" height="1.5" fill="#ffffff"/><rect x="2419.6" y="936" width="1.5" height="106" fill="#a0a0a0"/><rect x="2421.1" y="936" width="1.5" height="106" fill="#ffffff"/><rect x="2527.6" y="936" width="1.5" height="106" fill="#a0a0a0"/><rect x="2529.1" y="936" width="1.5" height="106" fill="#ffffff"/><text x="2435.9" y="946.2" font-size="24" fill="#000" textLength="55.5" lengthAdjust="spacingAndGlyphs">Width</text><circle cx="2448.5" cy="973" r="9" fill="#fff"/><path d="M2440.72 980.777 A11 11 0 0 1 2456.28 965.223" stroke="#a0a0a0" stroke-width="2" fill="none"/><path d="M2442.14 979.363 A9 9 0 0 1 2454.86 966.637" stroke="#696969" stroke-width="2" fill="none"/><path d="M2440.72 980.777 A11 11 0 0 0 2456.28 965.223" stroke="#ffffff" stroke-width="2" fill="none"/><circle cx="2448.5" cy="973" r="4.5" fill="#000"/><text x="2472.3" y="980.7" font-size="24" fill="#000" textLength="37.0" lengthAdjust="spacingAndGlyphs">Part</text><circle cx="2448.5" cy="1015" r="9" fill="#fff"/><path d="M2440.72 1022.78 A11 11 0 0 1 2456.28 1007.22" stroke="#a0a0a0" stroke-width="2" fill="none"/><path d="M2442.14 1021.36 A9 9 0 0 1 2454.86 1008.64" stroke="#696969" stroke-width="2" fill="none"/><path d="M2440.72 1022.78 A11 11 0 0 0 2456.28 1007.22" stroke="#ffffff" stroke-width="2" fill="none"/><text x="2472.3" y="1022.5" font-size="24" fill="#000" textLength="53.3" lengthAdjust="spacingAndGlyphs">Entire</text><rect x="2543" y="931" width="286" height="35" fill="#696969"/><rect x="2543" y="931" width="284" height="33" fill="#ffffff"/><rect x="2545" y="933" width="282" height="31" fill="#a0a0a0"/><rect x="2545" y="933" width="280" height="29" fill="#f0f0f0"/><text x="2556.4" y="954.1" font-size="24" fill="#000" textLength="255.6" lengthAdjust="spacingAndGlyphs">Correction for absorption</text><rect x="2543" y="971.5" width="206" height="35" fill="#696969"/><rect x="2543" y="971.5" width="204" height="33" fill="#ffffff"/><rect x="2545" y="973.5" width="202" height="31" fill="#a0a0a0"/><rect x="2545" y="973.5" width="200" height="29" fill="#f0f0f0"/><text x="2564.2" y="996.1" font-size="24" fill="#000" textLength="165.4" lengthAdjust="spacingAndGlyphs">Noise Reduction</text><rect x="2755" y="971.5" width="74" height="35" fill="#696969"/><rect x="2755" y="971.5" width="72" height="33" fill="#ffffff"/><rect x="2757" y="973.5" width="70" height="31" fill="#a0a0a0"/><rect x="2757" y="973.5" width="68" height="29" fill="#f0f0f0"/><text x="2762.4" y="993.9" font-size="24" fill="#000" textLength="57.4" lengthAdjust="spacingAndGlyphs">Reset</text><rect x="2539.6" y="1012.7" width="23.4" height="24.3" fill="#ffffff"/><rect x="2539.6" y="1012.7" width="21.4" height="22.3" fill="#a0a0a0"/><rect x="2541.6" y="1014.7" width="19.4" height="20.3" fill="#e3e3e3"/><rect x="2541.6" y="1014.7" width="17.4" height="18.3" fill="#696969"/><rect x="2543.6" y="1016.7" width="15.4" height="16.3" fill="#ffffff"/><path d="M2544.3 1023.85 l5 5 l9 -10" stroke="#000" stroke-width="4.5" fill="none"/><text x="2576.0" y="1032.3" font-size="24" fill="#000" textLength="103.7" lengthAdjust="spacingAndGlyphs">Information</text><rect x="2856" y="932" width="104" height="48" fill="#696969"/><rect x="2856" y="932" width="102" height="46" fill="#ffffff"/><rect x="2858" y="934" width="100" height="44" fill="#a0a0a0"/><rect x="2858" y="934" width="98" height="42" fill="#f0f0f0"/><text x="2862.0" y="962.0" font-size="24" fill="#000" textLength="74.8" lengthAdjust="spacingAndGlyphs">change</text><rect x="2839.5" y="1008" width="23.5" height="23" fill="#ffffff"/><rect x="2839.5" y="1008" width="21.5" height="21" fill="#a0a0a0"/><rect x="2841.5" y="1010" width="19.5" height="19" fill="#e3e3e3"/><rect x="2841.5" y="1010" width="17.5" height="17" fill="#696969"/><rect x="2843.5" y="1012" width="15.5" height="15" fill="#ffffff"/><path d="M2844.25 1018.5 l5 5 l9 -10" stroke="#000" stroke-width="4.5" fill="none"/><rect x="2740" y="1034.5" width="11" height="1.5" fill="#a0a0a0"/><rect x="2740" y="1036" width="11" height="1.5" fill="#ffffff"/><rect x="2824" y="1034.5" width="136" height="1.5" fill="#a0a0a0"/><rect x="2824" y="1036" width="136" height="1.5" fill="#ffffff"/><rect x="2740" y="1100.7" width="220" height="1.5" fill="#a0a0a0"/><rect x="2740" y="1102.2" width="220" height="1.5" fill="#ffffff"/><rect x="2740" y="1034.5" width="1.5" height="69.2" fill="#a0a0a0"/><rect x="2741.5" y="1034.5" width="1.5" height="69.2" fill="#ffffff"/><rect x="2957" y="1034.5" width="1.5" height="69.2" fill="#a0a0a0"/><rect x="2958.5" y="1034.5" width="1.5" height="69.2" fill="#ffffff"/><text x="2754.8" y="1041.5" font-size="24" fill="#000" textLength="65.0" lengthAdjust="spacingAndGlyphs">Object</text><rect x="2751.7" y="1055.5" width="37.3" height="33.1" fill="#ffffff"/><rect x="2751.7" y="1055.5" width="35.3" height="31.1" fill="#a0a0a0"/><rect x="2753.7" y="1057.5" width="33.3" height="29.1" fill="#e3e3e3"/><rect x="2753.7" y="1057.5" width="31.3" height="27.1" fill="#696969"/><rect x="2755.7" y="1059.5" width="29.3" height="25.1" fill="#f6f6f6"/><text x="2763.8" y="1078.0" font-size="24" fill="#000" textLength="13.4" lengthAdjust="spacingAndGlyphs">A</text><rect x="2795.5" y="1055.5" width="37.5" height="33.1" fill="#ffffff"/><rect x="2795.5" y="1055.5" width="35.5" height="31.1" fill="#a0a0a0"/><rect x="2797.5" y="1057.5" width="33.5" height="29.1" fill="#e3e3e3"/><rect x="2797.5" y="1057.5" width="31.5" height="27.1" fill="#696969"/><rect x="2799.5" y="1059.5" width="29.5" height="25.1" fill="#f6f6f6"/><text x="2808.0" y="1078.0" font-size="24" fill="#000" textLength="13.2" lengthAdjust="spacingAndGlyphs">B</text><rect x="2839.5" y="1055.5" width="37.5" height="33.1" fill="#ffffff"/><rect x="2839.5" y="1055.5" width="35.5" height="31.1" fill="#a0a0a0"/><rect x="2841.5" y="1057.5" width="33.5" height="29.1" fill="#e3e3e3"/><rect x="2841.5" y="1057.5" width="31.5" height="27.1" fill="#696969"/><rect x="2843.5" y="1059.5" width="29.5" height="25.1" fill="#f6f6f6"/><text x="2849.8" y="1078.0" font-size="24" fill="#000" textLength="14.9" lengthAdjust="spacingAndGlyphs">C</text><rect x="2291.5" y="1051" width="129" height="55.5" fill="#696969"/><rect x="2291.5" y="1051" width="127" height="53.5" fill="#ffffff"/><rect x="2293.5" y="1053" width="125" height="51.5" fill="#a0a0a0"/><rect x="2293.5" y="1053" width="123" height="49.5" fill="#f0f0f0"/><text x="2300.5" y="1084.1" font-size="24" fill="#000" textLength="108.7" lengthAdjust="spacingAndGlyphs">[3D] Image</text><rect x="1430" y="1183" width="1470" height="1.5" fill="#a0a0a0"/><rect x="1430" y="1184.5" width="1470" height="1.5" fill="#ffffff"/><rect x="1448" y="1238.5" width="10" height="1.5" fill="#a0a0a0"/><rect x="1448" y="1240" width="10" height="1.5" fill="#ffffff"/><rect x="1598" y="1238.5" width="1362" height="1.5" fill="#a0a0a0"/><rect x="1598" y="1240" width="1362" height="1.5" fill="#ffffff"/><rect x="1448" y="1447" width="1512" height="1.5" fill="#a0a0a0"/><rect x="1448" y="1448.5" width="1512" height="1.5" fill="#ffffff"/><rect x="1448" y="1238.5" width="1.5" height="211.5" fill="#a0a0a0"/><rect x="1449.5" y="1238.5" width="1.5" height="211.5" fill="#ffffff"/><rect x="2957" y="1238.5" width="1.5" height="211.5" fill="#a0a0a0"/><rect x="2958.5" y="1238.5" width="1.5" height="211.5" fill="#ffffff"/><text x="1462.1" y="1246.0" font-size="24" fill="#000" textLength="131.4" lengthAdjust="spacing">S/N vs Error</text><text x="1464.1" y="1284.6" font-size="24" font-weight="bold" stroke="#000" stroke-width="0.5" fill="#000" textLength="197.9" lengthAdjust="spacing">S/N (Full drop)</text><rect x="1671.7" y="1255.8" width="111.8" height="51.7" fill="#ffffff"/><rect x="1671.7" y="1255.8" width="109.8" height="49.7" fill="#a0a0a0"/><rect x="1673.7" y="1257.8" width="107.8" height="47.7" fill="#e3e3e3"/><rect x="1673.7" y="1257.8" width="105.8" height="45.7" fill="#696969"/><rect x="1675.7" y="1259.8" width="103.8" height="43.7" fill="#ffffff"/><text x="1684.3" y="1290.2" font-size="31" font-weight="bold" stroke="#0000ff" stroke-width="0.5" fill="#0000ff" textLength="42.8" lengthAdjust="spacingAndGlyphs">2.5</text><text x="1832.5" y="1284.6" font-size="24" font-weight="bold" stroke="#000" stroke-width="0.5" fill="#000" textLength="47.5" lengthAdjust="spacing">S/N</text><rect x="1895" y="1253" width="96" height="54" fill="#ffffff"/><rect x="1895" y="1253" width="94" height="52" fill="#a0a0a0"/><rect x="1897" y="1255" width="92" height="50" fill="#e3e3e3"/><rect x="1897" y="1255" width="90" height="48" fill="#696969"/><rect x="1899" y="1257" width="88" height="46" fill="#ffffff"/><text x="1902.3" y="1290.2" font-size="31" fill="#ff0000" textLength="42.8" lengthAdjust="spacingAndGlyphs">2.4</text><text x="2008.5" y="1284.6" font-size="24" font-weight="bold" stroke="#000" stroke-width="0.5" fill="#000" textLength="161.7" lengthAdjust="spacing">expected on</text><rect x="2183" y="1253.5" width="96.5" height="53.5" fill="#ffffff"/><rect x="2183" y="1253.5" width="94.5" height="51.5" fill="#a0a0a0"/><rect x="2185" y="1255.5" width="92.5" height="49.5" fill="#e3e3e3"/><rect x="2185" y="1255.5" width="90.5" height="47.5" fill="#696969"/><rect x="2187" y="1257.5" width="88.5" height="45.5" fill="#ffffff"/><text x="2190.6" y="1290.5" font-size="31" fill="#000" textLength="42.6" lengthAdjust="spacingAndGlyphs">3.4</text><text x="2296.3" y="1284.9" font-size="24" font-weight="bold" stroke="#000" stroke-width="0.5" fill="#000" textLength="121.4" lengthAdjust="spacing">Mag drop</text><text x="2487.7" y="1284.9" font-size="24" font-weight="bold" stroke="#000" stroke-width="0.5" fill="#000" textLength="213.9" lengthAdjust="spacing">Frame exposure</text><rect x="2727" y="1253.5" width="96" height="53.5" fill="#ffffff"/><rect x="2727" y="1253.5" width="94" height="51.5" fill="#a0a0a0"/><rect x="2729" y="1255.5" width="92" height="49.5" fill="#e3e3e3"/><rect x="2729" y="1255.5" width="90" height="47.5" fill="#696969"/><rect x="2731" y="1257.5" width="88" height="45.5" fill="#ffffff"/><text x="2735.8" y="1290.5" font-size="31" fill="#000" textLength="49.0" lengthAdjust="spacingAndGlyphs">165</text><text x="2840.0" y="1284.9" font-size="24" font-weight="bold" stroke="#000" stroke-width="0.5" fill="#000" textLength="70.0" lengthAdjust="spacing">msec</text><text x="1464.1" y="1348.0" font-size="24" font-weight="bold" stroke="#000" stroke-width="0.5" fill="#000" textLength="97.3" lengthAdjust="spacing">Fresnel</text><text x="1464.1" y="1379.6" font-size="24" font-weight="bold" stroke="#000" stroke-width="0.5" fill="#000" textLength="100.9" lengthAdjust="spacing">Number</text><rect x="1575" y="1333.5" width="96.8" height="53.1" fill="#ffffff"/><rect x="1575" y="1333.5" width="94.8" height="51.1" fill="#a0a0a0"/><rect x="1577" y="1335.5" width="92.8" height="49.1" fill="#e3e3e3"/><rect x="1577" y="1335.5" width="90.8" height="47.1" fill="#696969"/><rect x="1579" y="1337.5" width="88.8" height="45.1" fill="#ffffff"/><text x="1584.6" y="1369.8" font-size="31" fill="#000" textLength="67.6" lengthAdjust="spacingAndGlyphs">1209</text><text x="1703.9" y="1348.0" font-size="24" font-weight="bold" stroke="#000" stroke-width="0.5" fill="#000" textLength="153.7" lengthAdjust="spacing">Lower Limit</text><text x="1719.3" y="1379.6" font-size="24" font-weight="bold" stroke="#000" stroke-width="0.5" fill="#000" textLength="129.9" lengthAdjust="spacing">for detect</text><rect x="1863" y="1333.5" width="112" height="53.1" fill="#ffffff"/><rect x="1863" y="1333.5" width="110" height="51.1" fill="#a0a0a0"/><rect x="1865" y="1335.5" width="108" height="49.1" fill="#e3e3e3"/><rect x="1865" y="1335.5" width="106" height="47.1" fill="#696969"/><rect x="1867" y="1337.5" width="104" height="45.1" fill="#ffffff"/><text x="1872.4" y="1369.8" font-size="31" fill="#0000ff" textLength="67.1" lengthAdjust="spacingAndGlyphs">1466</text><text x="1976.4" y="1363.7" font-size="24" font-weight="bold" stroke="#000" stroke-width="0.5" fill="#000" textLength="69.9" lengthAdjust="spacing">msec</text><text x="2072.0" y="1348.0" font-size="24" font-weight="bold" stroke="#000" stroke-width="0.5" fill="#000" textLength="125.0" lengthAdjust="spacing">Predicted</text><text x="2072.0" y="1379.6" font-size="24" font-weight="bold" stroke="#000" stroke-width="0.5" fill="#000" textLength="134.0" lengthAdjust="spacing">Time Error</text><rect x="2215" y="1333" width="128" height="54" fill="#ffffff"/><rect x="2215" y="1333" width="126" height="52" fill="#a0a0a0"/><rect x="2217" y="1335" width="124" height="50" fill="#e3e3e3"/><rect x="2217" y="1335" width="122" height="48" fill="#696969"/><rect x="2219" y="1337" width="120" height="46" fill="#ffffff"/><text x="2222.3" y="1370.4" font-size="31" fill="#ff0000" textLength="50.2" lengthAdjust="spacingAndGlyphs">564</text><text x="2344.8" y="1379.6" font-size="24" font-weight="bold" stroke="#000" stroke-width="0.5" fill="#000" textLength="68.7" lengthAdjust="spacing">msec</text><text x="2440.0" y="1348.5" font-size="24" font-weight="bold" stroke="#000" stroke-width="0.5" fill="#000" textLength="246.7" lengthAdjust="spacing">Expected Error for</text><text x="2440.0" y="1379.6" font-size="24" font-weight="bold" stroke="#000" stroke-width="0.5" fill="#000" textLength="281.7" lengthAdjust="spacing">Analyzing event time</text><rect x="2727" y="1333" width="96" height="54" fill="#ffffff"/><rect x="2727" y="1333" width="94" height="52" fill="#a0a0a0"/><rect x="2729" y="1335" width="92" height="50" fill="#e3e3e3"/><rect x="2729" y="1335" width="90" height="48" fill="#696969"/><rect x="2731" y="1337" width="88" height="46" fill="#ffffff"/><text x="2735.8" y="1370.4" font-size="31" fill="#000" textLength="49.0" lengthAdjust="spacingAndGlyphs">148</text><text x="2834.0" y="1379.6" font-size="24" font-weight="bold" stroke="#000" stroke-width="0.5" fill="#000" textLength="70.0" lengthAdjust="spacing">msec</text></svg></div>
</body></html>
